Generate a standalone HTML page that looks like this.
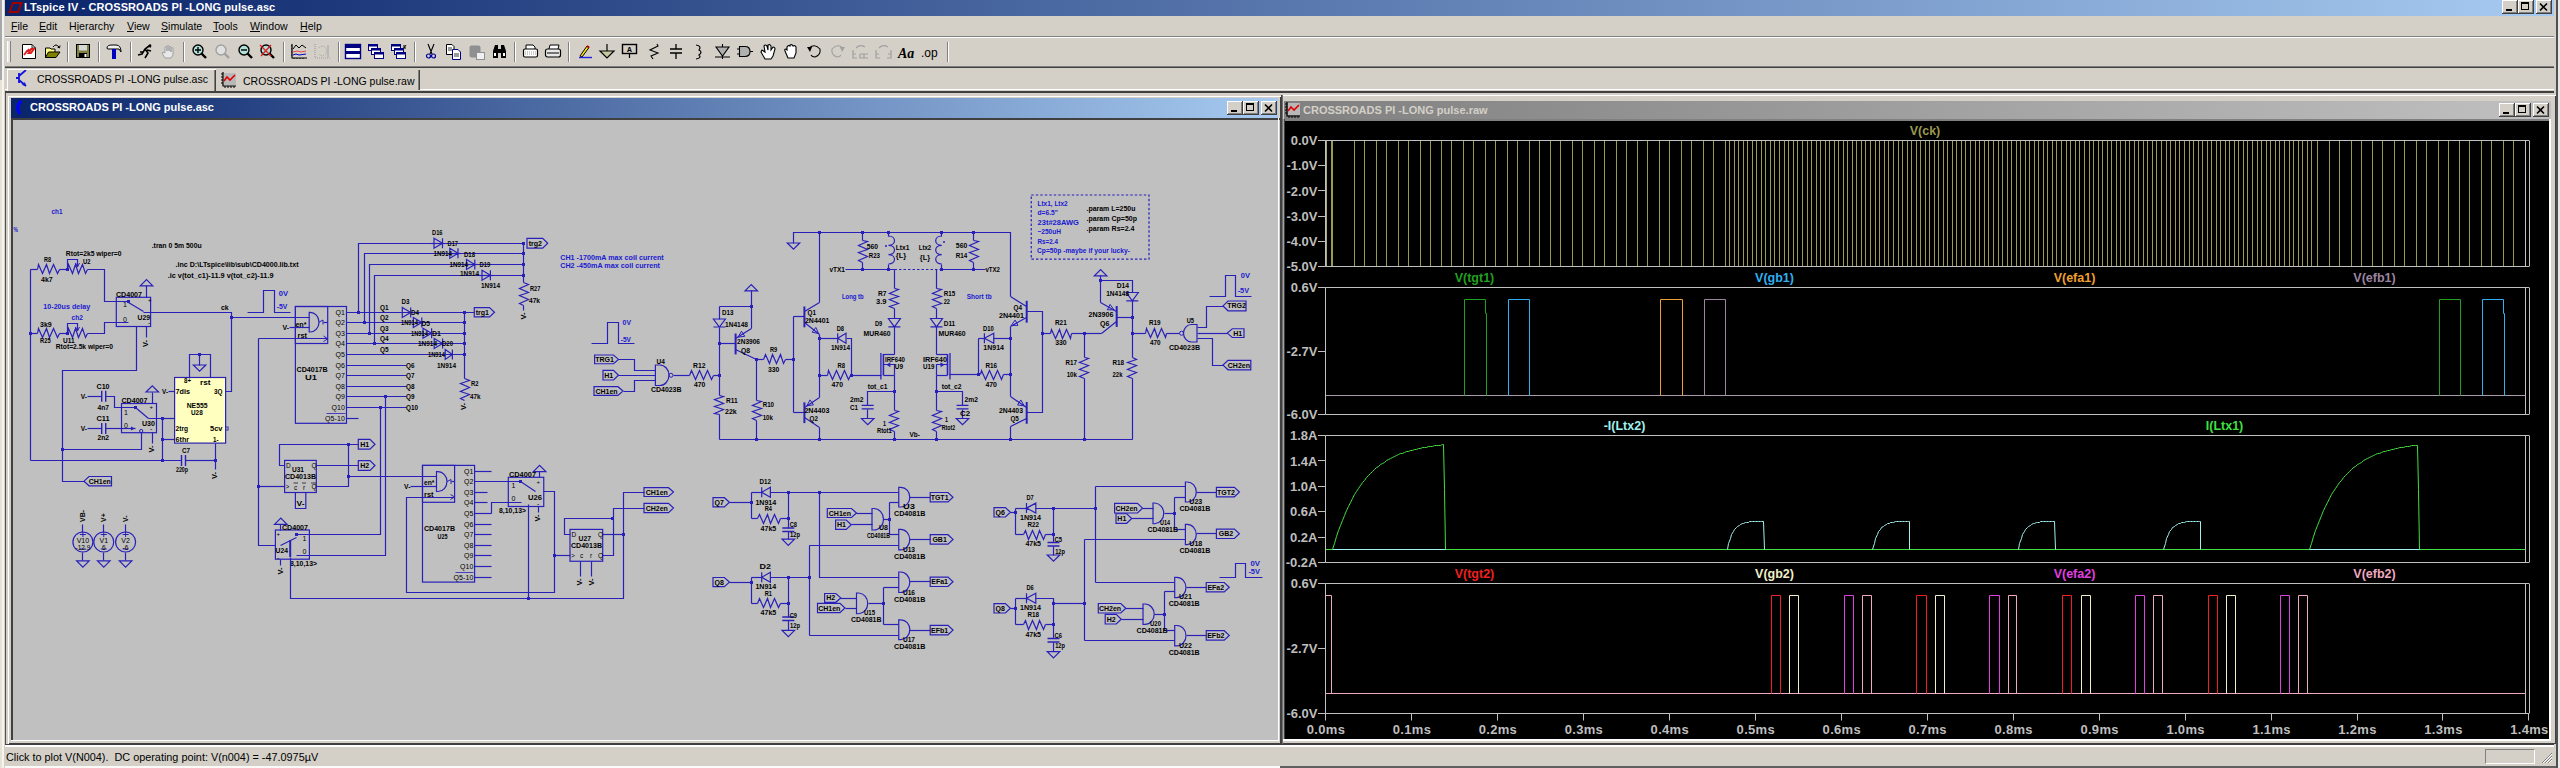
<!DOCTYPE html><html><head><meta charset="utf-8"><title>LTspice IV</title><style>html,body{margin:0;padding:0;width:2560px;height:768px;overflow:hidden;background:#D4D0C8;position:relative;font-family:"Liberation Sans",sans-serif}svg text{white-space:pre}</style></head><body><div style="position:absolute;left:5px;top:93px;width:2551px;height:651px;background:#D4D0C8"></div><div style="position:absolute;left:5px;top:93px;width:1px;height:651px;background:#505050"></div><div style="position:absolute;left:8px;top:96px;width:1273px;height:648px;background:#D4D0C8;box-shadow:inset 1px 1px 0 #FFF, inset -1px -1px 0 #404040"></div><div style="position:absolute;left:11px;top:98px;width:1267px;height:20px;background:linear-gradient(to right,#0A246A 0%,#A6CAF0 100%)"></div><svg style="position:absolute;left:13px;top:100px" width="12" height="15"><path d="M8,1 Q2,7 7,14" stroke="#0000FF" stroke-width="3" fill="none"/></svg><div style="position:absolute;left:30px;top:100px;white-space:pre;font:bold 11px/15px Liberation Sans,sans-serif;color:#FFF;letter-spacing:0px">CROSSROADS PI -LONG pulse.asc</div><div style="position:absolute;left:1227px;top:101px;width:16px;height:14px;background:#D4D0C8;box-shadow: inset -1px -1px 0 #404040, inset 1px 1px 0 #FFFFFF, inset -2px -2px 0 #808080;"></div><div style="position:absolute;left:1231px;top:110px;width:6px;height:2px;background:#000"></div><div style="position:absolute;left:1243px;top:101px;width:16px;height:14px;background:#D4D0C8;box-shadow: inset -1px -1px 0 #404040, inset 1px 1px 0 #FFFFFF, inset -2px -2px 0 #808080;"></div><div style="position:absolute;left:1246px;top:103px;width:8px;height:8px;box-sizing:border-box;border:1px solid #000;border-top-width:2px;"></div><div style="position:absolute;left:1261px;top:101px;width:16px;height:14px;background:#D4D0C8;box-shadow: inset -1px -1px 0 #404040, inset 1px 1px 0 #FFFFFF, inset -2px -2px 0 #808080;"></div><svg style="position:absolute;left:1261px;top:101px" width="16" height="14"><path d="M4.0,3.5 L11.0,10.5 M11.0,3.5 L4.0,10.5" stroke="#000" stroke-width="1.6"/></svg><div style="position:absolute;left:11px;top:118px;width:1269px;height:2px;background:#404040"></div><div style="position:absolute;left:11px;top:118px;width:2px;height:623px;background:#404040"></div><div style="position:absolute;left:1278px;top:118px;width:1px;height:623px;background:#FFFFFF"></div><div style="position:absolute;left:11px;top:740px;width:1268px;height:1px;background:#FFFFFF"></div><div style="position:absolute;left:13px;top:120px;width:1265px;height:620px;background:#C0C0C0"></div><div style="position:absolute;left:1281px;top:95px;width:1275px;height:649px;background:#D4D0C8;box-shadow:inset 1px 1px 0 #FFF, inset -1px -1px 0 #404040"></div><div style="position:absolute;left:1281px;top:95px;width:1px;height:649px;background:#404040"></div><div style="position:absolute;left:1282px;top:95px;width:1px;height:649px;background:#707070"></div><div style="position:absolute;left:1284px;top:101px;width:1267px;height:18px;background:linear-gradient(to right,#808080 0%,#C0C0C0 100%)"></div><svg style="position:absolute;left:1285px;top:102px" width="16" height="16"><rect x="3" y="1" width="12" height="12" fill="#B8B8B8"/><path d="M2,0 V14 H15" stroke="#000" stroke-width="1.2" fill="none"/><path d="M0,2 H2 M0,5 H2 M0,8 H2 M0,11 H2 M4,14 V16 M7,14 V16 M10,14 V16 M13,14 V16" stroke="#000" stroke-width="1"/><path d="M3,9 L6,5 L9,8 L14,3" stroke="#E00000" stroke-width="1.6" fill="none"/></svg><div style="position:absolute;left:1303px;top:103px;white-space:pre;font:bold 11px/15px Liberation Sans,sans-serif;color:#D4D0C8;letter-spacing:0px">CROSSROADS PI -LONG pulse.raw</div><div style="position:absolute;left:2499px;top:103px;width:16px;height:14px;background:#D4D0C8;box-shadow: inset -1px -1px 0 #404040, inset 1px 1px 0 #FFFFFF, inset -2px -2px 0 #808080;"></div><div style="position:absolute;left:2503px;top:112px;width:6px;height:2px;background:#000"></div><div style="position:absolute;left:2515px;top:103px;width:16px;height:14px;background:#D4D0C8;box-shadow: inset -1px -1px 0 #404040, inset 1px 1px 0 #FFFFFF, inset -2px -2px 0 #808080;"></div><div style="position:absolute;left:2518px;top:105px;width:8px;height:8px;box-sizing:border-box;border:1px solid #000;border-top-width:2px;"></div><div style="position:absolute;left:2533px;top:103px;width:16px;height:14px;background:#D4D0C8;box-shadow: inset -1px -1px 0 #404040, inset 1px 1px 0 #FFFFFF, inset -2px -2px 0 #808080;"></div><svg style="position:absolute;left:2533px;top:103px" width="16" height="14"><path d="M4.0,3.5 L11.0,10.5 M11.0,3.5 L4.0,10.5" stroke="#000" stroke-width="1.6"/></svg><div style="position:absolute;left:1283px;top:119px;width:1268px;height:2px;background:#808080"></div><div style="position:absolute;left:1283px;top:119px;width:1px;height:621px;background:#A0A0A0"></div><div style="position:absolute;left:1284px;top:119px;width:1px;height:621px;background:#404040"></div><div style="position:absolute;left:2549px;top:119px;width:2px;height:621px;background:#FFFFFF"></div><div style="position:absolute;left:1283px;top:739px;width:1268px;height:2px;background:#FFFFFF"></div><div style="position:absolute;left:0px;top:0px;width:2px;height:80px;background:#A8A8A8"></div><div style="position:absolute;left:0px;top:80px;width:2px;height:688px;background:#E8E2D4"></div><div style="position:absolute;left:2px;top:0px;width:2px;height:768px;background:#F4F4F0"></div><div style="position:absolute;left:2556px;top:0px;width:2px;height:768px;background:#505050"></div><div style="position:absolute;left:2558px;top:0px;width:2px;height:768px;background:#E8E8E8"></div><div style="position:absolute;left:5px;top:0px;width:2549px;height:16px;background:linear-gradient(to right,#0A246A 0%,#A6CAF0 100%)"></div><svg style="position:absolute;left:7px;top:1px" width="16" height="14"><path d="M2.5,11 L6,2 H14.5 L11,11 Z" fill="none" stroke="#A00000" stroke-width="2"/></svg><div style="position:absolute;left:24px;top:0px;white-space:pre;font:bold 11px/15px Liberation Sans,sans-serif;color:#FFF;letter-spacing:0.1px">LTspice IV - CROSSROADS PI -LONG pulse.asc</div><div style="position:absolute;left:2502px;top:0px;width:16px;height:14px;background:#D4D0C8;box-shadow: inset -1px -1px 0 #404040, inset 1px 1px 0 #FFFFFF, inset -2px -2px 0 #808080;"></div><div style="position:absolute;left:2506px;top:9px;width:6px;height:2px;background:#000"></div><div style="position:absolute;left:2518px;top:0px;width:16px;height:14px;background:#D4D0C8;box-shadow: inset -1px -1px 0 #404040, inset 1px 1px 0 #FFFFFF, inset -2px -2px 0 #808080;"></div><div style="position:absolute;left:2521px;top:2px;width:8px;height:8px;box-sizing:border-box;border:1px solid #000;border-top-width:2px;"></div><div style="position:absolute;left:2536px;top:0px;width:16px;height:14px;background:#D4D0C8;box-shadow: inset -1px -1px 0 #404040, inset 1px 1px 0 #FFFFFF, inset -2px -2px 0 #808080;"></div><svg style="position:absolute;left:2536px;top:0px" width="16" height="14"><path d="M4.0,3.5 L11.0,10.5 M11.0,3.5 L4.0,10.5" stroke="#000" stroke-width="1.6"/></svg><div style="position:absolute;left:11px;top:19px;white-space:pre;font:10.6px/14px Liberation Sans,sans-serif;color:#000;letter-spacing:0px"><u>F</u>ile</div><div style="position:absolute;left:39px;top:19px;white-space:pre;font:10.6px/14px Liberation Sans,sans-serif;color:#000;letter-spacing:0px"><u>E</u>dit</div><div style="position:absolute;left:69px;top:19px;white-space:pre;font:10.6px/14px Liberation Sans,sans-serif;color:#000;letter-spacing:0px">H<u>i</u>erarchy</div><div style="position:absolute;left:127px;top:19px;white-space:pre;font:10.6px/14px Liberation Sans,sans-serif;color:#000;letter-spacing:0px"><u>V</u>iew</div><div style="position:absolute;left:161px;top:19px;white-space:pre;font:10.6px/14px Liberation Sans,sans-serif;color:#000;letter-spacing:0px"><u>S</u>imulate</div><div style="position:absolute;left:213px;top:19px;white-space:pre;font:10.6px/14px Liberation Sans,sans-serif;color:#000;letter-spacing:0px"><u>T</u>ools</div><div style="position:absolute;left:250px;top:19px;white-space:pre;font:10.6px/14px Liberation Sans,sans-serif;color:#000;letter-spacing:0px"><u>W</u>indow</div><div style="position:absolute;left:300px;top:19px;white-space:pre;font:10.6px/14px Liberation Sans,sans-serif;color:#000;letter-spacing:0px"><u>H</u>elp</div><div style="position:absolute;left:5px;top:36px;width:2549px;height:1px;background:#808080"></div><div style="position:absolute;left:5px;top:37px;width:2549px;height:1px;background:#FFFFFF"></div><div style="position:absolute;left:7px;top:41px;width:1px;height:21px;background:#FFF"></div><div style="position:absolute;left:8px;top:41px;width:2px;height:21px;background:#E8E6E0;border-right:1px solid #808080"></div><div style="position:absolute;left:67px;top:42px;width:1px;height:20px;background:#808080"></div><div style="position:absolute;left:68px;top:42px;width:1px;height:20px;background:#FFF"></div><div style="position:absolute;left:98px;top:42px;width:1px;height:20px;background:#808080"></div><div style="position:absolute;left:99px;top:42px;width:1px;height:20px;background:#FFF"></div><div style="position:absolute;left:130px;top:42px;width:1px;height:20px;background:#808080"></div><div style="position:absolute;left:131px;top:42px;width:1px;height:20px;background:#FFF"></div><div style="position:absolute;left:183px;top:42px;width:1px;height:20px;background:#808080"></div><div style="position:absolute;left:184px;top:42px;width:1px;height:20px;background:#FFF"></div><div style="position:absolute;left:283px;top:42px;width:1px;height:20px;background:#808080"></div><div style="position:absolute;left:284px;top:42px;width:1px;height:20px;background:#FFF"></div><div style="position:absolute;left:338px;top:42px;width:1px;height:20px;background:#808080"></div><div style="position:absolute;left:339px;top:42px;width:1px;height:20px;background:#FFF"></div><div style="position:absolute;left:414px;top:42px;width:1px;height:20px;background:#808080"></div><div style="position:absolute;left:415px;top:42px;width:1px;height:20px;background:#FFF"></div><div style="position:absolute;left:514px;top:42px;width:1px;height:20px;background:#808080"></div><div style="position:absolute;left:515px;top:42px;width:1px;height:20px;background:#FFF"></div><div style="position:absolute;left:568px;top:42px;width:1px;height:20px;background:#808080"></div><div style="position:absolute;left:569px;top:42px;width:1px;height:20px;background:#FFF"></div><div style="position:absolute;left:947px;top:42px;width:1px;height:20px;background:#808080"></div><div style="position:absolute;left:948px;top:42px;width:1px;height:20px;background:#FFF"></div><div style="position:absolute;left:5px;top:66px;width:2549px;height:1px;background:#808080"></div><div style="position:absolute;left:5px;top:67px;width:2549px;height:1px;background:#404040"></div><div style="position:absolute;left:5px;top:89px;width:2549px;height:1px;background:#FFFFFF"></div><div style="position:absolute;left:5px;top:91px;width:2549px;height:2px;background:#404040"></div><div style="position:absolute;left:7px;top:69px;width:209px;height:22px;background:#D4D0C8;box-shadow:inset 1px 1px 0 #FFF, inset -1px 0 0 #404040, inset -2px 0 0 #808080"></div><div style="position:absolute;left:37px;top:72px;white-space:pre;font:10.5px/14px Liberation Sans,sans-serif;color:#000;letter-spacing:0px">CROSSROADS PI -LONG pulse.asc</div><svg style="position:absolute;left:16px;top:70px" width="14" height="17"><path d="M3,3 V13 M3,8 H0 M3,6 L10,0 M3,10 L10,16" stroke="#1010E0" stroke-width="1.8" fill="none"/><path d="M10,16 L6,15 L9,12 Z" fill="#1010E0"/></svg><div style="position:absolute;left:216px;top:70px;width:204px;height:20px;background:#D4D0C8;box-shadow:inset -1px 0 0 #404040, inset -2px 0 0 #808080"></div><div style="position:absolute;left:243px;top:74px;white-space:pre;font:10.5px/14px Liberation Sans,sans-serif;color:#000;letter-spacing:0px">CROSSROADS PI -LONG pulse.raw</div><svg style="position:absolute;left:221px;top:72px" width="16" height="16"><rect x="3" y="1" width="12" height="12" fill="#B8B8B8"/><path d="M2,0 V14 H15" stroke="#000" stroke-width="1.2" fill="none"/><path d="M0,2 H2 M0,5 H2 M0,8 H2 M0,11 H2 M4,14 V16 M7,14 V16 M10,14 V16 M13,14 V16" stroke="#000" stroke-width="1"/><path d="M3,9 L6,5 L9,8 L14,3" stroke="#E00000" stroke-width="1.6" fill="none"/></svg><div style="position:absolute;left:5px;top:744px;width:2549px;height:1px;background:#404040"></div><div style="position:absolute;left:5px;top:745px;width:2549px;height:2px;background:#FFFFFF"></div><div style="position:absolute;left:6px;top:750px;white-space:pre;font:10.85px/14px Liberation Sans,sans-serif;color:#000;letter-spacing:0px">Click to plot V(N004).  DC operating point: V(n004) = -47.0975µV</div><div style="position:absolute;left:2485px;top:749px;width:50px;height:15px;box-sizing:border-box;border:1px solid;border-color:#808080 #FFF #FFF #808080"></div><svg style="position:absolute;left:2541px;top:752px" width="12" height="12"><path d="M11,1 L1,11 M11,4 L4,11 M11,7 L7,11" stroke="#808080" stroke-width="1"/><path d="M11,2 L2,11 M11,5 L5,11 M11,8 L8,11" stroke="#FFF" stroke-width="1"/></svg><div style="position:absolute;left:5px;top:766px;width:1275px;height:2px;background:#FAFAF8"></div><div style="position:absolute;left:1280px;top:766px;width:1276px;height:2px;background:#606060"></div><svg style="position:absolute;left:0;top:38px" width="960" height="28" viewBox="0 38 960 28"><g transform="translate(22,44)"><path d="M0.5,0.5 H10 L13.5,4 V14.5 H0.5 Z" fill="#FFF" stroke="#000"/><path d="M10,0.5 V4 H13.5" fill="none" stroke="#000" stroke-width="0.8"/><path d="M2,11 L5,7 H8 L6.5,9 H9 L12,5 H9 L7.5,7 H5.5 L7,5" fill="none" stroke="#E02020" stroke-width="1.8"/></g><g transform="translate(45,44)"><path d="M0.5,4 H5 L6,5 H10 V13.5 H0.5 Z" fill="#FFFF80" stroke="#000"/><path d="M0.5,13.5 L3.5,8 H15 L11,13.5 Z" fill="#808000" stroke="#000"/><path d="M8,3 Q11,-1 14,3" fill="none" stroke="#000" stroke-width="1"/><path d="M12.5,3 L14.5,4 L15,1.5" fill="none" stroke="#000"/></g><g transform="translate(76,44)"><rect x="0.5" y="0.5" width="13" height="13" fill="#808040" stroke="#000"/><rect x="3" y="1" width="8" height="5.5" fill="#D8D8D8"/><rect x="3" y="9" width="8" height="4.5" fill="#000"/><rect x="8.5" y="10" width="2" height="3" fill="#FFF"/></g><g transform="translate(106,44)"><path d="M1,4 Q1,1 6,1 H10 Q15,1 15,8 L13,5 H1.5 Z" fill="#F0F0F0" stroke="#000"/><rect x="6" y="5" width="4" height="10" fill="#0000C0"/></g><g transform="translate(137,44)"><path d="M1,11 L5,10 L8,5 L12,2 L14,3 M8,5 L11,9 L8,14 M10,6 L14,7 M6,8 L3,8" fill="none" stroke="#000" stroke-width="1.6"/><circle cx="13" cy="1.5" r="1.3" fill="#000"/></g><g transform="translate(161,44)"><path d="M4,14 L1,9 L2,8 L4,9 V3 Q5,2 6,3 V7 V2 Q7,1 8,2 V7 V3 Q9,2 10,3 V8 V4 Q11,3 12,4 V11 L10,14 Z" fill="#E8E8E8" stroke="#A0A0A0"/></g><g transform="translate(192,44)"><circle cx="6" cy="6" r="5" fill="#B0E0D8" stroke="#000" stroke-width="1.4"/><path d="M9.5,9.5 L14,14" stroke="#000" stroke-width="2.4"/><path d="M3,6 H9 M6,3 V9" stroke="#000" stroke-width="1.4"/></g><g transform="translate(215,44)"><circle cx="6" cy="6" r="5" fill="#E0E0E0" stroke="#A0A0A0" stroke-width="1.4"/><path d="M9.5,9.5 L14,14" stroke="#A0A0A0" stroke-width="2.4"/></g><g transform="translate(238,44)"><circle cx="6" cy="6" r="5" fill="#B0E0D8" stroke="#000" stroke-width="1.4"/><path d="M9.5,9.5 L14,14" stroke="#000" stroke-width="2.4"/><path d="M3,6 H9" stroke="#000" stroke-width="1.4"/></g><g transform="translate(260,44)"><circle cx="6" cy="6" r="5" fill="#B0E0D8" stroke="#000" stroke-width="1.4"/><path d="M9.5,9.5 L14,14" stroke="#000" stroke-width="2.4"/><path d="M0,1 L11,12 M11,1 L1,12" stroke="#E02020" stroke-width="1.4"/></g><g transform="translate(291,44)"><path d="M1,0 V14 H16" fill="none" stroke="#000" stroke-width="1.2"/><path d="M0,2 H1 M0,5 H1 M0,8 H1 M0,11 H1 M3,14 V15 M6,14 V15 M9,14 V15 M12,14 V15" stroke="#000"/><path d="M2,5 L5,1 L8,4 L11,1 L15,4" fill="none" stroke="#000"/><path d="M2,8 L6,7 L10,8 L15,7" fill="none" stroke="#F04040"/><path d="M2,11 L5,10 L8,11 L15,10" fill="none" stroke="#0000C0"/></g><g transform="translate(314,44)"><path d="M1,0 V14 H16" fill="none" stroke="#A0A0A0" stroke-width="1.2" stroke-dasharray="1,1"/><path d="M5,4 Q8,1 11,3 Q14,7 11,11 Q8,13 5,10" fill="none" stroke="#A0A0A0" stroke-dasharray="1,1"/><path d="M14,1 V13" stroke="#A0A0A0"/></g><g transform="translate(345,44)"><rect x="0.5" y="0.5" width="15" height="14" fill="#FFF" stroke="#000080" stroke-width="1.4"/><rect x="1" y="1" width="14" height="3" fill="#000080"/><rect x="1" y="7" width="14" height="3" fill="#000080"/></g><g transform="translate(368,44)"><rect x="0.5" y="0.5" width="9" height="6" fill="#FFF" stroke="#000080"/><rect x="0.5" y="0.5" width="9" height="2" fill="#000080"/><rect x="3.5" y="4.5" width="9" height="6" fill="#FFF" stroke="#000080"/><rect x="3.5" y="4.5" width="9" height="2" fill="#000080"/><rect x="6.5" y="8.5" width="9" height="6" fill="#FFF" stroke="#000080"/><rect x="6.5" y="8.5" width="9" height="2" fill="#000080"/></g><g transform="translate(391,44)"><rect x="0.5" y="0.5" width="9" height="6" fill="#FFF" stroke="#000080"/><rect x="0.5" y="0.5" width="9" height="2" fill="#000080"/><rect x="3.5" y="4.5" width="9" height="6" fill="#FFF" stroke="#000080"/><rect x="3.5" y="4.5" width="9" height="2" fill="#000080"/><rect x="5.5" y="8.5" width="9" height="6" fill="#FFF" stroke="#000080"/><rect x="5.5" y="8.5" width="9" height="2" fill="#000080"/><path d="M13,4 L15,1 M13,1 V4 H15" stroke="#000" fill="none"/></g><g transform="translate(425,44)"><path d="M3,0 L7,10 M9,0 L5,10" stroke="#000" stroke-width="1.1"/><circle cx="3.5" cy="12" r="2" fill="none" stroke="#0000A0" stroke-width="1.2"/><circle cx="8.5" cy="12" r="2" fill="none" stroke="#0000A0" stroke-width="1.2"/></g><g transform="translate(446,44)"><path d="M0.5,0.5 H6 L8,2.5 V10.5 H0.5 Z" fill="#FFF" stroke="#000"/><path d="M6.5,5.5 H12 L14.5,8 V15.5 H6.5 Z" fill="#FFF" stroke="#000080"/><path d="M2,4 H6 M2,6 H6 M8,10 H13 M8,12 H13" stroke="#000" stroke-width="0.8"/></g><g transform="translate(469,44)"><rect x="0.5" y="1.5" width="11" height="12" rx="2" fill="#909090"/><rect x="7.5" y="8.5" width="8" height="7" fill="#F0F0F0" stroke="#909090"/></g><g transform="translate(492,44)"><path d="M1,14 V7 L3,1 H6 V14 Z M9,14 V1 H12 L14,7 V14 Z M6,5 H9 V9 H6 Z" fill="#000"/><rect x="2" y="9" width="2" height="3" fill="#FFF"/><rect x="11" y="9" width="2" height="3" fill="#FFF"/></g><g transform="translate(523,44)"><path d="M3,5 V1 H10 L12,3 V5" fill="#FFF" stroke="#000"/><rect x="0.5" y="5" width="14" height="8" rx="1.5" fill="#FFF" stroke="#000" stroke-width="1.2"/><path d="M2,8 H13 M2,10 H13" stroke="#999" stroke-dasharray="1,1"/></g><g transform="translate(545,44)"><path d="M4,5 L5,1 H14 L13,5" fill="#FFF" stroke="#000"/><rect x="0.5" y="5" width="15" height="8" rx="2" fill="#E8E8E8" stroke="#000" stroke-width="1.2"/><path d="M2,9 H14" stroke="#000"/></g><g transform="translate(578,44)"><path d="M2,12 L9,2 L11,3.5 L4,13 Z" fill="#FFE000" stroke="#000"/><path d="M9,2 L11,3.5" stroke="#C00000" stroke-width="2"/><path d="M1,13.5 H14" stroke="#2020E0" stroke-width="1.4"/></g><g transform="translate(599,44)"><path d="M8,0 V7" stroke="#000" stroke-width="1.2"/><path d="M1,7 H15 L8,14 Z" fill="#C8C8A0" stroke="#000" stroke-width="1.2"/></g><g transform="translate(622,44)"><rect x="0.5" y="0.5" width="14" height="9" fill="#D4D0C8" stroke="#000" stroke-width="1.4"/><text x="7.5" y="8" font-size="8" font-family="Liberation Mono" font-weight="bold" text-anchor="middle">A</text><path d="M7.5,10 V14" stroke="#000" stroke-width="1.2"/></g><g transform="translate(648,44)"><path d="M9,0 L10,2 L2,6 L10,9 L3,12 L5,15" fill="none" stroke="#000" stroke-width="1.1"/></g><g transform="translate(670,44)"><path d="M6,0 V5 M0,5 H12 M0,9 H12 M6,9 V15" fill="none" stroke="#000" stroke-width="1.3"/></g><g transform="translate(696,44)"><path d="M0,1 Q6,2 3,6 Q7,8 3,11 Q6,14 0,15" fill="none" stroke="#000" stroke-width="1.2"/></g><g transform="translate(715,44)"><path d="M7.5,0 V15 M0,13 H15" stroke="#000" stroke-width="1.1"/><path d="M1,3 H14 L7.5,12 Z" fill="#B0B0B0" stroke="#000" stroke-width="1.1"/></g><g transform="translate(737,44)"><path d="M2.5,2.5 H8 Q13,2.5 13,7.5 Q13,12.5 8,12.5 H2.5 Z" fill="#B0B0B0" stroke="#000" stroke-width="1.1"/><path d="M0,5 H2.5 M0,10 H2.5 M13,7.5 H16" stroke="#000"/></g><g transform="translate(760,44)"><path d="M5,15 L1,8 L2,6 L5,8 L4,2 Q5,0 7,2 L8,6 L8,1 Q10,0 11,2 L11,6 L13,3 Q15,3 15,5 L13,12 L11,15 Z" fill="#FFF" stroke="#000" stroke-width="1.1"/></g><g transform="translate(784,44)"><path d="M4,14 L1,7 Q0,5 2,5 L3,6 V3 Q4,1 6,2 V1 Q8,0 9,2 Q11,1 12,3 V9 L10,14 Z" fill="#FFF" stroke="#000" stroke-width="1.1"/></g><g transform="translate(807,44)"><path d="M2,4 Q8,-1 13,5 Q14,11 8,13 Q5,13 4,11" fill="none" stroke="#000" stroke-width="1.1"/><path d="M0,3 L3,8 L5,3 Z" fill="#000"/></g><g transform="translate(830,44)"><path d="M13,4 Q7,-1 2,5 Q1,11 7,13 Q10,13 11,11" fill="none" stroke="#A0A0A0" stroke-width="1.1"/><path d="M15,3 L12,8 L10,3 Z" fill="#A0A0A0"/></g><g transform="translate(852,44)"><path d="M1,6 V14 H5 M1,10 H4 M8,10 V14 H16 M8,10 H16 M12,10 V14 M4,4 Q8,0 13,3" fill="none" stroke="#A0A0A0" stroke-width="1.2"/></g><g transform="translate(875,44)"><path d="M1,6 V14 H5 M1,10 H4 M16,6 V14 H12 M16,10 H13 M4,4 Q8,0 13,3" fill="none" stroke="#A0A0A0" stroke-width="1.2"/></g><text x="898" y="58" font-family="Liberation Serif" font-style="italic" font-weight="bold" font-size="14" fill="#000">Aa</text><text x="921" y="57" font-family="Liberation Sans" font-size="12" fill="#000">.op</text></svg><svg style="position:absolute;left:1285px;top:121px" width="1264" height="618" viewBox="1285 121 1264 618"><rect x="1285" y="121" width="1264" height="618" fill="#000"/><line x1="1354.50" y1="140.50" x2="1354.50" y2="266.50" stroke="#9A9A50" stroke-width="1"/><line x1="1364.50" y1="140.50" x2="1364.50" y2="266.50" stroke="#9A9A50" stroke-width="1"/><line x1="1376.50" y1="140.50" x2="1376.50" y2="266.50" stroke="#9A9A50" stroke-width="1"/><line x1="1386.50" y1="140.50" x2="1386.50" y2="266.50" stroke="#9A9A50" stroke-width="1"/><line x1="1398.50" y1="140.50" x2="1398.50" y2="266.50" stroke="#9A9A50" stroke-width="1"/><line x1="1408.50" y1="140.50" x2="1408.50" y2="266.50" stroke="#9A9A50" stroke-width="1"/><line x1="1420.50" y1="140.50" x2="1420.50" y2="266.50" stroke="#9A9A50" stroke-width="1"/><line x1="1430.50" y1="140.50" x2="1430.50" y2="266.50" stroke="#9A9A50" stroke-width="1"/><line x1="1441.50" y1="140.50" x2="1441.50" y2="266.50" stroke="#9A9A50" stroke-width="1"/><line x1="1451.50" y1="140.50" x2="1451.50" y2="266.50" stroke="#9A9A50" stroke-width="1"/><line x1="1463.50" y1="140.50" x2="1463.50" y2="266.50" stroke="#9A9A50" stroke-width="1"/><line x1="1473.50" y1="140.50" x2="1473.50" y2="266.50" stroke="#9A9A50" stroke-width="1"/><line x1="1485.50" y1="140.50" x2="1485.50" y2="266.50" stroke="#9A9A50" stroke-width="1"/><line x1="1495.50" y1="140.50" x2="1495.50" y2="266.50" stroke="#9A9A50" stroke-width="1"/><line x1="1507.50" y1="140.50" x2="1507.50" y2="266.50" stroke="#9A9A50" stroke-width="1"/><line x1="1517.50" y1="140.50" x2="1517.50" y2="266.50" stroke="#9A9A50" stroke-width="1"/><line x1="1529.50" y1="140.50" x2="1529.50" y2="266.50" stroke="#9A9A50" stroke-width="1"/><line x1="1539.50" y1="140.50" x2="1539.50" y2="266.50" stroke="#9A9A50" stroke-width="1"/><line x1="1550.50" y1="140.50" x2="1550.50" y2="266.50" stroke="#9A9A50" stroke-width="1"/><line x1="1560.50" y1="140.50" x2="1560.50" y2="266.50" stroke="#9A9A50" stroke-width="1"/><line x1="1572.50" y1="140.50" x2="1572.50" y2="266.50" stroke="#9A9A50" stroke-width="1"/><line x1="1582.50" y1="140.50" x2="1582.50" y2="266.50" stroke="#9A9A50" stroke-width="1"/><line x1="1594.50" y1="140.50" x2="1594.50" y2="266.50" stroke="#9A9A50" stroke-width="1"/><line x1="1604.50" y1="140.50" x2="1604.50" y2="266.50" stroke="#9A9A50" stroke-width="1"/><line x1="1616.50" y1="140.50" x2="1616.50" y2="266.50" stroke="#9A9A50" stroke-width="1"/><line x1="1626.50" y1="140.50" x2="1626.50" y2="266.50" stroke="#9A9A50" stroke-width="1"/><line x1="1637.50" y1="140.50" x2="1637.50" y2="266.50" stroke="#9A9A50" stroke-width="1"/><line x1="1647.50" y1="140.50" x2="1647.50" y2="266.50" stroke="#9A9A50" stroke-width="1"/><line x1="1659.50" y1="140.50" x2="1659.50" y2="266.50" stroke="#9A9A50" stroke-width="1"/><line x1="1669.50" y1="140.50" x2="1669.50" y2="266.50" stroke="#9A9A50" stroke-width="1"/><line x1="1681.50" y1="140.50" x2="1681.50" y2="266.50" stroke="#9A9A50" stroke-width="1"/><line x1="1691.50" y1="140.50" x2="1691.50" y2="266.50" stroke="#9A9A50" stroke-width="1"/><line x1="1703.50" y1="140.50" x2="1703.50" y2="266.50" stroke="#9A9A50" stroke-width="1"/><line x1="1713.50" y1="140.50" x2="1713.50" y2="266.50" stroke="#9A9A50" stroke-width="1"/><line x1="1725.50" y1="140.50" x2="1725.50" y2="266.50" stroke="#9A9A50" stroke-width="1"/><line x1="1729.50" y1="140.50" x2="1729.50" y2="266.50" stroke="#9A9A50" stroke-width="1"/><line x1="1734.50" y1="140.50" x2="1734.50" y2="266.50" stroke="#9A9A50" stroke-width="1"/><line x1="1738.50" y1="140.50" x2="1738.50" y2="266.50" stroke="#9A9A50" stroke-width="1"/><line x1="1743.50" y1="140.50" x2="1743.50" y2="266.50" stroke="#9A9A50" stroke-width="1"/><line x1="1747.50" y1="140.50" x2="1747.50" y2="266.50" stroke="#9A9A50" stroke-width="1"/><line x1="1752.50" y1="140.50" x2="1752.50" y2="266.50" stroke="#9A9A50" stroke-width="1"/><line x1="1756.50" y1="140.50" x2="1756.50" y2="266.50" stroke="#9A9A50" stroke-width="1"/><line x1="1761.50" y1="140.50" x2="1761.50" y2="266.50" stroke="#9A9A50" stroke-width="1"/><line x1="1765.50" y1="140.50" x2="1765.50" y2="266.50" stroke="#9A9A50" stroke-width="1"/><line x1="1770.50" y1="140.50" x2="1770.50" y2="266.50" stroke="#9A9A50" stroke-width="1"/><line x1="1774.50" y1="140.50" x2="1774.50" y2="266.50" stroke="#9A9A50" stroke-width="1"/><line x1="1779.50" y1="140.50" x2="1779.50" y2="266.50" stroke="#9A9A50" stroke-width="1"/><line x1="1784.50" y1="140.50" x2="1784.50" y2="266.50" stroke="#9A9A50" stroke-width="1"/><line x1="1788.50" y1="140.50" x2="1788.50" y2="266.50" stroke="#9A9A50" stroke-width="1"/><line x1="1793.50" y1="140.50" x2="1793.50" y2="266.50" stroke="#9A9A50" stroke-width="1"/><line x1="1797.50" y1="140.50" x2="1797.50" y2="266.50" stroke="#9A9A50" stroke-width="1"/><line x1="1802.50" y1="140.50" x2="1802.50" y2="266.50" stroke="#9A9A50" stroke-width="1"/><line x1="1807.50" y1="140.50" x2="1807.50" y2="266.50" stroke="#9A9A50" stroke-width="1"/><line x1="1811.50" y1="140.50" x2="1811.50" y2="266.50" stroke="#9A9A50" stroke-width="1"/><line x1="1816.50" y1="140.50" x2="1816.50" y2="266.50" stroke="#9A9A50" stroke-width="1"/><line x1="1820.50" y1="140.50" x2="1820.50" y2="266.50" stroke="#9A9A50" stroke-width="1"/><line x1="1825.50" y1="140.50" x2="1825.50" y2="266.50" stroke="#9A9A50" stroke-width="1"/><line x1="1829.50" y1="140.50" x2="1829.50" y2="266.50" stroke="#9A9A50" stroke-width="1"/><line x1="1834.50" y1="140.50" x2="1834.50" y2="266.50" stroke="#9A9A50" stroke-width="1"/><line x1="1838.50" y1="140.50" x2="1838.50" y2="266.50" stroke="#9A9A50" stroke-width="1"/><line x1="1843.50" y1="140.50" x2="1843.50" y2="266.50" stroke="#9A9A50" stroke-width="1"/><line x1="1847.50" y1="140.50" x2="1847.50" y2="266.50" stroke="#9A9A50" stroke-width="1"/><line x1="1852.50" y1="140.50" x2="1852.50" y2="266.50" stroke="#9A9A50" stroke-width="1"/><line x1="1856.50" y1="140.50" x2="1856.50" y2="266.50" stroke="#9A9A50" stroke-width="1"/><line x1="1861.50" y1="140.50" x2="1861.50" y2="266.50" stroke="#9A9A50" stroke-width="1"/><line x1="1865.50" y1="140.50" x2="1865.50" y2="266.50" stroke="#9A9A50" stroke-width="1"/><line x1="1870.50" y1="140.50" x2="1870.50" y2="266.50" stroke="#9A9A50" stroke-width="1"/><line x1="1875.50" y1="140.50" x2="1875.50" y2="266.50" stroke="#9A9A50" stroke-width="1"/><line x1="1879.50" y1="140.50" x2="1879.50" y2="266.50" stroke="#9A9A50" stroke-width="1"/><line x1="1884.50" y1="140.50" x2="1884.50" y2="266.50" stroke="#9A9A50" stroke-width="1"/><line x1="1888.50" y1="140.50" x2="1888.50" y2="266.50" stroke="#9A9A50" stroke-width="1"/><line x1="1893.50" y1="140.50" x2="1893.50" y2="266.50" stroke="#9A9A50" stroke-width="1"/><line x1="1898.50" y1="140.50" x2="1898.50" y2="266.50" stroke="#9A9A50" stroke-width="1"/><line x1="1902.50" y1="140.50" x2="1902.50" y2="266.50" stroke="#9A9A50" stroke-width="1"/><line x1="1907.50" y1="140.50" x2="1907.50" y2="266.50" stroke="#9A9A50" stroke-width="1"/><line x1="1911.50" y1="140.50" x2="1911.50" y2="266.50" stroke="#9A9A50" stroke-width="1"/><line x1="1916.50" y1="140.50" x2="1916.50" y2="266.50" stroke="#9A9A50" stroke-width="1"/><line x1="1920.50" y1="140.50" x2="1920.50" y2="266.50" stroke="#9A9A50" stroke-width="1"/><line x1="1925.50" y1="140.50" x2="1925.50" y2="266.50" stroke="#9A9A50" stroke-width="1"/><line x1="1929.50" y1="140.50" x2="1929.50" y2="266.50" stroke="#9A9A50" stroke-width="1"/><line x1="1934.50" y1="140.50" x2="1934.50" y2="266.50" stroke="#9A9A50" stroke-width="1"/><line x1="1938.50" y1="140.50" x2="1938.50" y2="266.50" stroke="#9A9A50" stroke-width="1"/><line x1="1943.50" y1="140.50" x2="1943.50" y2="266.50" stroke="#9A9A50" stroke-width="1"/><line x1="1947.50" y1="140.50" x2="1947.50" y2="266.50" stroke="#9A9A50" stroke-width="1"/><line x1="1952.50" y1="140.50" x2="1952.50" y2="266.50" stroke="#9A9A50" stroke-width="1"/><line x1="1956.50" y1="140.50" x2="1956.50" y2="266.50" stroke="#9A9A50" stroke-width="1"/><line x1="1961.50" y1="140.50" x2="1961.50" y2="266.50" stroke="#9A9A50" stroke-width="1"/><line x1="1965.50" y1="140.50" x2="1965.50" y2="266.50" stroke="#9A9A50" stroke-width="1"/><line x1="1970.50" y1="140.50" x2="1970.50" y2="266.50" stroke="#9A9A50" stroke-width="1"/><line x1="1975.50" y1="140.50" x2="1975.50" y2="266.50" stroke="#9A9A50" stroke-width="1"/><line x1="1979.50" y1="140.50" x2="1979.50" y2="266.50" stroke="#9A9A50" stroke-width="1"/><line x1="1984.50" y1="140.50" x2="1984.50" y2="266.50" stroke="#9A9A50" stroke-width="1"/><line x1="1988.50" y1="140.50" x2="1988.50" y2="266.50" stroke="#9A9A50" stroke-width="1"/><line x1="1993.50" y1="140.50" x2="1993.50" y2="266.50" stroke="#9A9A50" stroke-width="1"/><line x1="1998.50" y1="140.50" x2="1998.50" y2="266.50" stroke="#9A9A50" stroke-width="1"/><line x1="2002.50" y1="140.50" x2="2002.50" y2="266.50" stroke="#9A9A50" stroke-width="1"/><line x1="2007.50" y1="140.50" x2="2007.50" y2="266.50" stroke="#9A9A50" stroke-width="1"/><line x1="2011.50" y1="140.50" x2="2011.50" y2="266.50" stroke="#9A9A50" stroke-width="1"/><line x1="2016.50" y1="140.50" x2="2016.50" y2="266.50" stroke="#9A9A50" stroke-width="1"/><line x1="2020.50" y1="140.50" x2="2020.50" y2="266.50" stroke="#9A9A50" stroke-width="1"/><line x1="2025.50" y1="140.50" x2="2025.50" y2="266.50" stroke="#9A9A50" stroke-width="1"/><line x1="2029.50" y1="140.50" x2="2029.50" y2="266.50" stroke="#9A9A50" stroke-width="1"/><line x1="2034.50" y1="140.50" x2="2034.50" y2="266.50" stroke="#9A9A50" stroke-width="1"/><line x1="2038.50" y1="140.50" x2="2038.50" y2="266.50" stroke="#9A9A50" stroke-width="1"/><line x1="2043.50" y1="140.50" x2="2043.50" y2="266.50" stroke="#9A9A50" stroke-width="1"/><line x1="2047.50" y1="140.50" x2="2047.50" y2="266.50" stroke="#9A9A50" stroke-width="1"/><line x1="2052.50" y1="140.50" x2="2052.50" y2="266.50" stroke="#9A9A50" stroke-width="1"/><line x1="2056.50" y1="140.50" x2="2056.50" y2="266.50" stroke="#9A9A50" stroke-width="1"/><line x1="2061.50" y1="140.50" x2="2061.50" y2="266.50" stroke="#9A9A50" stroke-width="1"/><line x1="2066.50" y1="140.50" x2="2066.50" y2="266.50" stroke="#9A9A50" stroke-width="1"/><line x1="2070.50" y1="140.50" x2="2070.50" y2="266.50" stroke="#9A9A50" stroke-width="1"/><line x1="2075.50" y1="140.50" x2="2075.50" y2="266.50" stroke="#9A9A50" stroke-width="1"/><line x1="2079.50" y1="140.50" x2="2079.50" y2="266.50" stroke="#9A9A50" stroke-width="1"/><line x1="2084.50" y1="140.50" x2="2084.50" y2="266.50" stroke="#9A9A50" stroke-width="1"/><line x1="2089.50" y1="140.50" x2="2089.50" y2="266.50" stroke="#9A9A50" stroke-width="1"/><line x1="2093.50" y1="140.50" x2="2093.50" y2="266.50" stroke="#9A9A50" stroke-width="1"/><line x1="2098.50" y1="140.50" x2="2098.50" y2="266.50" stroke="#9A9A50" stroke-width="1"/><line x1="2102.50" y1="140.50" x2="2102.50" y2="266.50" stroke="#9A9A50" stroke-width="1"/><line x1="2107.50" y1="140.50" x2="2107.50" y2="266.50" stroke="#9A9A50" stroke-width="1"/><line x1="2111.50" y1="140.50" x2="2111.50" y2="266.50" stroke="#9A9A50" stroke-width="1"/><line x1="2116.50" y1="140.50" x2="2116.50" y2="266.50" stroke="#9A9A50" stroke-width="1"/><line x1="2120.50" y1="140.50" x2="2120.50" y2="266.50" stroke="#9A9A50" stroke-width="1"/><line x1="2125.50" y1="140.50" x2="2125.50" y2="266.50" stroke="#9A9A50" stroke-width="1"/><line x1="2129.50" y1="140.50" x2="2129.50" y2="266.50" stroke="#9A9A50" stroke-width="1"/><line x1="2134.50" y1="140.50" x2="2134.50" y2="266.50" stroke="#9A9A50" stroke-width="1"/><line x1="2138.50" y1="140.50" x2="2138.50" y2="266.50" stroke="#9A9A50" stroke-width="1"/><line x1="2143.50" y1="140.50" x2="2143.50" y2="266.50" stroke="#9A9A50" stroke-width="1"/><line x1="2147.50" y1="140.50" x2="2147.50" y2="266.50" stroke="#9A9A50" stroke-width="1"/><line x1="2152.50" y1="140.50" x2="2152.50" y2="266.50" stroke="#9A9A50" stroke-width="1"/><line x1="2156.50" y1="140.50" x2="2156.50" y2="266.50" stroke="#9A9A50" stroke-width="1"/><line x1="2161.50" y1="140.50" x2="2161.50" y2="266.50" stroke="#9A9A50" stroke-width="1"/><line x1="2166.50" y1="140.50" x2="2166.50" y2="266.50" stroke="#9A9A50" stroke-width="1"/><line x1="2170.50" y1="140.50" x2="2170.50" y2="266.50" stroke="#9A9A50" stroke-width="1"/><line x1="2175.50" y1="140.50" x2="2175.50" y2="266.50" stroke="#9A9A50" stroke-width="1"/><line x1="2179.50" y1="140.50" x2="2179.50" y2="266.50" stroke="#9A9A50" stroke-width="1"/><line x1="2184.50" y1="140.50" x2="2184.50" y2="266.50" stroke="#9A9A50" stroke-width="1"/><line x1="2189.50" y1="140.50" x2="2189.50" y2="266.50" stroke="#9A9A50" stroke-width="1"/><line x1="2193.50" y1="140.50" x2="2193.50" y2="266.50" stroke="#9A9A50" stroke-width="1"/><line x1="2198.50" y1="140.50" x2="2198.50" y2="266.50" stroke="#9A9A50" stroke-width="1"/><line x1="2202.50" y1="140.50" x2="2202.50" y2="266.50" stroke="#9A9A50" stroke-width="1"/><line x1="2207.50" y1="140.50" x2="2207.50" y2="266.50" stroke="#9A9A50" stroke-width="1"/><line x1="2211.50" y1="140.50" x2="2211.50" y2="266.50" stroke="#9A9A50" stroke-width="1"/><line x1="2216.50" y1="140.50" x2="2216.50" y2="266.50" stroke="#9A9A50" stroke-width="1"/><line x1="2220.50" y1="140.50" x2="2220.50" y2="266.50" stroke="#9A9A50" stroke-width="1"/><line x1="2225.50" y1="140.50" x2="2225.50" y2="266.50" stroke="#9A9A50" stroke-width="1"/><line x1="2229.50" y1="140.50" x2="2229.50" y2="266.50" stroke="#9A9A50" stroke-width="1"/><line x1="2234.50" y1="140.50" x2="2234.50" y2="266.50" stroke="#9A9A50" stroke-width="1"/><line x1="2238.50" y1="140.50" x2="2238.50" y2="266.50" stroke="#9A9A50" stroke-width="1"/><line x1="2243.50" y1="140.50" x2="2243.50" y2="266.50" stroke="#9A9A50" stroke-width="1"/><line x1="2247.50" y1="140.50" x2="2247.50" y2="266.50" stroke="#9A9A50" stroke-width="1"/><line x1="2252.50" y1="140.50" x2="2252.50" y2="266.50" stroke="#9A9A50" stroke-width="1"/><line x1="2257.50" y1="140.50" x2="2257.50" y2="266.50" stroke="#9A9A50" stroke-width="1"/><line x1="2261.50" y1="140.50" x2="2261.50" y2="266.50" stroke="#9A9A50" stroke-width="1"/><line x1="2266.50" y1="140.50" x2="2266.50" y2="266.50" stroke="#9A9A50" stroke-width="1"/><line x1="2270.50" y1="140.50" x2="2270.50" y2="266.50" stroke="#9A9A50" stroke-width="1"/><line x1="2275.50" y1="140.50" x2="2275.50" y2="266.50" stroke="#9A9A50" stroke-width="1"/><line x1="2279.50" y1="140.50" x2="2279.50" y2="266.50" stroke="#9A9A50" stroke-width="1"/><line x1="2284.50" y1="140.50" x2="2284.50" y2="266.50" stroke="#9A9A50" stroke-width="1"/><line x1="2289.50" y1="140.50" x2="2289.50" y2="266.50" stroke="#9A9A50" stroke-width="1"/><line x1="2293.50" y1="140.50" x2="2293.50" y2="266.50" stroke="#9A9A50" stroke-width="1"/><line x1="2298.50" y1="140.50" x2="2298.50" y2="266.50" stroke="#9A9A50" stroke-width="1"/><line x1="2302.50" y1="140.50" x2="2302.50" y2="266.50" stroke="#9A9A50" stroke-width="1"/><line x1="2307.50" y1="140.50" x2="2307.50" y2="266.50" stroke="#9A9A50" stroke-width="1"/><line x1="2311.50" y1="140.50" x2="2311.50" y2="266.50" stroke="#9A9A50" stroke-width="1"/><line x1="2317.50" y1="140.50" x2="2317.50" y2="266.50" stroke="#9A9A50" stroke-width="1"/><line x1="2329.50" y1="140.50" x2="2329.50" y2="266.50" stroke="#9A9A50" stroke-width="1"/><line x1="2339.50" y1="140.50" x2="2339.50" y2="266.50" stroke="#9A9A50" stroke-width="1"/><line x1="2351.50" y1="140.50" x2="2351.50" y2="266.50" stroke="#9A9A50" stroke-width="1"/><line x1="2361.50" y1="140.50" x2="2361.50" y2="266.50" stroke="#9A9A50" stroke-width="1"/><line x1="2372.50" y1="140.50" x2="2372.50" y2="266.50" stroke="#9A9A50" stroke-width="1"/><line x1="2382.50" y1="140.50" x2="2382.50" y2="266.50" stroke="#9A9A50" stroke-width="1"/><line x1="2394.50" y1="140.50" x2="2394.50" y2="266.50" stroke="#9A9A50" stroke-width="1"/><line x1="2404.50" y1="140.50" x2="2404.50" y2="266.50" stroke="#9A9A50" stroke-width="1"/><line x1="2416.50" y1="140.50" x2="2416.50" y2="266.50" stroke="#9A9A50" stroke-width="1"/><line x1="2426.50" y1="140.50" x2="2426.50" y2="266.50" stroke="#9A9A50" stroke-width="1"/><line x1="2438.50" y1="140.50" x2="2438.50" y2="266.50" stroke="#9A9A50" stroke-width="1"/><line x1="2448.50" y1="140.50" x2="2448.50" y2="266.50" stroke="#9A9A50" stroke-width="1"/><line x1="2459.50" y1="140.50" x2="2459.50" y2="266.50" stroke="#9A9A50" stroke-width="1"/><line x1="2469.50" y1="140.50" x2="2469.50" y2="266.50" stroke="#9A9A50" stroke-width="1"/><line x1="2481.50" y1="140.50" x2="2481.50" y2="266.50" stroke="#9A9A50" stroke-width="1"/><line x1="2491.50" y1="140.50" x2="2491.50" y2="266.50" stroke="#9A9A50" stroke-width="1"/><line x1="2503.50" y1="140.50" x2="2503.50" y2="266.50" stroke="#9A9A50" stroke-width="1"/><line x1="2513.50" y1="140.50" x2="2513.50" y2="266.50" stroke="#9A9A50" stroke-width="1"/><line x1="1332.00" y1="140.50" x2="1332.00" y2="266.50" stroke="#9A9A50" stroke-width="2"/><line x1="1326.50" y1="140.50" x2="1326.50" y2="266.50" stroke="#A8A880" stroke-width="1"/><line x1="2525.50" y1="140.50" x2="2525.50" y2="266.50" stroke="#C0C0C0" stroke-width="1"/><line x1="1325.50" y1="140.50" x2="2529.00" y2="140.50" stroke="#C0C0C0" stroke-width="1"/><line x1="1325.50" y1="266.50" x2="2529.00" y2="266.50" stroke="#C0C0C0" stroke-width="1"/><line x1="1325.50" y1="140.50" x2="1325.50" y2="266.50" stroke="#C0C0C0" stroke-width="1"/><line x1="2529.50" y1="140.50" x2="2529.50" y2="266.50" stroke="#C0C0C0" stroke-width="1"/><line x1="1318.00" y1="140.50" x2="1325.50" y2="140.50" stroke="#C0C0C0" stroke-width="1"/><text x="1317.5" y="145.2" fill="#BEBEBE" font-family='"Liberation Sans",sans-serif' font-size="13" font-weight="bold" text-anchor="end" letter-spacing="0">0.0V</text><line x1="1318.00" y1="165.50" x2="1325.50" y2="165.50" stroke="#C0C0C0" stroke-width="1"/><text x="1317.5" y="170.4" fill="#BEBEBE" font-family='"Liberation Sans",sans-serif' font-size="13" font-weight="bold" text-anchor="end" letter-spacing="0">-1.0V</text><line x1="1318.00" y1="190.50" x2="1325.50" y2="190.50" stroke="#C0C0C0" stroke-width="1"/><text x="1317.5" y="195.6" fill="#BEBEBE" font-family='"Liberation Sans",sans-serif' font-size="13" font-weight="bold" text-anchor="end" letter-spacing="0">-2.0V</text><line x1="1318.00" y1="216.50" x2="1325.50" y2="216.50" stroke="#C0C0C0" stroke-width="1"/><text x="1317.5" y="220.8" fill="#BEBEBE" font-family='"Liberation Sans",sans-serif' font-size="13" font-weight="bold" text-anchor="end" letter-spacing="0">-3.0V</text><line x1="1318.00" y1="241.50" x2="1325.50" y2="241.50" stroke="#C0C0C0" stroke-width="1"/><text x="1317.5" y="246.0" fill="#BEBEBE" font-family='"Liberation Sans",sans-serif' font-size="13" font-weight="bold" text-anchor="end" letter-spacing="0">-4.0V</text><line x1="1318.00" y1="266.50" x2="1325.50" y2="266.50" stroke="#C0C0C0" stroke-width="1"/><text x="1317.5" y="271.2" fill="#BEBEBE" font-family='"Liberation Sans",sans-serif' font-size="13" font-weight="bold" text-anchor="end" letter-spacing="0">-5.0V</text><text x="1925.0" y="134.5" fill="#9A9A50" font-family='"Liberation Sans",sans-serif' font-size="12.5" font-weight="bold" text-anchor="middle" letter-spacing="0">V(ck)</text><line x1="1325.50" y1="395.50" x2="2525.50" y2="395.50" stroke="#A898A8" stroke-width="1"/><polyline points="1464.50,395.50 1464.50,299.50 1485.50,299.50 1485.50,313.50 1486.50,313.50 1486.50,395.50" fill="none" stroke="#20A020" stroke-width="1" stroke-linejoin="miter"/><polyline points="1508.50,395.50 1508.50,299.50 1529.50,299.50 1529.50,395.50" fill="none" stroke="#30B0F0" stroke-width="1" stroke-linejoin="miter"/><polyline points="1660.50,395.50 1660.50,299.50 1682.50,299.50 1682.50,395.50" fill="none" stroke="#F0A030" stroke-width="1" stroke-linejoin="miter"/><polyline points="1704.50,395.50 1704.50,299.50 1725.50,299.50 1725.50,395.50" fill="none" stroke="#9C84A0" stroke-width="1" stroke-linejoin="miter"/><polyline points="2439.50,395.50 2439.50,299.50 2460.50,299.50 2460.50,395.50" fill="none" stroke="#20A020" stroke-width="1" stroke-linejoin="miter"/><polyline points="2482.50,395.50 2482.50,299.50 2503.50,299.50 2503.50,313.50 2504.50,313.50 2504.50,395.50" fill="none" stroke="#30B0F0" stroke-width="1" stroke-linejoin="miter"/><line x1="2525.50" y1="287.50" x2="2525.50" y2="414.50" stroke="#C0C0C0" stroke-width="1"/><line x1="1325.50" y1="287.50" x2="2529.00" y2="287.50" stroke="#C0C0C0" stroke-width="1"/><line x1="1325.50" y1="414.50" x2="2529.00" y2="414.50" stroke="#C0C0C0" stroke-width="1"/><line x1="1325.50" y1="287.50" x2="1325.50" y2="414.50" stroke="#C0C0C0" stroke-width="1"/><line x1="2529.50" y1="287.50" x2="2529.50" y2="414.50" stroke="#C0C0C0" stroke-width="1"/><line x1="1318.00" y1="287.50" x2="1325.50" y2="287.50" stroke="#C0C0C0" stroke-width="1"/><text x="1317.5" y="292.2" fill="#BEBEBE" font-family='"Liberation Sans",sans-serif' font-size="13" font-weight="bold" text-anchor="end" letter-spacing="0">0.6V</text><line x1="1318.00" y1="351.50" x2="1325.50" y2="351.50" stroke="#C0C0C0" stroke-width="1"/><text x="1317.5" y="355.7" fill="#BEBEBE" font-family='"Liberation Sans",sans-serif' font-size="13" font-weight="bold" text-anchor="end" letter-spacing="0">-2.7V</text><line x1="1318.00" y1="414.50" x2="1325.50" y2="414.50" stroke="#C0C0C0" stroke-width="1"/><text x="1317.5" y="419.2" fill="#BEBEBE" font-family='"Liberation Sans",sans-serif' font-size="13" font-weight="bold" text-anchor="end" letter-spacing="0">-6.0V</text><text x="1474.5" y="282.0" fill="#20A020" font-family='"Liberation Sans",sans-serif' font-size="12.5" font-weight="bold" text-anchor="middle" letter-spacing="0">V(tgt1)</text><text x="1774.5" y="282.0" fill="#30B0F0" font-family='"Liberation Sans",sans-serif' font-size="12.5" font-weight="bold" text-anchor="middle" letter-spacing="0">V(gb1)</text><text x="2074.5" y="282.0" fill="#F0A030" font-family='"Liberation Sans",sans-serif' font-size="12.5" font-weight="bold" text-anchor="middle" letter-spacing="0">V(efa1)</text><text x="2374.5" y="282.0" fill="#9C84A0" font-family='"Liberation Sans",sans-serif' font-size="12.5" font-weight="bold" text-anchor="middle" letter-spacing="0">V(efb1)</text><line x1="1325.50" y1="549.50" x2="2525.50" y2="549.50" stroke="#40E040" stroke-width="1"/><line x1="1332.70" y1="549.50" x2="1446.00" y2="549.50" stroke="#A0F0F0" stroke-width="1"/><polyline points="1332.50,549.50 1334.50,543.50 1336.50,536.50 1338.50,530.50 1340.50,525.50 1342.50,520.50 1344.50,515.50 1346.50,510.50 1348.50,506.50 1350.50,502.50 1352.50,498.50 1354.50,494.50 1356.50,491.50 1358.50,488.50 1360.50,485.50 1362.50,482.50 1364.50,480.50 1366.50,477.50 1368.50,475.50 1370.50,473.50 1372.50,471.50 1374.50,469.50 1376.50,467.50 1378.50,466.50 1380.50,464.50 1382.50,463.50 1384.50,462.50 1386.50,460.50 1388.50,459.50 1390.50,458.50 1392.50,457.50 1394.50,456.50 1396.50,455.50 1398.50,454.50 1400.50,453.50 1402.50,453.50 1404.50,452.50 1406.50,451.50 1408.50,451.50 1410.50,450.50 1412.50,450.50 1414.50,449.50 1416.50,449.50 1418.50,448.50 1420.50,448.50 1422.50,447.50 1424.50,447.50 1426.50,447.50 1428.50,446.50 1430.50,446.50 1432.50,446.50 1434.50,445.50 1436.50,445.50 1438.50,445.50 1440.50,445.50 1442.50,444.50 1443.50,444.50 1444.50,489.50 1445.50,549.50" fill="none" stroke="#40E040" stroke-width="1" stroke-linejoin="miter"/><polyline points="1727.50,549.50 1728.50,543.50 1730.50,538.50 1731.50,534.50 1733.50,531.50 1734.50,529.50 1736.50,527.50 1737.50,526.50 1739.50,525.50 1740.50,524.50 1742.50,523.50 1743.50,523.50 1745.50,522.50 1746.50,522.50 1748.50,522.50 1749.50,521.50 1751.50,521.50 1752.50,521.50 1754.50,521.50 1755.50,521.50 1757.50,521.50 1758.50,521.50 1760.50,521.50 1761.50,521.50 1763.50,521.50 1763.50,521.50 1764.50,549.50" fill="none" stroke="#A0F0F0" stroke-width="1" stroke-linejoin="miter"/><polyline points="1872.50,549.50 1874.50,543.50 1875.50,538.50 1877.50,534.50 1878.50,531.50 1880.50,529.50 1881.50,527.50 1883.50,526.50 1884.50,525.50 1886.50,524.50 1887.50,523.50 1889.50,523.50 1890.50,522.50 1892.50,522.50 1893.50,522.50 1895.50,521.50 1896.50,521.50 1898.50,521.50 1899.50,521.50 1901.50,521.50 1902.50,521.50 1904.50,521.50 1905.50,521.50 1907.50,521.50 1908.50,521.50 1909.50,521.50 1909.50,549.50" fill="none" stroke="#A0F0F0" stroke-width="1" stroke-linejoin="miter"/><polyline points="2018.50,549.50 2019.50,543.50 2021.50,538.50 2022.50,534.50 2024.50,531.50 2025.50,529.50 2027.50,527.50 2028.50,526.50 2030.50,525.50 2031.50,524.50 2033.50,523.50 2034.50,523.50 2036.50,522.50 2037.50,522.50 2039.50,522.50 2040.50,521.50 2042.50,521.50 2043.50,521.50 2045.50,521.50 2046.50,521.50 2048.50,521.50 2049.50,521.50 2051.50,521.50 2052.50,521.50 2054.50,521.50 2054.50,521.50 2055.50,549.50" fill="none" stroke="#A0F0F0" stroke-width="1" stroke-linejoin="miter"/><polyline points="2163.50,549.50 2165.50,543.50 2166.50,538.50 2168.50,534.50 2169.50,531.50 2171.50,529.50 2172.50,527.50 2174.50,526.50 2175.50,525.50 2177.50,524.50 2178.50,523.50 2180.50,523.50 2181.50,522.50 2183.50,522.50 2184.50,522.50 2186.50,521.50 2187.50,521.50 2189.50,521.50 2190.50,521.50 2192.50,521.50 2193.50,521.50 2195.50,521.50 2196.50,521.50 2198.50,521.50 2199.50,521.50 2200.50,521.50 2200.50,549.50" fill="none" stroke="#A0F0F0" stroke-width="1" stroke-linejoin="miter"/><line x1="2309.20" y1="549.50" x2="2420.00" y2="549.50" stroke="#A0F0F0" stroke-width="1"/><polyline points="2309.50,549.50 2311.50,543.50 2313.50,536.50 2315.50,530.50 2317.50,525.50 2319.50,520.50 2321.50,515.50 2323.50,510.50 2325.50,506.50 2327.50,502.50 2329.50,498.50 2331.50,494.50 2333.50,491.50 2335.50,488.50 2337.50,485.50 2339.50,482.50 2341.50,480.50 2343.50,477.50 2345.50,475.50 2347.50,473.50 2349.50,471.50 2351.50,469.50 2353.50,467.50 2355.50,466.50 2357.50,464.50 2359.50,463.50 2361.50,462.50 2363.50,460.50 2365.50,459.50 2367.50,458.50 2369.50,457.50 2371.50,456.50 2373.50,455.50 2375.50,454.50 2377.50,453.50 2379.50,453.50 2381.50,452.50 2383.50,451.50 2385.50,451.50 2387.50,450.50 2389.50,450.50 2391.50,449.50 2393.50,449.50 2395.50,448.50 2397.50,448.50 2399.50,447.50 2401.50,447.50 2403.50,447.50 2405.50,446.50 2407.50,446.50 2409.50,446.50 2411.50,445.50 2413.50,445.50 2415.50,445.50 2417.50,445.50 2417.50,445.50 2418.50,489.50 2419.50,549.50" fill="none" stroke="#40E040" stroke-width="1" stroke-linejoin="miter"/><line x1="2525.50" y1="435.50" x2="2525.50" y2="562.50" stroke="#C0C0C0" stroke-width="1"/><line x1="1325.50" y1="435.50" x2="2529.00" y2="435.50" stroke="#C0C0C0" stroke-width="1"/><line x1="1325.50" y1="562.50" x2="2529.00" y2="562.50" stroke="#C0C0C0" stroke-width="1"/><line x1="1325.50" y1="435.50" x2="1325.50" y2="562.50" stroke="#C0C0C0" stroke-width="1"/><line x1="2529.50" y1="435.50" x2="2529.50" y2="562.50" stroke="#C0C0C0" stroke-width="1"/><line x1="1318.00" y1="435.50" x2="1325.50" y2="435.50" stroke="#C0C0C0" stroke-width="1"/><text x="1317.5" y="440.2" fill="#BEBEBE" font-family='"Liberation Sans",sans-serif' font-size="13" font-weight="bold" text-anchor="end" letter-spacing="0">1.8A</text><line x1="1318.00" y1="460.50" x2="1325.50" y2="460.50" stroke="#C0C0C0" stroke-width="1"/><text x="1317.5" y="465.6" fill="#BEBEBE" font-family='"Liberation Sans",sans-serif' font-size="13" font-weight="bold" text-anchor="end" letter-spacing="0">1.4A</text><line x1="1318.00" y1="486.50" x2="1325.50" y2="486.50" stroke="#C0C0C0" stroke-width="1"/><text x="1317.5" y="491.0" fill="#BEBEBE" font-family='"Liberation Sans",sans-serif' font-size="13" font-weight="bold" text-anchor="end" letter-spacing="0">1.0A</text><line x1="1318.00" y1="511.50" x2="1325.50" y2="511.50" stroke="#C0C0C0" stroke-width="1"/><text x="1317.5" y="516.4" fill="#BEBEBE" font-family='"Liberation Sans",sans-serif' font-size="13" font-weight="bold" text-anchor="end" letter-spacing="0">0.6A</text><line x1="1318.00" y1="537.50" x2="1325.50" y2="537.50" stroke="#C0C0C0" stroke-width="1"/><text x="1317.5" y="541.8" fill="#BEBEBE" font-family='"Liberation Sans",sans-serif' font-size="13" font-weight="bold" text-anchor="end" letter-spacing="0">0.2A</text><line x1="1318.00" y1="562.50" x2="1325.50" y2="562.50" stroke="#C0C0C0" stroke-width="1"/><text x="1317.5" y="567.2" fill="#BEBEBE" font-family='"Liberation Sans",sans-serif' font-size="13" font-weight="bold" text-anchor="end" letter-spacing="0">-0.2A</text><text x="1624.5" y="430.0" fill="#A0F0F0" font-family='"Liberation Sans",sans-serif' font-size="12.5" font-weight="bold" text-anchor="middle" letter-spacing="0">-I(Ltx2)</text><text x="2224.5" y="430.0" fill="#40E040" font-family='"Liberation Sans",sans-serif' font-size="12.5" font-weight="bold" text-anchor="middle" letter-spacing="0">I(Ltx1)</text><line x1="1325.50" y1="693.50" x2="2525.50" y2="693.50" stroke="#F0A8C0" stroke-width="1"/><polyline points="1325.50,693.50 1325.50,595.50 1331.50,595.50 1331.50,693.50" fill="none" stroke="#F0A8C0" stroke-width="1" stroke-linejoin="miter"/><polyline points="1771.50,693.50 1771.50,595.50 1780.50,595.50 1780.50,693.50" fill="none" stroke="#F02020" stroke-width="1" stroke-linejoin="miter"/><polyline points="1789.50,693.50 1789.50,595.50 1798.50,595.50 1798.50,693.50" fill="none" stroke="#F0F0C8" stroke-width="1" stroke-linejoin="miter"/><polyline points="1844.50,693.50 1844.50,595.50 1853.50,595.50 1853.50,693.50" fill="none" stroke="#E040E0" stroke-width="1" stroke-linejoin="miter"/><polyline points="1862.50,693.50 1862.50,595.50 1871.50,595.50 1871.50,693.50" fill="none" stroke="#F0A8C0" stroke-width="1" stroke-linejoin="miter"/><polyline points="1916.50,693.50 1916.50,595.50 1926.50,595.50 1926.50,693.50" fill="none" stroke="#F02020" stroke-width="1" stroke-linejoin="miter"/><polyline points="1935.50,693.50 1935.50,595.50 1944.50,595.50 1944.50,693.50" fill="none" stroke="#F0F0C8" stroke-width="1" stroke-linejoin="miter"/><polyline points="1989.50,693.50 1989.50,595.50 1999.50,595.50 1999.50,693.50" fill="none" stroke="#E040E0" stroke-width="1" stroke-linejoin="miter"/><polyline points="2008.50,693.50 2008.50,595.50 2016.50,595.50 2016.50,693.50" fill="none" stroke="#F0A8C0" stroke-width="1" stroke-linejoin="miter"/><polyline points="2062.50,693.50 2062.50,595.50 2071.50,595.50 2071.50,693.50" fill="none" stroke="#F02020" stroke-width="1" stroke-linejoin="miter"/><polyline points="2081.50,693.50 2081.50,595.50 2090.50,595.50 2090.50,693.50" fill="none" stroke="#F0F0C8" stroke-width="1" stroke-linejoin="miter"/><polyline points="2135.50,693.50 2135.50,595.50 2144.50,595.50 2144.50,693.50" fill="none" stroke="#E040E0" stroke-width="1" stroke-linejoin="miter"/><polyline points="2153.50,693.50 2153.50,595.50 2162.50,595.50 2162.50,693.50" fill="none" stroke="#F0A8C0" stroke-width="1" stroke-linejoin="miter"/><polyline points="2208.50,693.50 2208.50,595.50 2217.50,595.50 2217.50,693.50" fill="none" stroke="#F02020" stroke-width="1" stroke-linejoin="miter"/><polyline points="2226.50,693.50 2226.50,595.50 2235.50,595.50 2235.50,693.50" fill="none" stroke="#F0F0C8" stroke-width="1" stroke-linejoin="miter"/><polyline points="2280.50,693.50 2280.50,595.50 2289.50,595.50 2289.50,693.50" fill="none" stroke="#E040E0" stroke-width="1" stroke-linejoin="miter"/><polyline points="2298.50,693.50 2298.50,595.50 2307.50,595.50 2307.50,693.50" fill="none" stroke="#F0A8C0" stroke-width="1" stroke-linejoin="miter"/><line x1="2525.50" y1="583.50" x2="2525.50" y2="713.50" stroke="#C0C0C0" stroke-width="1"/><line x1="1325.50" y1="583.50" x2="2529.00" y2="583.50" stroke="#C0C0C0" stroke-width="1"/><line x1="1325.50" y1="713.50" x2="2529.00" y2="713.50" stroke="#C0C0C0" stroke-width="1"/><line x1="1325.50" y1="583.50" x2="1325.50" y2="713.50" stroke="#C0C0C0" stroke-width="1"/><line x1="2529.50" y1="583.50" x2="2529.50" y2="713.50" stroke="#C0C0C0" stroke-width="1"/><line x1="1318.00" y1="583.50" x2="1325.50" y2="583.50" stroke="#C0C0C0" stroke-width="1"/><text x="1317.5" y="588.2" fill="#BEBEBE" font-family='"Liberation Sans",sans-serif' font-size="13" font-weight="bold" text-anchor="end" letter-spacing="0">0.6V</text><line x1="1318.00" y1="648.50" x2="1325.50" y2="648.50" stroke="#C0C0C0" stroke-width="1"/><text x="1317.5" y="653.2" fill="#BEBEBE" font-family='"Liberation Sans",sans-serif' font-size="13" font-weight="bold" text-anchor="end" letter-spacing="0">-2.7V</text><line x1="1318.00" y1="713.50" x2="1325.50" y2="713.50" stroke="#C0C0C0" stroke-width="1"/><text x="1317.5" y="718.2" fill="#BEBEBE" font-family='"Liberation Sans",sans-serif' font-size="13" font-weight="bold" text-anchor="end" letter-spacing="0">-6.0V</text><text x="1474.5" y="578.0" fill="#F02020" font-family='"Liberation Sans",sans-serif' font-size="12.5" font-weight="bold" text-anchor="middle" letter-spacing="0">V(tgt2)</text><text x="1774.5" y="578.0" fill="#F0F0C8" font-family='"Liberation Sans",sans-serif' font-size="12.5" font-weight="bold" text-anchor="middle" letter-spacing="0">V(gb2)</text><text x="2074.5" y="578.0" fill="#E040E0" font-family='"Liberation Sans",sans-serif' font-size="12.5" font-weight="bold" text-anchor="middle" letter-spacing="0">V(efa2)</text><text x="2374.5" y="578.0" fill="#F0A8C0" font-family='"Liberation Sans",sans-serif' font-size="12.5" font-weight="bold" text-anchor="middle" letter-spacing="0">V(efb2)</text><line x1="1325.50" y1="713.50" x2="1325.50" y2="720.50" stroke="#C0C0C0" stroke-width="1"/><text x="1326.0" y="733.8" fill="#BEBEBE" font-family='"Liberation Sans",sans-serif' font-size="13" font-weight="bold" text-anchor="middle" letter-spacing="0.3">0.0ms</text><line x1="1411.50" y1="713.50" x2="1411.50" y2="720.50" stroke="#C0C0C0" stroke-width="1"/><text x="1412.0" y="733.8" fill="#BEBEBE" font-family='"Liberation Sans",sans-serif' font-size="13" font-weight="bold" text-anchor="middle" letter-spacing="0.3">0.1ms</text><line x1="1497.50" y1="713.50" x2="1497.50" y2="720.50" stroke="#C0C0C0" stroke-width="1"/><text x="1497.9" y="733.8" fill="#BEBEBE" font-family='"Liberation Sans",sans-serif' font-size="13" font-weight="bold" text-anchor="middle" letter-spacing="0.3">0.2ms</text><line x1="1583.50" y1="713.50" x2="1583.50" y2="720.50" stroke="#C0C0C0" stroke-width="1"/><text x="1583.9" y="733.8" fill="#BEBEBE" font-family='"Liberation Sans",sans-serif' font-size="13" font-weight="bold" text-anchor="middle" letter-spacing="0.3">0.3ms</text><line x1="1669.50" y1="713.50" x2="1669.50" y2="720.50" stroke="#C0C0C0" stroke-width="1"/><text x="1669.8" y="733.8" fill="#BEBEBE" font-family='"Liberation Sans",sans-serif' font-size="13" font-weight="bold" text-anchor="middle" letter-spacing="0.3">0.4ms</text><line x1="1755.50" y1="713.50" x2="1755.50" y2="720.50" stroke="#C0C0C0" stroke-width="1"/><text x="1755.8" y="733.8" fill="#BEBEBE" font-family='"Liberation Sans",sans-serif' font-size="13" font-weight="bold" text-anchor="middle" letter-spacing="0.3">0.5ms</text><line x1="1841.50" y1="713.50" x2="1841.50" y2="720.50" stroke="#C0C0C0" stroke-width="1"/><text x="1841.8" y="733.8" fill="#BEBEBE" font-family='"Liberation Sans",sans-serif' font-size="13" font-weight="bold" text-anchor="middle" letter-spacing="0.3">0.6ms</text><line x1="1927.50" y1="713.50" x2="1927.50" y2="720.50" stroke="#C0C0C0" stroke-width="1"/><text x="1927.7" y="733.8" fill="#BEBEBE" font-family='"Liberation Sans",sans-serif' font-size="13" font-weight="bold" text-anchor="middle" letter-spacing="0.3">0.7ms</text><line x1="2013.50" y1="713.50" x2="2013.50" y2="720.50" stroke="#C0C0C0" stroke-width="1"/><text x="2013.7" y="733.8" fill="#BEBEBE" font-family='"Liberation Sans",sans-serif' font-size="13" font-weight="bold" text-anchor="middle" letter-spacing="0.3">0.8ms</text><line x1="2099.50" y1="713.50" x2="2099.50" y2="720.50" stroke="#C0C0C0" stroke-width="1"/><text x="2099.6" y="733.8" fill="#BEBEBE" font-family='"Liberation Sans",sans-serif' font-size="13" font-weight="bold" text-anchor="middle" letter-spacing="0.3">0.9ms</text><line x1="2185.50" y1="713.50" x2="2185.50" y2="720.50" stroke="#C0C0C0" stroke-width="1"/><text x="2185.6" y="733.8" fill="#BEBEBE" font-family='"Liberation Sans",sans-serif' font-size="13" font-weight="bold" text-anchor="middle" letter-spacing="0.3">1.0ms</text><line x1="2271.50" y1="713.50" x2="2271.50" y2="720.50" stroke="#C0C0C0" stroke-width="1"/><text x="2271.6" y="733.8" fill="#BEBEBE" font-family='"Liberation Sans",sans-serif' font-size="13" font-weight="bold" text-anchor="middle" letter-spacing="0.3">1.1ms</text><line x1="2357.50" y1="713.50" x2="2357.50" y2="720.50" stroke="#C0C0C0" stroke-width="1"/><text x="2357.5" y="733.8" fill="#BEBEBE" font-family='"Liberation Sans",sans-serif' font-size="13" font-weight="bold" text-anchor="middle" letter-spacing="0.3">1.2ms</text><line x1="2442.50" y1="713.50" x2="2442.50" y2="720.50" stroke="#C0C0C0" stroke-width="1"/><text x="2443.5" y="733.8" fill="#BEBEBE" font-family='"Liberation Sans",sans-serif' font-size="13" font-weight="bold" text-anchor="middle" letter-spacing="0.3">1.3ms</text><line x1="2528.50" y1="713.50" x2="2528.50" y2="720.50" stroke="#C0C0C0" stroke-width="1"/><text x="2529.4" y="733.8" fill="#BEBEBE" font-family='"Liberation Sans",sans-serif' font-size="13" font-weight="bold" text-anchor="middle" letter-spacing="0.3">1.4ms</text></svg><svg style="position:absolute;left:13px;top:120px" width="1264" height="620" viewBox="13 120 1264 620" font-family="Liberation Sans, sans-serif"><text x="51.5" y="214.24" font-size="7.6" fill="#1A1AD0" font-weight="bold" text-anchor="start" letter-spacing="0" textLength="11" lengthAdjust="spacingAndGlyphs">ch1</text><text x="13.5" y="232.34" font-size="7.6" fill="#1A1AD0" font-weight="bold" text-anchor="start" letter-spacing="0" textLength="4.5" lengthAdjust="spacingAndGlyphs">%</text><text x="151.7" y="248.34" font-size="7.6" fill="#000" font-weight="bold" text-anchor="start" letter-spacing="0" textLength="50" lengthAdjust="spacingAndGlyphs">.tran 0 5m 500u</text><text x="65.8" y="256.24" font-size="7.6" fill="#000" font-weight="bold" text-anchor="start" letter-spacing="0" textLength="55.7" lengthAdjust="spacingAndGlyphs">Rtot=2k5 wiper=0</text><text x="44" y="262.14" font-size="7.6" fill="#000" font-weight="bold" text-anchor="start" letter-spacing="0" textLength="7" lengthAdjust="spacingAndGlyphs">R8</text><text x="83" y="264.24" font-size="7.6" fill="#000" font-weight="bold" text-anchor="start" letter-spacing="0" textLength="7.5" lengthAdjust="spacingAndGlyphs">U2</text><text x="41" y="282.34" font-size="7.6" fill="#000" font-weight="bold" text-anchor="start" letter-spacing="0" textLength="11.7" lengthAdjust="spacingAndGlyphs">4k7</text><text x="175.6" y="267.14" font-size="7.6" fill="#000" font-weight="bold" text-anchor="start" letter-spacing="0" textLength="122.9" lengthAdjust="spacingAndGlyphs">.inc D:\LTspice\lib\sub\CD4000.lib.txt</text><text x="167.7" y="278.14" font-size="7.6" fill="#000" font-weight="bold" text-anchor="start" letter-spacing="0" textLength="105.8" lengthAdjust="spacingAndGlyphs">.ic v(tot_c1)-11.9 v(tot_c2)-11.9</text><polyline points="30.5,269.5 37.5,269.5" fill="none" stroke="#2820B8" stroke-width="1.2"/><polyline points="37.5,269.5 38.5,264.5 42.5,273.5 46.5,264.5 49.5,273.5 53.5,264.5 57.5,273.5 59.5,269.5" fill="none" stroke="#2820B8" stroke-width="1.2"/><polyline points="59.5,269.5 67.5,269.5" fill="none" stroke="#2820B8" stroke-width="1.2"/><rect x="66" y="268" width="3" height="3" fill="#2820B8"/><polyline points="67.5,269.5 68.5,264.5 72.5,273.5 75.5,264.5 78.5,273.5 82.5,264.5 85.5,273.5 87.5,269.5" fill="none" stroke="#2820B8" stroke-width="1.2"/><polyline points="67.5,269.5 67.5,259.5 77.5,259.5 77.5,266.5" fill="none" stroke="#2820B8" stroke-width="1.2"/><path d="M75.5,263 L77.5,267 L79.5,263" fill="none" stroke="#2820B8" stroke-width="1"/><polyline points="87.5,269.5 104.5,269.5 104.5,301.5 128.5,301.5" fill="none" stroke="#2820B8" stroke-width="1.2"/><polyline points="30.5,269.5 30.5,460.5" fill="none" stroke="#2820B8" stroke-width="1.2"/><rect x="29" y="332" width="3" height="3" fill="#2820B8"/><polyline points="30.5,333.5 37.5,333.5" fill="none" stroke="#2820B8" stroke-width="1.2"/><polyline points="37.5,333.5 38.5,328.5 42.5,337.5 46.5,328.5 49.5,337.5 53.5,328.5 57.5,337.5 59.5,333.5" fill="none" stroke="#2820B8" stroke-width="1.2"/><polyline points="59.5,333.5 67.5,333.5" fill="none" stroke="#2820B8" stroke-width="1.2"/><rect x="66" y="332" width="3" height="3" fill="#2820B8"/><polyline points="67.5,333.5 68.5,328.5 72.5,337.5 75.5,328.5 78.5,337.5 82.5,328.5 85.5,337.5 87.5,333.5" fill="none" stroke="#2820B8" stroke-width="1.2"/><polyline points="67.5,333.5 67.5,323.5 77.5,323.5 77.5,330.5" fill="none" stroke="#2820B8" stroke-width="1.2"/><path d="M75.5,327 L77.5,331 L79.5,327" fill="none" stroke="#2820B8" stroke-width="1"/><polyline points="87.5,333.5 104.5,333.5 104.5,322.5 128.5,322.5" fill="none" stroke="#2820B8" stroke-width="1.2"/><text x="43.3" y="309.44" font-size="7.6" fill="#1A1AD0" font-weight="bold" text-anchor="start" letter-spacing="0" textLength="46.9" lengthAdjust="spacingAndGlyphs">10-20us delay</text><text x="71.5" y="320.24" font-size="7.6" fill="#1A1AD0" font-weight="bold" text-anchor="start" letter-spacing="0" textLength="11.5" lengthAdjust="spacingAndGlyphs">ch2</text><text x="40" y="327.14" font-size="7.6" fill="#000" font-weight="bold" text-anchor="start" letter-spacing="0" textLength="11.7" lengthAdjust="spacingAndGlyphs">3k9</text><text x="40" y="342.74" font-size="7.6" fill="#000" font-weight="bold" text-anchor="start" letter-spacing="0" textLength="10.6" lengthAdjust="spacingAndGlyphs">R25</text><text x="63" y="342.74" font-size="7.6" fill="#000" font-weight="bold" text-anchor="start" letter-spacing="0" textLength="11.6" lengthAdjust="spacingAndGlyphs">U11</text><text x="55.8" y="349.04" font-size="7.6" fill="#000" font-weight="bold" text-anchor="start" letter-spacing="0" textLength="57.2" lengthAdjust="spacingAndGlyphs">Rtot=2.5k wiper=0</text><rect x="116.3" y="297.3" width="34.3" height="29.2" fill="none" stroke="#2820B8" stroke-width="1.2"/><text x="116" y="296.74" font-size="7.6" fill="#000" font-weight="bold" text-anchor="start" letter-spacing="0" textLength="26" lengthAdjust="spacingAndGlyphs">CD4007</text><polyline points="146.5,297.5 146.5,285.5" fill="none" stroke="#2820B8" stroke-width="1.2"/><path d="M140.25,285.8 H152.75 L146.5,279.6 Z" fill="none" stroke="#2820B8" stroke-width="1.2"/><text x="123" y="307" font-size="7" fill="#000" font-weight="normal" text-anchor="start" letter-spacing="0.2">1</text><text x="123" y="322" font-size="7" fill="#000" font-weight="normal" text-anchor="start" letter-spacing="0.2">0</text><text x="148" y="302" font-size="6" fill="#000" font-weight="normal" text-anchor="start" letter-spacing="0.2">+</text><text x="148" y="324.5" font-size="7" fill="#000" font-weight="normal" text-anchor="start" letter-spacing="0.2">-</text><text x="137.5" y="320.24" font-size="7.6" fill="#000" font-weight="bold" text-anchor="start" letter-spacing="0" textLength="12.5" lengthAdjust="spacingAndGlyphs">U29</text><rect x="127" y="300" width="3" height="3" fill="#2820B8"/><polyline points="128.5,302.5 143.5,311.5" fill="none" stroke="#2820B8" stroke-width="1.2"/><polyline points="136.5,326.5 136.5,370.5 62.5,370.5 62.5,481.5 84.5,481.5" fill="none" stroke="#2820B8" stroke-width="1.2"/><path d="M111.5,476.5 H89 L84,481.15 L89,485.8 H111.5 Z" fill="none" stroke="#2820B8" stroke-width="1.2"/><text x="99.75" y="483.74" font-size="7" fill="#000" font-weight="bold" text-anchor="middle" letter-spacing="0">CH1en</text><polyline points="146.5,326.5 146.5,337.5" fill="none" stroke="#2820B8" stroke-width="1.2"/><text x="148.3" y="347" font-size="7.5" fill="#000" font-weight="bold" text-anchor="start" letter-spacing="0" transform="rotate(-90 148.3 347)">V-</text><polyline points="143.5,312.5 231.5,312.5 231.5,391.5 225.5,391.5" fill="none" stroke="#2820B8" stroke-width="1.2"/><rect x="230" y="316" width="3" height="3" fill="#2820B8"/><polyline points="231.5,317.5 309.5,317.5" fill="none" stroke="#2820B8" stroke-width="1.2"/><text x="221" y="310.44" font-size="7.6" fill="#000" font-weight="bold" text-anchor="start" letter-spacing="0" textLength="7.7" lengthAdjust="spacingAndGlyphs">ck</text><polyline points="247.5,312.5 263.5,312.5 263.5,290.5 274.5,290.5 274.5,312.5 290.5,312.5" fill="none" stroke="#2820B8" stroke-width="1.2"/><text x="278.7" y="296.24" font-size="7.6" fill="#1A1AD0" font-weight="bold" text-anchor="start" letter-spacing="0" textLength="9.3" lengthAdjust="spacingAndGlyphs">0V</text><text x="276.7" y="309.44" font-size="7.6" fill="#1A1AD0" font-weight="bold" text-anchor="start" letter-spacing="0" textLength="10.6" lengthAdjust="spacingAndGlyphs">-5V</text><rect x="295.4" y="306.5" width="51.1" height="116.8" fill="none" stroke="#2820B8" stroke-width="1.2"/><rect x="295.4" y="306.5" width="32.3" height="37" fill="none" stroke="#2820B8" stroke-width="1.2"/><path d="M309.2,312.3 H310.13 A8.86,9.85 0 0 1 310.13,332 H309.2 Z" fill="none" stroke="#2820B8" stroke-width="1.2"/><path d="M319,322.2 L323,320 L323,324.5" fill="none" stroke="#2820B8" stroke-width="1"/><polyline points="323.5,322.5 327.5,322.5" fill="none" stroke="#2820B8" stroke-width="1.2"/><polyline points="289.5,327.5 309.5,327.5" fill="none" stroke="#2820B8" stroke-width="1.2"/><text x="282.5" y="330.24" font-size="7.6" fill="#000" font-weight="bold" text-anchor="start" letter-spacing="0" textLength="6.5" lengthAdjust="spacingAndGlyphs">V-</text><text x="295.4" y="327.14" font-size="7.6" fill="#000" font-weight="bold" text-anchor="start" letter-spacing="0" textLength="11.1" lengthAdjust="spacingAndGlyphs">en*</text><text x="297.5" y="337.94" font-size="7.6" fill="#000" font-weight="bold" text-anchor="start" letter-spacing="0" textLength="9.5" lengthAdjust="spacingAndGlyphs">rst</text><polyline points="258.5,338.5 327.5,338.5" fill="none" stroke="#2820B8" stroke-width="1.2"/><path d="M323.5,336 L327.7,338.75 L323.5,341.5" fill="none" stroke="#2820B8" stroke-width="1"/><polyline points="258.5,338.5 258.5,545.5 275.5,545.5" fill="none" stroke="#2820B8" stroke-width="1.2"/><text x="345" y="314.8" font-size="7" fill="#000" font-weight="normal" text-anchor="end" letter-spacing="0.1">Q1</text><text x="345" y="325.2" font-size="7" fill="#000" font-weight="normal" text-anchor="end" letter-spacing="0.1">Q2</text><text x="345" y="336" font-size="7" fill="#000" font-weight="normal" text-anchor="end" letter-spacing="0.1">Q3</text><text x="345" y="346" font-size="7" fill="#000" font-weight="normal" text-anchor="end" letter-spacing="0.1">Q4</text><text x="345" y="356.9" font-size="7" fill="#000" font-weight="normal" text-anchor="end" letter-spacing="0.1">Q5</text><text x="345" y="367.9" font-size="7" fill="#000" font-weight="normal" text-anchor="end" letter-spacing="0.1">Q6</text><text x="345" y="377.9" font-size="7" fill="#000" font-weight="normal" text-anchor="end" letter-spacing="0.1">Q7</text><text x="345" y="388.75" font-size="7" fill="#000" font-weight="normal" text-anchor="end" letter-spacing="0.1">Q8</text><text x="345" y="399.2" font-size="7" fill="#000" font-weight="normal" text-anchor="end" letter-spacing="0.1">Q9</text><text x="345" y="409.6" font-size="7" fill="#000" font-weight="normal" text-anchor="end" letter-spacing="0.1">Q10</text><text x="345" y="420.6" font-size="7" fill="#000" font-weight="normal" text-anchor="end" letter-spacing="0.1">Q5-10</text><polyline points="326.5,413.5 345.5,413.5" fill="none" stroke="#2820B8" stroke-width="0.8"/><text x="296.5" y="372.34" font-size="7.6" fill="#000" font-weight="bold" text-anchor="start" letter-spacing="0" textLength="31.2" lengthAdjust="spacingAndGlyphs">CD4017B</text><text x="305" y="380.04" font-size="7.6" fill="#000" font-weight="bold" text-anchor="start" letter-spacing="0" textLength="12" lengthAdjust="spacingAndGlyphs">U1</text><rect x="174.6" y="377.5" width="51" height="65.6" fill="#FFFFC0" stroke="#2820B8" stroke-width="1.2"/><text x="184" y="383.34" font-size="7.6" fill="#000" font-weight="bold" text-anchor="start" letter-spacing="0" textLength="7" lengthAdjust="spacingAndGlyphs">8+</text><text x="200" y="385.44" font-size="7.6" fill="#000" font-weight="bold" text-anchor="start" letter-spacing="0" textLength="10.5" lengthAdjust="spacingAndGlyphs">rst</text><polyline points="199.5,377.5 210.5,377.5" fill="none" stroke="#2820B8" stroke-width="0.8"/><text x="175.6" y="393.74" font-size="7.6" fill="#000" font-weight="bold" text-anchor="start" letter-spacing="0" textLength="14.4" lengthAdjust="spacingAndGlyphs">7dis</text><text x="214" y="393.74" font-size="7.6" fill="#000" font-weight="bold" text-anchor="start" letter-spacing="0" textLength="8.5" lengthAdjust="spacingAndGlyphs">3Q</text><text x="186.7" y="408.34" font-size="7.6" fill="#000" font-weight="bold" text-anchor="start" letter-spacing="0" textLength="20.8" lengthAdjust="spacingAndGlyphs">NE555</text><text x="191" y="415.04" font-size="7.6" fill="#000" font-weight="bold" text-anchor="start" letter-spacing="0" textLength="11.7" lengthAdjust="spacingAndGlyphs">U28</text><text x="175.6" y="431.24" font-size="7.6" fill="#000" font-weight="bold" text-anchor="start" letter-spacing="0" textLength="12.4" lengthAdjust="spacingAndGlyphs">2trg</text><text x="210" y="431.24" font-size="7.6" fill="#000" font-weight="bold" text-anchor="start" letter-spacing="0" textLength="12.5" lengthAdjust="spacingAndGlyphs">5cv</text><text x="175.6" y="442.34" font-size="7.6" fill="#000" font-weight="bold" text-anchor="start" letter-spacing="0" textLength="13.4" lengthAdjust="spacingAndGlyphs">6thr</text><text x="213" y="442.34" font-size="7.6" fill="#000" font-weight="bold" text-anchor="start" letter-spacing="0" textLength="5.5" lengthAdjust="spacingAndGlyphs">1-</text><polyline points="189.5,377.5 189.5,354.5 210.5,354.5 210.5,377.5" fill="none" stroke="#2820B8" stroke-width="1.2"/><rect x="198" y="353" width="3" height="3" fill="#2820B8"/><polyline points="199.5,354.5 199.5,365.5" fill="none" stroke="#2820B8" stroke-width="1.2"/><path d="M193.35,365 H205.85 L199.6,371.25 Z" fill="none" stroke="#2820B8" stroke-width="1.2"/><polyline points="168.5,391.5 174.5,391.5" fill="none" stroke="#2820B8" stroke-width="1.2"/><text x="162" y="393.74" font-size="7.6" fill="#000" font-weight="bold" text-anchor="start" letter-spacing="0" textLength="6" lengthAdjust="spacingAndGlyphs">V-</text><rect x="225.6" y="427" width="2.5" height="3" fill="none" stroke="#2820B8" stroke-width="0.9"/><polyline points="148.5,418.5 162.5,418.5 162.5,460.5" fill="none" stroke="#2820B8" stroke-width="1.2"/><polyline points="162.5,418.5 174.5,418.5" fill="none" stroke="#2820B8" stroke-width="1.2"/><polyline points="162.5,439.5 174.5,439.5" fill="none" stroke="#2820B8" stroke-width="1.2"/><rect x="161" y="417" width="3" height="3" fill="#2820B8"/><rect x="161" y="438" width="3" height="3" fill="#2820B8"/><rect x="161" y="459" width="3" height="3" fill="#2820B8"/><polyline points="215.5,443.5 215.5,460.5" fill="none" stroke="#2820B8" stroke-width="1.2"/><rect x="214" y="459" width="3" height="3" fill="#2820B8"/><polyline points="215.5,460.5 215.5,469.5" fill="none" stroke="#2820B8" stroke-width="1.2"/><text x="217" y="479" font-size="7.5" fill="#000" font-weight="bold" text-anchor="start" letter-spacing="0" transform="rotate(-90 217 479)">V-</text><polyline points="30.5,460.5 181.5,460.5" fill="none" stroke="#2820B8" stroke-width="1.2"/><path d="M181.5,454.9 V465.9 M185.5,454.9 V465.9" stroke="#2820B8" stroke-width="1.4"/><polyline points="185.5,460.5 215.5,460.5" fill="none" stroke="#2820B8" stroke-width="1.2"/><text x="182" y="453.34" font-size="7.6" fill="#000" font-weight="bold" text-anchor="start" letter-spacing="0" textLength="8" lengthAdjust="spacingAndGlyphs">C7</text><text x="176" y="472.34" font-size="7.6" fill="#000" font-weight="bold" text-anchor="start" letter-spacing="0" textLength="12" lengthAdjust="spacingAndGlyphs">220p</text><text x="80.8" y="398.99" font-size="7.6" fill="#000" font-weight="bold" text-anchor="start" letter-spacing="0" textLength="6.2" lengthAdjust="spacingAndGlyphs">V-</text><polyline points="87.5,396.5 101.5,396.5" fill="none" stroke="#2820B8" stroke-width="1.2"/><path d="M101.7,390.75 V401.75 M105.7,390.75 V401.75" stroke="#2820B8" stroke-width="1.4"/><polyline points="105.5,396.5 114.5,396.5 114.5,407.5 135.5,407.5" fill="none" stroke="#2820B8" stroke-width="1.2"/><text x="96.5" y="388.99" font-size="7.6" fill="#000" font-weight="bold" text-anchor="start" letter-spacing="0" textLength="13.1" lengthAdjust="spacingAndGlyphs">C10</text><text x="97.5" y="409.74" font-size="7.6" fill="#000" font-weight="bold" text-anchor="start" letter-spacing="0" textLength="11.5" lengthAdjust="spacingAndGlyphs">4n7</text><text x="80.8" y="431.24" font-size="7.6" fill="#000" font-weight="bold" text-anchor="start" letter-spacing="0" textLength="6.2" lengthAdjust="spacingAndGlyphs">V-</text><polyline points="87.5,428.5 101.5,428.5" fill="none" stroke="#2820B8" stroke-width="1.2"/><path d="M101.7,423 V434 M105.7,423 V434" stroke="#2820B8" stroke-width="1.4"/><polyline points="105.5,428.5 135.5,428.5" fill="none" stroke="#2820B8" stroke-width="1.2"/><path d="M131,426.5 L135,428.5 L131,430.5" fill="#2820B8"/><text x="96.5" y="421.49" font-size="7.6" fill="#000" font-weight="bold" text-anchor="start" letter-spacing="0" textLength="13.1" lengthAdjust="spacingAndGlyphs">C11</text><text x="97.5" y="440.04" font-size="7.6" fill="#000" font-weight="bold" text-anchor="start" letter-spacing="0" textLength="11.5" lengthAdjust="spacingAndGlyphs">2n2</text><rect x="121.5" y="403.5" width="35" height="29.2" fill="none" stroke="#2820B8" stroke-width="1.2"/><text x="121.5" y="403.14" font-size="7.6" fill="#000" font-weight="bold" text-anchor="start" letter-spacing="0" textLength="26" lengthAdjust="spacingAndGlyphs">CD4007</text><polyline points="152.5,392.5 152.5,403.5" fill="none" stroke="#2820B8" stroke-width="1.2"/><path d="M146.05,392 H158.55 L152.3,385.8 Z" fill="none" stroke="#2820B8" stroke-width="1.2"/><text x="124" y="415" font-size="7" fill="#000" font-weight="normal" text-anchor="start" letter-spacing="0.2">1</text><text x="124" y="427.5" font-size="7" fill="#000" font-weight="normal" text-anchor="start" letter-spacing="0.2">0</text><text x="149.5" y="409" font-size="6" fill="#000" font-weight="normal" text-anchor="start" letter-spacing="0.2">+</text><text x="150" y="431" font-size="7" fill="#000" font-weight="normal" text-anchor="start" letter-spacing="0.2">-</text><text x="142" y="426.24" font-size="7.6" fill="#000" font-weight="bold" text-anchor="start" letter-spacing="0" textLength="13" lengthAdjust="spacingAndGlyphs">U30</text><rect x="134" y="406" width="3" height="3" fill="#2820B8"/><polyline points="135.5,407.5 148.5,418.5" fill="none" stroke="#2820B8" stroke-width="1.2"/><polyline points="152.5,432.5 152.5,443.5" fill="none" stroke="#2820B8" stroke-width="1.2"/><text x="154.1" y="452.5" font-size="7.5" fill="#000" font-weight="bold" text-anchor="start" letter-spacing="0" transform="rotate(-90 154.1 452.5)">V-</text><polyline points="141.5,432.5 141.5,449.5 62.5,449.5" fill="none" stroke="#2820B8" stroke-width="1.2"/><rect x="61" y="448" width="3" height="3" fill="#2820B8"/><circle cx="141.2" cy="431" r="1.6" fill="none" stroke="#2820B8" stroke-width="1"/><circle cx="82.9" cy="542" r="10" fill="none" stroke="#2820B8" stroke-width="1.2"/><polyline points="82.5,524.5 82.5,532.5" fill="none" stroke="#2820B8" stroke-width="1.2"/><polyline points="82.5,552.5 82.5,560.5" fill="none" stroke="#2820B8" stroke-width="1.2"/><path d="M76.65,560.8 H89.15 L82.9,567.05 Z" fill="none" stroke="#2820B8" stroke-width="1.2"/><path d="M79.9,534.5 H85.9 M82.9,532 V537 M79.9,549 H85.9" stroke="#2820B8" stroke-width="1"/><text x="85.4" y="522" font-size="7" fill="#000" font-weight="bold" text-anchor="start" letter-spacing="0" transform="rotate(-90 85.4 522)">VB-</text><text x="82.9" y="543" font-size="7" fill="#000" font-weight="normal" text-anchor="middle" letter-spacing="0">V10</text><text x="82.9" y="549.5" font-size="6.5" fill="#000" font-weight="normal" text-anchor="middle" letter-spacing="0">-12.9</text><circle cx="103.75" cy="542" r="10" fill="none" stroke="#2820B8" stroke-width="1.2"/><polyline points="103.5,524.5 103.5,532.5" fill="none" stroke="#2820B8" stroke-width="1.2"/><polyline points="103.5,552.5 103.5,560.5" fill="none" stroke="#2820B8" stroke-width="1.2"/><path d="M97.5,560.8 H110 L103.75,567.05 Z" fill="none" stroke="#2820B8" stroke-width="1.2"/><path d="M100.75,534.5 H106.75 M103.75,532 V537 M100.75,549 H106.75" stroke="#2820B8" stroke-width="1"/><text x="106.25" y="522" font-size="7" fill="#000" font-weight="bold" text-anchor="start" letter-spacing="0" transform="rotate(-90 106.25 522)">V+</text><text x="103.75" y="543" font-size="7" fill="#000" font-weight="normal" text-anchor="middle" letter-spacing="0">V1</text><text x="103.75" y="549.5" font-size="6.5" fill="#000" font-weight="normal" text-anchor="middle" letter-spacing="0">6</text><circle cx="125.6" cy="542" r="10" fill="none" stroke="#2820B8" stroke-width="1.2"/><polyline points="125.5,524.5 125.5,532.5" fill="none" stroke="#2820B8" stroke-width="1.2"/><polyline points="125.5,552.5 125.5,560.5" fill="none" stroke="#2820B8" stroke-width="1.2"/><path d="M119.35,560.8 H131.85 L125.6,567.05 Z" fill="none" stroke="#2820B8" stroke-width="1.2"/><path d="M122.6,534.5 H128.6 M125.6,532 V537 M122.6,549 H128.6" stroke="#2820B8" stroke-width="1"/><text x="128.1" y="522" font-size="7" fill="#000" font-weight="bold" text-anchor="start" letter-spacing="0" transform="rotate(-90 128.1 522)">V-</text><text x="125.6" y="543" font-size="7" fill="#000" font-weight="normal" text-anchor="middle" letter-spacing="0">V2</text><text x="125.6" y="549.5" font-size="6.5" fill="#000" font-weight="normal" text-anchor="middle" letter-spacing="0">-6</text><rect x="284.6" y="460.4" width="31.7" height="32.1" fill="none" stroke="#2820B8" stroke-width="1.2"/><text x="286" y="467.5" font-size="6.5" fill="#000" font-weight="normal" text-anchor="start" letter-spacing="0.2">D</text><text x="311.5" y="467.5" font-size="6.5" fill="#000" font-weight="normal" text-anchor="start" letter-spacing="0.2">Q</text><text x="292" y="471.94" font-size="7.6" fill="#000" font-weight="bold" text-anchor="start" letter-spacing="0" textLength="12" lengthAdjust="spacingAndGlyphs">U31</text><text x="285" y="479.24" font-size="7.6" fill="#000" font-weight="bold" text-anchor="start" letter-spacing="0" textLength="31" lengthAdjust="spacingAndGlyphs">CD4013B</text><text x="285.5" y="489" font-size="6.5" fill="#000" font-weight="normal" text-anchor="start" letter-spacing="0.2">&gt;</text><text x="294" y="489.5" font-size="6.5" fill="#000" font-weight="normal" text-anchor="start" letter-spacing="0.2">c</text><text x="303" y="489.5" font-size="6.5" fill="#000" font-weight="normal" text-anchor="start" letter-spacing="0.2">r</text><text x="311.5" y="489" font-size="6.5" fill="#000" font-weight="normal" text-anchor="start" letter-spacing="0.2">Q</text><path d="M293.5,483 H298 M302,483 H306 M311,483 H316" stroke="#000" stroke-width="0.7"/><path d="M295.4,492.5 V508.5 H305.8 V492.5" fill="none" stroke="#2820B8" stroke-width="1.2"/><text x="296.5" y="505.74" font-size="7.6" fill="#000" font-weight="bold" text-anchor="start" letter-spacing="0" textLength="8" lengthAdjust="spacingAndGlyphs">V-</text><polyline points="284.5,465.5 279.5,465.5 279.5,444.5 358.5,444.5" fill="none" stroke="#2820B8" stroke-width="1.2"/><rect x="347" y="443" width="3" height="3" fill="#2820B8"/><polyline points="316.5,465.5 358.5,465.5" fill="none" stroke="#2820B8" stroke-width="1.2"/><polyline points="316.5,486.5 348.5,486.5 348.5,444.5" fill="none" stroke="#2820B8" stroke-width="1.2"/><rect x="347" y="475" width="3" height="3" fill="#2820B8"/><polyline points="348.5,476.5 436.5,476.5" fill="none" stroke="#2820B8" stroke-width="1.2"/><polyline points="258.5,486.5 284.5,486.5" fill="none" stroke="#2820B8" stroke-width="1.2"/><rect x="257" y="485" width="3" height="3" fill="#2820B8"/><path d="M358.3,439.4 H370 L375,444.3 L370,449.2 H358.3 Z" fill="none" stroke="#2820B8" stroke-width="1.2"/><text x="364.65" y="446.89" font-size="7" fill="#000" font-weight="bold" text-anchor="middle" letter-spacing="0">H1</text><path d="M358.3,460.6 H370 L375,465.5 L370,470.4 H358.3 Z" fill="none" stroke="#2820B8" stroke-width="1.2"/><text x="364.65" y="468.09" font-size="7" fill="#000" font-weight="bold" text-anchor="middle" letter-spacing="0">H2</text><rect x="275.4" y="530" width="34" height="29.2" fill="none" stroke="#2820B8" stroke-width="1.2"/><text x="282" y="530.24" font-size="7.6" fill="#000" font-weight="bold" text-anchor="start" letter-spacing="0" textLength="26" lengthAdjust="spacingAndGlyphs">CD4007</text><polyline points="280.5,524.5 280.5,530.5" fill="none" stroke="#2820B8" stroke-width="1.2"/><path d="M274.55,524.3 H287.05 L280.8,518.1 Z" fill="none" stroke="#2820B8" stroke-width="1.2"/><text x="276.5" y="536" font-size="6" fill="#000" font-weight="normal" text-anchor="start" letter-spacing="0.2">+</text><text x="302.5" y="541" font-size="7" fill="#000" font-weight="normal" text-anchor="start" letter-spacing="0.2">1</text><text x="302.5" y="554" font-size="7" fill="#000" font-weight="normal" text-anchor="start" letter-spacing="0.2">0</text><text x="275.6" y="553.14" font-size="7.6" fill="#000" font-weight="bold" text-anchor="start" letter-spacing="0" textLength="12.4" lengthAdjust="spacingAndGlyphs">U24</text><text x="277" y="559.5" font-size="7" fill="#000" font-weight="normal" text-anchor="start" letter-spacing="0.2">-</text><text x="290" y="566.04" font-size="7.6" fill="#000" font-weight="bold" text-anchor="start" letter-spacing="0" textLength="27" lengthAdjust="spacingAndGlyphs">8,10,13&gt;</text><polyline points="280.5,559.5 280.5,565.5" fill="none" stroke="#2820B8" stroke-width="1.2"/><text x="282.6" y="574.5" font-size="7.5" fill="#000" font-weight="bold" text-anchor="start" letter-spacing="0" transform="rotate(-90 282.6 574.5)">V-</text><rect x="295" y="533" width="3" height="3" fill="#2820B8"/><polyline points="296.5,534.5 380.5,534.5 380.5,407.5" fill="none" stroke="#2820B8" stroke-width="1.2"/><rect x="379" y="406" width="3" height="3" fill="#2820B8"/><polyline points="296.5,555.5 385.5,555.5 385.5,396.5" fill="none" stroke="#2820B8" stroke-width="1.2"/><rect x="384" y="395" width="3" height="3" fill="#2820B8"/><polyline points="280.5,545.5 296.5,537.5" fill="none" stroke="#2820B8" stroke-width="1.2"/><path d="M290.2,540 V557" stroke="#2820B8" stroke-width="2"/><polyline points="290.5,557.5 290.5,598.5 623.5,598.5 623.5,492.5 644.5,492.5" fill="none" stroke="#2820B8" stroke-width="1.2"/><rect x="527" y="597" width="3" height="3" fill="#2820B8"/><polyline points="346.5,312.5 474.5,312.5" fill="none" stroke="#2820B8" stroke-width="1.2"/><path d="M474.3,307.6 H489.5 L494.5,312.25 L489.5,316.9 H474.3 Z" fill="none" stroke="#2820B8" stroke-width="1.2"/><text x="482.4" y="314.84" font-size="7" fill="#000" font-weight="bold" text-anchor="middle" letter-spacing="0">trg1</text><polyline points="346.5,322.5 464.5,322.5" fill="none" stroke="#2820B8" stroke-width="1.2"/><polyline points="346.5,333.5 464.5,333.5" fill="none" stroke="#2820B8" stroke-width="1.2"/><polyline points="346.5,343.5 464.5,343.5" fill="none" stroke="#2820B8" stroke-width="1.2"/><polyline points="346.5,354.5 464.5,354.5" fill="none" stroke="#2820B8" stroke-width="1.2"/><polyline points="346.5,365.5 406.5,365.5" fill="none" stroke="#2820B8" stroke-width="1.2"/><text x="406" y="368.04" font-size="7.6" fill="#000" font-weight="bold" text-anchor="start" letter-spacing="0" textLength="8.5" lengthAdjust="spacingAndGlyphs">Q6</text><polyline points="346.5,375.5 406.5,375.5" fill="none" stroke="#2820B8" stroke-width="1.2"/><text x="406" y="378.04" font-size="7.6" fill="#000" font-weight="bold" text-anchor="start" letter-spacing="0" textLength="8.5" lengthAdjust="spacingAndGlyphs">Q7</text><polyline points="346.5,386.5 406.5,386.5" fill="none" stroke="#2820B8" stroke-width="1.2"/><text x="406" y="389.04" font-size="7.6" fill="#000" font-weight="bold" text-anchor="start" letter-spacing="0" textLength="8.5" lengthAdjust="spacingAndGlyphs">Q8</text><polyline points="346.5,396.5 406.5,396.5" fill="none" stroke="#2820B8" stroke-width="1.2"/><text x="406" y="399.24" font-size="7.6" fill="#000" font-weight="bold" text-anchor="start" letter-spacing="0" textLength="8.5" lengthAdjust="spacingAndGlyphs">Q9</text><polyline points="346.5,407.5 406.5,407.5" fill="none" stroke="#2820B8" stroke-width="1.2"/><text x="406" y="410.24" font-size="7.6" fill="#000" font-weight="bold" text-anchor="start" letter-spacing="0" textLength="12" lengthAdjust="spacingAndGlyphs">Q10</text><polyline points="346.5,418.5 358.5,418.5" fill="none" stroke="#2820B8" stroke-width="1.2"/><polyline points="464.5,312.5 464.5,378.5" fill="none" stroke="#2820B8" stroke-width="1.2"/><polyline points="464.5,378.5 469.5,380.5 460.5,383.5 469.5,387.5 460.5,391.5 469.5,394.5 460.5,398.5 464.5,400.5" fill="none" stroke="#2820B8" stroke-width="1.2"/><polyline points="464.5,400.5 464.5,400.5" fill="none" stroke="#2820B8" stroke-width="1.2"/><text x="466.3" y="410" font-size="7.5" fill="#000" font-weight="bold" text-anchor="start" letter-spacing="0" transform="rotate(-90 466.3 410)">V-</text><text x="471" y="386.24" font-size="7.6" fill="#000" font-weight="bold" text-anchor="start" letter-spacing="0" textLength="7.5" lengthAdjust="spacingAndGlyphs">R2</text><text x="470" y="398.74" font-size="7.6" fill="#000" font-weight="bold" text-anchor="start" letter-spacing="0" textLength="10.5" lengthAdjust="spacingAndGlyphs">47k</text><rect x="463" y="311" width="3" height="3" fill="#2820B8"/><rect x="463" y="321" width="3" height="3" fill="#2820B8"/><rect x="463" y="332" width="3" height="3" fill="#2820B8"/><rect x="463" y="342" width="3" height="3" fill="#2820B8"/><rect x="463" y="353" width="3" height="3" fill="#2820B8"/><text x="380" y="310.34" font-size="7.6" fill="#000" font-weight="bold" text-anchor="start" letter-spacing="0" textLength="8.6" lengthAdjust="spacingAndGlyphs">Q1</text><text x="380" y="320.44" font-size="7.6" fill="#000" font-weight="bold" text-anchor="start" letter-spacing="0" textLength="8.6" lengthAdjust="spacingAndGlyphs">Q2</text><text x="380" y="331.24" font-size="7.6" fill="#000" font-weight="bold" text-anchor="start" letter-spacing="0" textLength="8.6" lengthAdjust="spacingAndGlyphs">Q3</text><text x="380" y="341.34" font-size="7.6" fill="#000" font-weight="bold" text-anchor="start" letter-spacing="0" textLength="8.6" lengthAdjust="spacingAndGlyphs">Q4</text><text x="380" y="352.34" font-size="7.6" fill="#000" font-weight="bold" text-anchor="start" letter-spacing="0" textLength="8.6" lengthAdjust="spacingAndGlyphs">Q5</text><polyline points="358.5,312.5 358.5,243.5 523.5,243.5" fill="none" stroke="#2820B8" stroke-width="1.2"/><rect x="357" y="311" width="3" height="3" fill="#2820B8"/><rect x="522" y="242" width="3" height="3" fill="#2820B8"/><polyline points="364.5,322.5 364.5,253.5 523.5,253.5" fill="none" stroke="#2820B8" stroke-width="1.2"/><rect x="363" y="321" width="3" height="3" fill="#2820B8"/><rect x="522" y="252" width="3" height="3" fill="#2820B8"/><polyline points="369.5,333.5 369.5,264.5 523.5,264.5" fill="none" stroke="#2820B8" stroke-width="1.2"/><rect x="368" y="332" width="3" height="3" fill="#2820B8"/><rect x="522" y="263" width="3" height="3" fill="#2820B8"/><polyline points="374.5,343.5 374.5,275.5 523.5,275.5" fill="none" stroke="#2820B8" stroke-width="1.2"/><rect x="373" y="342" width="3" height="3" fill="#2820B8"/><rect x="522" y="274" width="3" height="3" fill="#2820B8"/><polyline points="523.5,243.5 523.5,282.5" fill="none" stroke="#2820B8" stroke-width="1.2"/><polyline points="523.5,282.5 528.5,284.5 519.5,288.5 528.5,292.5 519.5,295.5 528.5,299.5 519.5,303.5 523.5,305.5" fill="none" stroke="#2820B8" stroke-width="1.2"/><polyline points="523.5,305.5 523.5,310.5" fill="none" stroke="#2820B8" stroke-width="1.2"/><text x="525.55" y="319.5" font-size="7.5" fill="#000" font-weight="bold" text-anchor="start" letter-spacing="0" transform="rotate(-90 525.55 319.5)">V-</text><text x="530" y="291.24" font-size="7.6" fill="#000" font-weight="bold" text-anchor="start" letter-spacing="0" textLength="10.4" lengthAdjust="spacingAndGlyphs">R27</text><text x="529" y="303.34" font-size="7.6" fill="#000" font-weight="bold" text-anchor="start" letter-spacing="0" textLength="11" lengthAdjust="spacingAndGlyphs">47k</text><path d="M527,238.3 H542.7 L547.7,243.2 L542.7,248.1 H527 Z" fill="none" stroke="#2820B8" stroke-width="1.2"/><text x="535.35" y="245.79" font-size="7" fill="#000" font-weight="bold" text-anchor="middle" letter-spacing="0">trg2</text><rect x="433" y="238.3" width="10.5" height="10" fill="#C0C0C0"/><polyline points="431.5,243.5 445.5,243.5" fill="none" stroke="#2820B8" stroke-width="1.2"/><path d="M434,238.3 L442.5,243.3 L434,248.3 Z M442.5,238.3 V248.3" fill="none" stroke="#2820B8" stroke-width="1.2"/><rect x="448.8" y="248.3" width="10.199999999999989" height="10" fill="#C0C0C0"/><polyline points="446.5,253.5 461.5,253.5" fill="none" stroke="#2820B8" stroke-width="1.2"/><path d="M449.8,248.3 L458,253.3 L449.8,258.3 Z M458,248.3 V258.3" fill="none" stroke="#2820B8" stroke-width="1.2"/><rect x="465.5" y="259.4" width="10.300000000000011" height="10" fill="#C0C0C0"/><polyline points="463.5,264.5 477.5,264.5" fill="none" stroke="#2820B8" stroke-width="1.2"/><path d="M466.5,259.4 L474.8,264.4 L466.5,269.4 Z M474.8,259.4 V269.4" fill="none" stroke="#2820B8" stroke-width="1.2"/><rect x="481" y="270.2" width="10.399999999999977" height="10" fill="#C0C0C0"/><polyline points="479.5,275.5 493.5,275.5" fill="none" stroke="#2820B8" stroke-width="1.2"/><path d="M482,270.2 L490.4,275.2 L482,280.2 Z M490.4,270.2 V280.2" fill="none" stroke="#2820B8" stroke-width="1.2"/><text x="432" y="235.24" font-size="7.6" fill="#000" font-weight="bold" text-anchor="start" letter-spacing="0" textLength="10.5" lengthAdjust="spacingAndGlyphs">D16</text><text x="447.5" y="246.04" font-size="7.6" fill="#000" font-weight="bold" text-anchor="start" letter-spacing="0" textLength="10.5" lengthAdjust="spacingAndGlyphs">D17</text><text x="464" y="256.94" font-size="7.6" fill="#000" font-weight="bold" text-anchor="start" letter-spacing="0" textLength="11" lengthAdjust="spacingAndGlyphs">D18</text><text x="479.5" y="267.24" font-size="7.6" fill="#000" font-weight="bold" text-anchor="start" letter-spacing="0" textLength="10.9" lengthAdjust="spacingAndGlyphs">D19</text><text x="433.5" y="256.24" font-size="7.6" fill="#000" font-weight="bold" text-anchor="start" letter-spacing="0" textLength="18.5" lengthAdjust="spacingAndGlyphs">1N914</text><text x="449.5" y="267.14" font-size="7.6" fill="#000" font-weight="bold" text-anchor="start" letter-spacing="0" textLength="18.5" lengthAdjust="spacingAndGlyphs">1N914</text><text x="460" y="276.24" font-size="7.6" fill="#000" font-weight="bold" text-anchor="start" letter-spacing="0" textLength="19" lengthAdjust="spacingAndGlyphs">1N914</text><text x="481" y="288.34" font-size="7.6" fill="#000" font-weight="bold" text-anchor="start" letter-spacing="0" textLength="19" lengthAdjust="spacingAndGlyphs">1N914</text><path d="M402.3,307.4 L410.7,312.4 L402.3,317.4 Z M410.7,307.4 V317.4" fill="none" stroke="#2820B8" stroke-width="1.2"/><path d="M413.3,317.5 L421.8,322.5 L413.3,327.5 Z M421.8,317.5 V327.5" fill="none" stroke="#2820B8" stroke-width="1.2"/><path d="M423,328.3 L431.6,333.3 L423,338.3 Z M431.6,328.3 V338.3" fill="none" stroke="#2820B8" stroke-width="1.2"/><path d="M434.2,338.4 L442.6,343.4 L434.2,348.4 Z M442.6,338.4 V348.4" fill="none" stroke="#2820B8" stroke-width="1.2"/><path d="M445.2,349.4 L452.4,354.4 L445.2,359.4 Z M452.4,349.4 V359.4" fill="none" stroke="#2820B8" stroke-width="1.2"/><text x="401.5" y="304.44" font-size="7.6" fill="#000" font-weight="bold" text-anchor="start" letter-spacing="0" textLength="8" lengthAdjust="spacingAndGlyphs">D3</text><text x="411" y="315.44" font-size="7.6" fill="#000" font-weight="bold" text-anchor="start" letter-spacing="0" textLength="8" lengthAdjust="spacingAndGlyphs">D4</text><text x="421.5" y="325.54" font-size="7.6" fill="#000" font-weight="bold" text-anchor="start" letter-spacing="0" textLength="8.5" lengthAdjust="spacingAndGlyphs">D5</text><text x="432" y="336.04" font-size="7.6" fill="#000" font-weight="bold" text-anchor="start" letter-spacing="0" textLength="9" lengthAdjust="spacingAndGlyphs">D1</text><text x="442" y="346.04" font-size="7.6" fill="#000" font-weight="bold" text-anchor="start" letter-spacing="0" textLength="11" lengthAdjust="spacingAndGlyphs">D20</text><text x="401" y="325.24" font-size="7.6" fill="#000" font-weight="bold" text-anchor="start" letter-spacing="0" textLength="17" lengthAdjust="spacingAndGlyphs">1N914</text><text x="411" y="336.04" font-size="7.6" fill="#000" font-weight="bold" text-anchor="start" letter-spacing="0" textLength="17" lengthAdjust="spacingAndGlyphs">1N914</text><text x="418" y="345.94" font-size="7.6" fill="#000" font-weight="bold" text-anchor="start" letter-spacing="0" textLength="19" lengthAdjust="spacingAndGlyphs">1N914</text><text x="428" y="356.94" font-size="7.6" fill="#000" font-weight="bold" text-anchor="start" letter-spacing="0" textLength="17" lengthAdjust="spacingAndGlyphs">1N914</text><text x="437" y="368.14" font-size="7.6" fill="#000" font-weight="bold" text-anchor="start" letter-spacing="0" textLength="19" lengthAdjust="spacingAndGlyphs">1N914</text><text x="560.2" y="259.64" font-size="7.6" fill="#1A1AD0" font-weight="bold" text-anchor="start" letter-spacing="0" textLength="103.55" lengthAdjust="spacingAndGlyphs">CH1 -1700mA max coil current</text><text x="560.2" y="268.14" font-size="7.6" fill="#1A1AD0" font-weight="bold" text-anchor="start" letter-spacing="0" textLength="99.8" lengthAdjust="spacingAndGlyphs">CH2 -450mA max coil current</text><rect x="422.5" y="465.4" width="52.1" height="116.7" fill="none" stroke="#2820B8" stroke-width="1.2"/><rect x="422.5" y="465.4" width="32.1" height="36.9" fill="none" stroke="#2820B8" stroke-width="1.2"/><path d="M436.5,471.7 H438.09 A8.91,9.9 0 0 1 438.09,491.5 H436.5 Z" fill="none" stroke="#2820B8" stroke-width="1.2"/><path d="M447,481.6 L451,479.5 L451,484" fill="none" stroke="#2820B8" stroke-width="1"/><polyline points="451.5,481.5 454.5,481.5" fill="none" stroke="#2820B8" stroke-width="1.2"/><text x="424" y="485.24" font-size="7.6" fill="#000" font-weight="bold" text-anchor="start" letter-spacing="0" textLength="10.5" lengthAdjust="spacingAndGlyphs">en*</text><text x="404" y="489.44" font-size="7.6" fill="#000" font-weight="bold" text-anchor="start" letter-spacing="0" textLength="6.4" lengthAdjust="spacingAndGlyphs">V-</text><text x="424" y="497.14" font-size="7.6" fill="#000" font-weight="bold" text-anchor="start" letter-spacing="0" textLength="9.5" lengthAdjust="spacingAndGlyphs">rst</text><polyline points="410.5,486.5 436.5,486.5" fill="none" stroke="#2820B8" stroke-width="1.2"/><polyline points="543.5,491.5 554.5,491.5 554.5,592.5 406.5,592.5 406.5,497.5 454.5,497.5" fill="none" stroke="#2820B8" stroke-width="1.2"/><path d="M450.5,494.5 L454.6,497 L450.5,499.5" fill="none" stroke="#2820B8" stroke-width="1"/><rect x="553" y="554" width="3" height="3" fill="#2820B8"/><polyline points="554.5,555.5 570.5,555.5" fill="none" stroke="#2820B8" stroke-width="1.2"/><polyline points="474.5,471.5 491.5,471.5" fill="none" stroke="#2820B8" stroke-width="1.2"/><text x="473.5" y="474" font-size="7" fill="#000" font-weight="normal" text-anchor="end" letter-spacing="0.1">Q1</text><polyline points="474.5,481.5 520.5,481.5" fill="none" stroke="#2820B8" stroke-width="1.2"/><text x="473.5" y="484.4" font-size="7" fill="#000" font-weight="normal" text-anchor="end" letter-spacing="0.1">Q2</text><polyline points="474.5,492.5 487.5,492.5" fill="none" stroke="#2820B8" stroke-width="1.2"/><text x="473.5" y="495" font-size="7" fill="#000" font-weight="normal" text-anchor="end" letter-spacing="0.1">Q3</text><polyline points="474.5,502.5 487.5,502.5" fill="none" stroke="#2820B8" stroke-width="1.2"/><text x="473.5" y="504.8" font-size="7" fill="#000" font-weight="normal" text-anchor="end" letter-spacing="0.1">Q4</text><polyline points="474.5,513.5 491.5,513.5" fill="none" stroke="#2820B8" stroke-width="1.2"/><text x="473.5" y="515.8" font-size="7" fill="#000" font-weight="normal" text-anchor="end" letter-spacing="0.1">Q5</text><polyline points="474.5,524.5 491.5,524.5" fill="none" stroke="#2820B8" stroke-width="1.2"/><text x="473.5" y="526.7" font-size="7" fill="#000" font-weight="normal" text-anchor="end" letter-spacing="0.1">Q6</text><polyline points="474.5,534.5 491.5,534.5" fill="none" stroke="#2820B8" stroke-width="1.2"/><text x="473.5" y="536.7" font-size="7" fill="#000" font-weight="normal" text-anchor="end" letter-spacing="0.1">Q7</text><polyline points="474.5,545.5 491.5,545.5" fill="none" stroke="#2820B8" stroke-width="1.2"/><text x="473.5" y="547.5" font-size="7" fill="#000" font-weight="normal" text-anchor="end" letter-spacing="0.1">Q8</text><polyline points="474.5,555.5 491.5,555.5" fill="none" stroke="#2820B8" stroke-width="1.2"/><text x="473.5" y="557.9" font-size="7" fill="#000" font-weight="normal" text-anchor="end" letter-spacing="0.1">Q9</text><polyline points="474.5,566.5 491.5,566.5" fill="none" stroke="#2820B8" stroke-width="1.2"/><text x="473.5" y="568.75" font-size="7" fill="#000" font-weight="normal" text-anchor="end" letter-spacing="0.1">Q10</text><polyline points="474.5,577.5 491.5,577.5" fill="none" stroke="#2820B8" stroke-width="1.2"/><text x="473.5" y="579.8" font-size="7" fill="#000" font-weight="normal" text-anchor="end" letter-spacing="0.1">Q5-10</text><polyline points="455.5,572.5 473.5,572.5" fill="none" stroke="#2820B8" stroke-width="0.8"/><polyline points="491.5,513.5 491.5,502.5 521.5,502.5" fill="none" stroke="#2820B8" stroke-width="1.2"/><text x="424" y="531.49" font-size="7.6" fill="#000" font-weight="bold" text-anchor="start" letter-spacing="0" textLength="31" lengthAdjust="spacingAndGlyphs">CD4017B</text><text x="437.5" y="538.99" font-size="7.6" fill="#000" font-weight="bold" text-anchor="start" letter-spacing="0" textLength="10" lengthAdjust="spacingAndGlyphs">U25</text><rect x="508.3" y="477.3" width="35.45" height="29.2" fill="none" stroke="#2820B8" stroke-width="1.2"/><polyline points="539.5,471.5 539.5,477.5" fill="none" stroke="#2820B8" stroke-width="1.2"/><path d="M533.35,471.6 H545.85 L539.6,465.4 Z" fill="none" stroke="#2820B8" stroke-width="1.2"/><text x="509" y="476.74" font-size="7.6" fill="#000" font-weight="bold" text-anchor="start" letter-spacing="0" textLength="27" lengthAdjust="spacingAndGlyphs">CD4007</text><text x="536.5" y="483.5" font-size="6" fill="#000" font-weight="normal" text-anchor="start" letter-spacing="0.2">+</text><text x="511.5" y="488" font-size="7" fill="#000" font-weight="normal" text-anchor="start" letter-spacing="0.2">1</text><text x="511.5" y="500.5" font-size="7" fill="#000" font-weight="normal" text-anchor="start" letter-spacing="0.2">0</text><text x="528" y="500.24" font-size="7.6" fill="#000" font-weight="bold" text-anchor="start" letter-spacing="0" textLength="14" lengthAdjust="spacingAndGlyphs">U26</text><text x="537" y="506" font-size="7" fill="#000" font-weight="normal" text-anchor="start" letter-spacing="0.2">-</text><text x="499" y="513.34" font-size="7.6" fill="#000" font-weight="bold" text-anchor="start" letter-spacing="0" textLength="27" lengthAdjust="spacingAndGlyphs">8,10,13&gt;</text><polyline points="538.5,506.5 538.5,512.5" fill="none" stroke="#2820B8" stroke-width="1.2"/><text x="540.3" y="521.5" font-size="7.5" fill="#000" font-weight="bold" text-anchor="start" letter-spacing="0" transform="rotate(-90 540.3 521.5)">V-</text><rect x="519" y="480" width="3" height="3" fill="#2820B8"/><polyline points="520.5,481.5 535.5,491.5" fill="none" stroke="#2820B8" stroke-width="1.2"/><polyline points="528.5,504.5 528.5,598.5" fill="none" stroke="#2820B8" stroke-width="1.2"/><rect x="570" y="529.4" width="32.7" height="31.85" fill="none" stroke="#2820B8" stroke-width="1.2"/><text x="571.5" y="536.5" font-size="6.5" fill="#000" font-weight="normal" text-anchor="start" letter-spacing="0.2">D</text><text x="598" y="536.5" font-size="6.5" fill="#000" font-weight="normal" text-anchor="start" letter-spacing="0.2">Q</text><text x="578.5" y="540.74" font-size="7.6" fill="#000" font-weight="bold" text-anchor="start" letter-spacing="0" textLength="12.5" lengthAdjust="spacingAndGlyphs">U27</text><text x="571" y="547.54" font-size="7.6" fill="#000" font-weight="bold" text-anchor="start" letter-spacing="0" textLength="31" lengthAdjust="spacingAndGlyphs">CD4013B</text><text x="571" y="557.5" font-size="6.5" fill="#000" font-weight="normal" text-anchor="start" letter-spacing="0.2">&gt;</text><text x="580" y="558" font-size="6.5" fill="#000" font-weight="normal" text-anchor="start" letter-spacing="0.2">c</text><text x="590" y="558" font-size="6.5" fill="#000" font-weight="normal" text-anchor="start" letter-spacing="0.2">r</text><text x="598" y="557.5" font-size="6.5" fill="#000" font-weight="normal" text-anchor="start" letter-spacing="0.2">Q</text><polyline points="602.5,534.5 623.5,534.5" fill="none" stroke="#2820B8" stroke-width="1.2"/><rect x="622" y="533" width="3" height="3" fill="#2820B8"/><polyline points="602.5,555.5 613.5,555.5 613.5,508.5 644.5,508.5" fill="none" stroke="#2820B8" stroke-width="1.2"/><polyline points="612.5,518.5 564.5,518.5 564.5,534.5 570.5,534.5" fill="none" stroke="#2820B8" stroke-width="1.2"/><rect x="611" y="517" width="3" height="3" fill="#2820B8"/><polyline points="580.5,561.5 580.5,576.5" fill="none" stroke="#2820B8" stroke-width="1.2"/><text x="582.2" y="585.5" font-size="7.5" fill="#000" font-weight="bold" text-anchor="start" letter-spacing="0" transform="rotate(-90 582.2 585.5)">V-</text><polyline points="591.5,561.5 591.5,576.5" fill="none" stroke="#2820B8" stroke-width="1.2"/><text x="593.7" y="585.5" font-size="7.5" fill="#000" font-weight="bold" text-anchor="start" letter-spacing="0" transform="rotate(-90 593.7 585.5)">V-</text><path d="M644,487.7 H668.5 L673.5,492.1 L668.5,496.5 H644 Z" fill="none" stroke="#2820B8" stroke-width="1.2"/><text x="656.75" y="494.69" font-size="7" fill="#000" font-weight="bold" text-anchor="middle" letter-spacing="0">CH1en</text><path d="M644,503.3 H668.5 L673.5,508 L668.5,512.7 H644 Z" fill="none" stroke="#2820B8" stroke-width="1.2"/><text x="656.75" y="510.59" font-size="7" fill="#000" font-weight="bold" text-anchor="middle" letter-spacing="0">CH2en</text><polyline points="591.5,343.5 607.5,343.5 607.5,322.5 618.5,322.5 618.5,343.5 634.5,343.5" fill="none" stroke="#2820B8" stroke-width="1.2"/><text x="622.6" y="325.44" font-size="7.6" fill="#1A1AD0" font-weight="bold" text-anchor="start" letter-spacing="0" textLength="8.4" lengthAdjust="spacingAndGlyphs">0V</text><text x="620.8" y="341.74" font-size="7.6" fill="#1A1AD0" font-weight="bold" text-anchor="start" letter-spacing="0" textLength="10.2" lengthAdjust="spacingAndGlyphs">-5V</text><path d="M594.6,355 H613.5 L618.5,359.38 L613.5,363.75 H594.6 Z" fill="none" stroke="#2820B8" stroke-width="1.2"/><text x="604.55" y="361.96" font-size="7" fill="#000" font-weight="bold" text-anchor="middle" letter-spacing="0">TRG1</text><polyline points="618.5,359.5 634.5,359.5 634.5,370.5 655.5,370.5" fill="none" stroke="#2820B8" stroke-width="1.2"/><path d="M603,370.4 H613.5 L618.5,375.2 L613.5,380 H603 Z" fill="none" stroke="#2820B8" stroke-width="1.2"/><text x="608.75" y="377.79" font-size="7" fill="#000" font-weight="bold" text-anchor="middle" letter-spacing="0">H1</text><polyline points="618.5,375.5 655.5,375.5" fill="none" stroke="#2820B8" stroke-width="1.2"/><path d="M594,386.7 H618 L623,391.05 L618,395.4 H594 Z" fill="none" stroke="#2820B8" stroke-width="1.2"/><text x="606.5" y="393.64" font-size="7" fill="#000" font-weight="bold" text-anchor="middle" letter-spacing="0">CH1en</text><polyline points="623.5,391.5 634.5,391.5 634.5,380.5 655.5,380.5" fill="none" stroke="#2820B8" stroke-width="1.2"/><path d="M655.4,365 H659.77 A9.22,10.25 0 0 1 659.77,385.5 H655.4 Z" fill="none" stroke="#2820B8" stroke-width="1.2"/><circle cx="671" cy="375.25" r="2" fill="none" stroke="#2820B8" stroke-width="1"/><text x="656.5" y="364.24" font-size="7.6" fill="#000" font-weight="bold" text-anchor="start" letter-spacing="0" textLength="8.3" lengthAdjust="spacingAndGlyphs">U4</text><text x="651" y="392.24" font-size="7.6" fill="#000" font-weight="bold" text-anchor="start" letter-spacing="0" textLength="30.5" lengthAdjust="spacingAndGlyphs">CD4023B</text><polyline points="673.5,375.5 689.5,375.5" fill="none" stroke="#2820B8" stroke-width="1.2"/><polyline points="689.5,375.5 691.5,370.5 695.5,379.5 699.5,370.5 703.5,379.5 707.5,370.5 711.5,379.5 713.5,375.5" fill="none" stroke="#2820B8" stroke-width="1.2"/><polyline points="713.5,375.5 719.5,375.5" fill="none" stroke="#2820B8" stroke-width="1.2"/><rect x="718" y="374" width="3" height="3" fill="#2820B8"/><text x="693" y="368.14" font-size="7.6" fill="#000" font-weight="bold" text-anchor="start" letter-spacing="0" textLength="12.4" lengthAdjust="spacingAndGlyphs">R12</text><text x="694" y="387.34" font-size="7.6" fill="#000" font-weight="bold" text-anchor="start" letter-spacing="0" textLength="11.4" lengthAdjust="spacingAndGlyphs">470</text><polyline points="719.5,306.5 719.5,319.5" fill="none" stroke="#2820B8" stroke-width="1.2"/><path d="M713.4,319 H725.4 L719.4,327 Z M713.4,327 H725.4" fill="none" stroke="#2820B8" stroke-width="1.2"/><polyline points="719.5,327.5 719.5,395.5" fill="none" stroke="#2820B8" stroke-width="1.2"/><polyline points="719.5,395.5 723.5,396.5 714.5,399.5 723.5,403.5 714.5,406.5 723.5,409.5 714.5,413.5 719.5,414.5" fill="none" stroke="#2820B8" stroke-width="1.2"/><polyline points="719.5,414.5 719.5,439.5" fill="none" stroke="#2820B8" stroke-width="1.2"/><rect x="718" y="342" width="3" height="3" fill="#2820B8"/><text x="722" y="315.04" font-size="7.6" fill="#000" font-weight="bold" text-anchor="start" letter-spacing="0" textLength="11.5" lengthAdjust="spacingAndGlyphs">D13</text><text x="725" y="327.34" font-size="7.6" fill="#000" font-weight="bold" text-anchor="start" letter-spacing="0" textLength="23" lengthAdjust="spacingAndGlyphs">1N4148</text><text x="726" y="402.54" font-size="7.6" fill="#000" font-weight="bold" text-anchor="start" letter-spacing="0" textLength="11.7" lengthAdjust="spacingAndGlyphs">R11</text><text x="725" y="414.44" font-size="7.6" fill="#000" font-weight="bold" text-anchor="start" letter-spacing="0" textLength="11.7" lengthAdjust="spacingAndGlyphs">22k</text><polyline points="719.5,306.5 751.5,306.5 751.5,290.5" fill="none" stroke="#2820B8" stroke-width="1.2"/><path d="M745,290.8 H757.5 L751.25,284.6 Z" fill="none" stroke="#2820B8" stroke-width="1.2"/><rect x="750" y="305" width="3" height="3" fill="#2820B8"/><polyline points="751.5,306.5 751.5,328.5" fill="none" stroke="#2820B8" stroke-width="1.2"/><path d="M735.6,333.5 V354.4" stroke="#2820B8" stroke-width="2"/><polyline points="735.5,349.5 756.5,359.5" fill="none" stroke="#2820B8" stroke-width="1.2"/><polyline points="735.5,338.5 751.5,328.5" fill="none" stroke="#2820B8" stroke-width="1.2"/><path d="M738.11,337.08 L744.78,336.31 L741.49,331.29 Z" fill="none" stroke="#2820B8" stroke-width="1"/><polyline points="719.5,343.5 735.5,343.5" fill="none" stroke="#2820B8" stroke-width="1.2"/><text x="737" y="344.24" font-size="7.6" fill="#000" font-weight="bold" text-anchor="start" letter-spacing="0" textLength="23" lengthAdjust="spacingAndGlyphs">2N3906</text><text x="741" y="352.74" font-size="7.6" fill="#000" font-weight="bold" text-anchor="start" letter-spacing="0" textLength="9" lengthAdjust="spacingAndGlyphs">Q8</text><rect x="755" y="358" width="3" height="3" fill="#2820B8"/><polyline points="756.5,359.5 763.5,359.5" fill="none" stroke="#2820B8" stroke-width="1.2"/><polyline points="763.5,359.5 765.5,354.5 769.5,363.5 772.5,354.5 776.5,363.5 780.5,354.5 783.5,363.5 785.5,359.5" fill="none" stroke="#2820B8" stroke-width="1.2"/><polyline points="785.5,359.5 793.5,359.5" fill="none" stroke="#2820B8" stroke-width="1.2"/><rect x="792" y="358" width="3" height="3" fill="#2820B8"/><text x="770" y="351.94" font-size="7.6" fill="#000" font-weight="bold" text-anchor="start" letter-spacing="0" textLength="7.3" lengthAdjust="spacingAndGlyphs">R9</text><text x="768" y="372.34" font-size="7.6" fill="#000" font-weight="bold" text-anchor="start" letter-spacing="0" textLength="11.4" lengthAdjust="spacingAndGlyphs">330</text><polyline points="756.5,359.5 756.5,400.5" fill="none" stroke="#2820B8" stroke-width="1.2"/><polyline points="756.5,400.5 761.5,401.5 752.5,405.5 761.5,408.5 752.5,411.5 761.5,415.5 752.5,418.5 756.5,420.5" fill="none" stroke="#2820B8" stroke-width="1.2"/><polyline points="756.5,420.5 756.5,439.5" fill="none" stroke="#2820B8" stroke-width="1.2"/><rect x="755" y="438" width="3" height="3" fill="#2820B8"/><text x="762.7" y="407.14" font-size="7.6" fill="#000" font-weight="bold" text-anchor="start" letter-spacing="0" textLength="11.3" lengthAdjust="spacingAndGlyphs">R10</text><text x="762.7" y="419.64" font-size="7.6" fill="#000" font-weight="bold" text-anchor="start" letter-spacing="0" textLength="10.3" lengthAdjust="spacingAndGlyphs">10k</text><polyline points="793.5,316.5 793.5,412.5" fill="none" stroke="#2820B8" stroke-width="1.2"/><polyline points="793.5,316.5 804.5,316.5" fill="none" stroke="#2820B8" stroke-width="1.2"/><polyline points="793.5,412.5 804.5,412.5" fill="none" stroke="#2820B8" stroke-width="1.2"/><path d="M804.4,306.5 V327.3" stroke="#2820B8" stroke-width="2"/><polyline points="804.5,311.5 819.5,302.5" fill="none" stroke="#2820B8" stroke-width="1.2"/><polyline points="804.5,322.5 819.5,334.5" fill="none" stroke="#2820B8" stroke-width="1.2"/><path d="M818.62,333.57 L812.07,332.14 L815.84,327.47 Z" fill="none" stroke="#2820B8" stroke-width="1"/><text x="807.5" y="315.44" font-size="7.6" fill="#000" font-weight="bold" text-anchor="start" letter-spacing="0" textLength="8.5" lengthAdjust="spacingAndGlyphs">Q1</text><text x="805" y="323.34" font-size="7.6" fill="#000" font-weight="bold" text-anchor="start" letter-spacing="0" textLength="24.4" lengthAdjust="spacingAndGlyphs">2N4401</text><polyline points="793.5,243.5 793.5,232.5 1010.5,232.5 1010.5,296.5" fill="none" stroke="#2820B8" stroke-width="1.2"/><path d="M787.25,243 H799.75 L793.5,249.25 Z" fill="none" stroke="#2820B8" stroke-width="1.2"/><polyline points="819.5,232.5 819.5,302.5" fill="none" stroke="#2820B8" stroke-width="1.2"/><rect x="818" y="231" width="3" height="3" fill="#2820B8"/><rect x="861" y="231" width="3" height="3" fill="#2820B8"/><rect x="887" y="231" width="3" height="3" fill="#2820B8"/><rect x="940" y="231" width="3" height="3" fill="#2820B8"/><rect x="972" y="231" width="3" height="3" fill="#2820B8"/><polyline points="862.5,232.5 862.5,240.5" fill="none" stroke="#2820B8" stroke-width="1.2"/><polyline points="862.5,240.5 867.5,241.5 858.5,245.5 867.5,249.5 858.5,252.5 867.5,256.5 858.5,260.5 862.5,262.5" fill="none" stroke="#2820B8" stroke-width="1.2"/><polyline points="862.5,262.5 862.5,269.5" fill="none" stroke="#2820B8" stroke-width="1.2"/><polyline points="973.5,232.5 973.5,240.5" fill="none" stroke="#2820B8" stroke-width="1.2"/><polyline points="973.5,240.5 978.5,241.5 969.5,245.5 978.5,249.5 969.5,252.5 978.5,256.5 969.5,260.5 973.5,262.5" fill="none" stroke="#2820B8" stroke-width="1.2"/><polyline points="973.5,262.5 973.5,269.5" fill="none" stroke="#2820B8" stroke-width="1.2"/><polyline points="888.5,232.5 888.5,236.5" fill="none" stroke="#2820B8" stroke-width="1.2"/><path d="M888.5,236 C896.5,236 896.5,245.33 888.5,245.33 C896.5,245.33 896.5,254.67 888.5,254.67 C896.5,254.67 896.5,264 888.5,264" fill="none" stroke="#2820B8" stroke-width="1.2"/><polyline points="888.5,264.5 888.5,269.5" fill="none" stroke="#2820B8" stroke-width="1.2"/><polyline points="941.5,232.5 941.5,236.5" fill="none" stroke="#2820B8" stroke-width="1.2"/><path d="M941.7,236 C933.7,236 933.7,245.33 941.7,245.33 C933.7,245.33 933.7,254.67 941.7,254.67 C933.7,254.67 933.7,264 941.7,264" fill="none" stroke="#2820B8" stroke-width="1.2"/><polyline points="941.5,264.5 941.5,269.5" fill="none" stroke="#2820B8" stroke-width="1.2"/><polyline points="845.5,269.5 894.5,269.5" fill="none" stroke="#2820B8" stroke-width="1.2"/><polyline points="894.5,269.5 941.5,269.5" fill="none" stroke="#2820B8" stroke-width="1.2" stroke-dasharray="2.5,2"/><polyline points="941.5,269.5 985.5,269.5" fill="none" stroke="#2820B8" stroke-width="1.2"/><rect x="861" y="268" width="3" height="3" fill="#2820B8"/><rect x="887" y="268" width="3" height="3" fill="#2820B8"/><rect x="940" y="268" width="3" height="3" fill="#2820B8"/><rect x="972" y="268" width="3" height="3" fill="#2820B8"/><text x="829.4" y="272.14" font-size="7.6" fill="#000" font-weight="bold" text-anchor="start" letter-spacing="0" textLength="15.6" lengthAdjust="spacingAndGlyphs">vTX1</text><text x="985.4" y="272.34" font-size="7.6" fill="#000" font-weight="bold" text-anchor="start" letter-spacing="0" textLength="14.6" lengthAdjust="spacingAndGlyphs">vTX2</text><text x="866.7" y="249.44" font-size="7.6" fill="#000" font-weight="bold" text-anchor="start" letter-spacing="0" textLength="11.3" lengthAdjust="spacingAndGlyphs">560</text><text x="868.75" y="258.14" font-size="7.6" fill="#000" font-weight="bold" text-anchor="start" letter-spacing="0" textLength="11.25" lengthAdjust="spacingAndGlyphs">R23</text><text x="895.8" y="250.44" font-size="7.6" fill="#000" font-weight="bold" text-anchor="start" letter-spacing="0" textLength="13.6" lengthAdjust="spacingAndGlyphs">Ltx1</text><text x="895.8" y="257.74" font-size="7.6" fill="#000" font-weight="bold" text-anchor="start" letter-spacing="0" textLength="10.45" lengthAdjust="spacingAndGlyphs">{L}</text><text x="918.75" y="250.44" font-size="7.6" fill="#000" font-weight="bold" text-anchor="start" letter-spacing="0" textLength="12.5" lengthAdjust="spacingAndGlyphs">Ltx2</text><text x="919.8" y="259.74" font-size="7.6" fill="#000" font-weight="bold" text-anchor="start" letter-spacing="0" textLength="10.2" lengthAdjust="spacingAndGlyphs">{L}</text><text x="955.8" y="248.34" font-size="7.6" fill="#000" font-weight="bold" text-anchor="start" letter-spacing="0" textLength="11.5" lengthAdjust="spacingAndGlyphs">560</text><text x="955.8" y="258.14" font-size="7.6" fill="#000" font-weight="bold" text-anchor="start" letter-spacing="0" textLength="11.5" lengthAdjust="spacingAndGlyphs">R14</text><circle cx="886" cy="246" r="1" fill="#2820B8"/><circle cx="944" cy="242" r="1" fill="#2820B8"/><polyline points="894.5,269.5 894.5,288.5" fill="none" stroke="#2820B8" stroke-width="1.2"/><polyline points="894.5,288.5 898.5,289.5 889.5,293.5 898.5,296.5 889.5,299.5 898.5,303.5 889.5,306.5 894.5,308.5" fill="none" stroke="#2820B8" stroke-width="1.2"/><polyline points="894.5,308.5 894.5,318.5" fill="none" stroke="#2820B8" stroke-width="1.2"/><path d="M888.4,318.5 H900.4 L894.4,326.9 Z M888.4,326.9 H900.4" fill="none" stroke="#2820B8" stroke-width="1.2"/><polyline points="894.5,326.5 894.5,354.5" fill="none" stroke="#2820B8" stroke-width="1.2"/><text x="878" y="296.24" font-size="7.6" fill="#000" font-weight="bold" text-anchor="start" letter-spacing="0" textLength="8.5" lengthAdjust="spacingAndGlyphs">R7</text><text x="876" y="304.24" font-size="7.6" fill="#000" font-weight="bold" text-anchor="start" letter-spacing="0" textLength="10.5" lengthAdjust="spacingAndGlyphs">3.9</text><text x="875" y="326.49" font-size="7.6" fill="#000" font-weight="bold" text-anchor="start" letter-spacing="0" textLength="7.3" lengthAdjust="spacingAndGlyphs">D9</text><text x="863.5" y="335.74" font-size="7.6" fill="#000" font-weight="bold" text-anchor="start" letter-spacing="0" textLength="27.1" lengthAdjust="spacingAndGlyphs">MUR460</text><polyline points="936.5,269.5 936.5,288.5" fill="none" stroke="#2820B8" stroke-width="1.2"/><polyline points="936.5,288.5 941.5,289.5 932.5,293.5 941.5,296.5 932.5,299.5 941.5,303.5 932.5,306.5 936.5,308.5" fill="none" stroke="#2820B8" stroke-width="1.2"/><polyline points="936.5,308.5 936.5,318.5" fill="none" stroke="#2820B8" stroke-width="1.2"/><path d="M930.5,318.5 H942.5 L936.5,326.9 Z M930.5,326.9 H942.5" fill="none" stroke="#2820B8" stroke-width="1.2"/><polyline points="936.5,326.5 936.5,354.5" fill="none" stroke="#2820B8" stroke-width="1.2"/><text x="943.75" y="296.24" font-size="7.6" fill="#000" font-weight="bold" text-anchor="start" letter-spacing="0" textLength="11.45" lengthAdjust="spacingAndGlyphs">R15</text><text x="943.75" y="304.24" font-size="7.6" fill="#000" font-weight="bold" text-anchor="start" letter-spacing="0" textLength="6.25" lengthAdjust="spacingAndGlyphs">22</text><text x="943.75" y="326.49" font-size="7.6" fill="#000" font-weight="bold" text-anchor="start" letter-spacing="0" textLength="11.45" lengthAdjust="spacingAndGlyphs">D11</text><text x="938.5" y="335.74" font-size="7.6" fill="#000" font-weight="bold" text-anchor="start" letter-spacing="0" textLength="27.1" lengthAdjust="spacingAndGlyphs">MUR460</text><text x="841.9" y="299.44" font-size="7.6" fill="#1A1AD0" font-weight="bold" text-anchor="start" letter-spacing="0" textLength="21.85" lengthAdjust="spacingAndGlyphs">Long tb</text><text x="966.7" y="299.44" font-size="7.6" fill="#1A1AD0" font-weight="bold" text-anchor="start" letter-spacing="0" textLength="25" lengthAdjust="spacingAndGlyphs">Short tb</text><polyline points="819.5,334.5 819.5,397.5" fill="none" stroke="#2820B8" stroke-width="1.2"/><rect x="818" y="337" width="3" height="3" fill="#2820B8"/><rect x="818" y="374" width="3" height="3" fill="#2820B8"/><polyline points="819.5,338.5 837.5,338.5" fill="none" stroke="#2820B8" stroke-width="1.2"/><path d="M846,333.3 L837.7,338.3 L846,343.3 Z M837.7,333.3 V343.3" fill="none" stroke="#2820B8" stroke-width="1.2"/><polyline points="846.5,338.5 851.5,338.5 851.5,375.5" fill="none" stroke="#2820B8" stroke-width="1.2"/><text x="836.7" y="331.04" font-size="7.6" fill="#000" font-weight="bold" text-anchor="start" letter-spacing="0" textLength="7.3" lengthAdjust="spacingAndGlyphs">D8</text><text x="831" y="349.74" font-size="7.6" fill="#000" font-weight="bold" text-anchor="start" letter-spacing="0" textLength="19" lengthAdjust="spacingAndGlyphs">1N914</text><polyline points="819.5,375.5 827.5,375.5" fill="none" stroke="#2820B8" stroke-width="1.2"/><polyline points="827.5,375.5 828.5,370.5 832.5,379.5 836.5,370.5 840.5,379.5 844.5,370.5 848.5,379.5 850.5,375.5" fill="none" stroke="#2820B8" stroke-width="1.2"/><rect x="850" y="374" width="3" height="3" fill="#2820B8"/><polyline points="850.5,375.5 881.5,375.5" fill="none" stroke="#2820B8" stroke-width="1.2"/><text x="837.5" y="368.34" font-size="7.6" fill="#000" font-weight="bold" text-anchor="start" letter-spacing="0" textLength="7.5" lengthAdjust="spacingAndGlyphs">R8</text><text x="831.5" y="387.34" font-size="7.6" fill="#000" font-weight="bold" text-anchor="start" letter-spacing="0" textLength="11.5" lengthAdjust="spacingAndGlyphs">470</text><path d="M804.4,402.3 V423.1" stroke="#2820B8" stroke-width="2"/><polyline points="804.5,417.5 819.5,427.5" fill="none" stroke="#2820B8" stroke-width="1.2"/><polyline points="804.5,407.5 819.5,397.5" fill="none" stroke="#2820B8" stroke-width="1.2"/><path d="M806.86,405.78 L813.49,404.8 L810.05,399.88 Z" fill="none" stroke="#2820B8" stroke-width="1"/><polyline points="819.5,427.5 819.5,439.5" fill="none" stroke="#2820B8" stroke-width="1.2"/><text x="804.4" y="413.34" font-size="7.6" fill="#000" font-weight="bold" text-anchor="start" letter-spacing="0" textLength="25" lengthAdjust="spacingAndGlyphs">2N4403</text><text x="809.6" y="421.24" font-size="7.6" fill="#000" font-weight="bold" text-anchor="start" letter-spacing="0" textLength="8.4" lengthAdjust="spacingAndGlyphs">Q2</text><polyline points="719.5,439.5 1132.5,439.5" fill="none" stroke="#2820B8" stroke-width="1.2"/><rect x="818" y="438" width="3" height="3" fill="#2820B8"/><rect x="893" y="438" width="3" height="3" fill="#2820B8"/><rect x="935" y="438" width="3" height="3" fill="#2820B8"/><rect x="1009" y="438" width="3" height="3" fill="#2820B8"/><rect x="1083" y="438" width="3" height="3" fill="#2820B8"/><path d="M883.4,354 V375.4" stroke="#2820B8" stroke-width="1.6"/><path d="M880.9,353 V379.4" stroke="#2820B8" stroke-width="1.3"/><polyline points="883.5,354.5 894.5,354.5" fill="none" stroke="#2820B8" stroke-width="1.2"/><polyline points="883.5,375.5 894.5,375.5" fill="none" stroke="#2820B8" stroke-width="1.2"/><polyline points="883.5,364.5 894.5,364.5 894.5,375.5" fill="none" stroke="#2820B8" stroke-width="1.2"/><path d="M886.4,364.7 l4,-2.5 v5 Z" fill="#2820B8"/><polyline points="894.5,375.5 894.5,410.5" fill="none" stroke="#2820B8" stroke-width="1.2"/><rect x="893" y="390" width="3" height="3" fill="#2820B8"/><polyline points="894.5,410.5 898.5,411.5 889.5,415.5 898.5,418.5 889.5,422.5 898.5,425.5 889.5,429.5 894.5,431.5" fill="none" stroke="#2820B8" stroke-width="1.2"/><polyline points="894.5,431.5 894.5,439.5" fill="none" stroke="#2820B8" stroke-width="1.2"/><text x="885" y="361.94" font-size="7.6" fill="#000" font-weight="bold" text-anchor="start" letter-spacing="0" textLength="20" lengthAdjust="spacingAndGlyphs">IRF640</text><text x="894.8" y="369.24" font-size="7.6" fill="#000" font-weight="bold" text-anchor="start" letter-spacing="0" textLength="8.2" lengthAdjust="spacingAndGlyphs">U9</text><polyline points="894.5,391.5 867.5,391.5 867.5,405.5" fill="none" stroke="#2820B8" stroke-width="1.2"/><path d="M861.7,405.4 H873.7 M861.7,408.9 H873.7" stroke="#2820B8" stroke-width="1.4"/><polyline points="867.5,409.5 867.5,418.5" fill="none" stroke="#2820B8" stroke-width="1.2"/><path d="M861.45,418.5 H873.95 L867.7,424.75 Z" fill="none" stroke="#2820B8" stroke-width="1.2"/><text x="867.7" y="388.99" font-size="7.6" fill="#000" font-weight="bold" text-anchor="start" letter-spacing="0" textLength="19.8" lengthAdjust="spacingAndGlyphs">tot_c1</text><text x="850" y="402.14" font-size="7.6" fill="#000" font-weight="bold" text-anchor="start" letter-spacing="0" textLength="13.5" lengthAdjust="spacingAndGlyphs">2m2</text><text x="850" y="410.44" font-size="7.6" fill="#000" font-weight="bold" text-anchor="start" letter-spacing="0" textLength="8" lengthAdjust="spacingAndGlyphs">C1</text><text x="883" y="426.04" font-size="7.6" fill="#000" font-weight="bold" text-anchor="start" letter-spacing="0" textLength="3" lengthAdjust="spacingAndGlyphs">1</text><text x="877" y="432.74" font-size="7.6" fill="#000" font-weight="bold" text-anchor="start" letter-spacing="0" textLength="14.7" lengthAdjust="spacingAndGlyphs">Rtot1</text><path d="M947.5,354 V375.4" stroke="#2820B8" stroke-width="1.6"/><path d="M950,353 V379.4" stroke="#2820B8" stroke-width="1.3"/><polyline points="947.5,354.5 936.5,354.5" fill="none" stroke="#2820B8" stroke-width="1.2"/><polyline points="947.5,375.5 936.5,375.5" fill="none" stroke="#2820B8" stroke-width="1.2"/><polyline points="947.5,364.5 936.5,364.5 936.5,375.5" fill="none" stroke="#2820B8" stroke-width="1.2"/><path d="M944.5,364.7 l-4,-2.5 v5 Z" fill="#2820B8"/><polyline points="936.5,375.5 936.5,410.5" fill="none" stroke="#2820B8" stroke-width="1.2"/><rect x="935" y="390" width="3" height="3" fill="#2820B8"/><polyline points="936.5,410.5 941.5,411.5 932.5,415.5 941.5,418.5 932.5,422.5 941.5,425.5 932.5,429.5 936.5,431.5" fill="none" stroke="#2820B8" stroke-width="1.2"/><polyline points="936.5,431.5 936.5,439.5" fill="none" stroke="#2820B8" stroke-width="1.2"/><polyline points="949.5,374.5 978.5,374.5" fill="none" stroke="#2820B8" stroke-width="1.2"/><text x="923" y="361.94" font-size="7.6" fill="#000" font-weight="bold" text-anchor="start" letter-spacing="0" textLength="24" lengthAdjust="spacingAndGlyphs">IRF640</text><text x="923" y="369.24" font-size="7.6" fill="#000" font-weight="bold" text-anchor="start" letter-spacing="0" textLength="11.4" lengthAdjust="spacingAndGlyphs">U19</text><polyline points="936.5,391.5 962.5,391.5 962.5,405.5" fill="none" stroke="#2820B8" stroke-width="1.2"/><path d="M956.5,405.4 H968.5 M956.5,408.9 H968.5" stroke="#2820B8" stroke-width="1.4"/><polyline points="962.5,409.5 962.5,418.5" fill="none" stroke="#2820B8" stroke-width="1.2"/><path d="M956.25,418.5 H968.75 L962.5,424.75 Z" fill="none" stroke="#2820B8" stroke-width="1.2"/><text x="941.7" y="388.99" font-size="7.6" fill="#000" font-weight="bold" text-anchor="start" letter-spacing="0" textLength="19.8" lengthAdjust="spacingAndGlyphs">tot_c2</text><text x="964.6" y="402.14" font-size="7.6" fill="#000" font-weight="bold" text-anchor="start" letter-spacing="0" textLength="13.4" lengthAdjust="spacingAndGlyphs">2m2</text><text x="960" y="416.04" font-size="7.6" fill="#000" font-weight="bold" text-anchor="start" letter-spacing="0" textLength="10" lengthAdjust="spacingAndGlyphs">C2</text><text x="945" y="422.34" font-size="7.6" fill="#000" font-weight="bold" text-anchor="start" letter-spacing="0" textLength="3" lengthAdjust="spacingAndGlyphs">1</text><text x="941.7" y="429.64" font-size="7.6" fill="#000" font-weight="bold" text-anchor="start" letter-spacing="0" textLength="13.5" lengthAdjust="spacingAndGlyphs">Rtot2</text><text x="909.4" y="436.94" font-size="7.6" fill="#000" font-weight="bold" text-anchor="start" letter-spacing="0" textLength="10.4" lengthAdjust="spacingAndGlyphs">Vb-</text><polyline points="978.5,338.5 984.5,338.5" fill="none" stroke="#2820B8" stroke-width="1.2"/><path d="M993.75,333.3 L984.4,338.3 L993.75,343.3 Z M984.4,333.3 V343.3" fill="none" stroke="#2820B8" stroke-width="1.2"/><polyline points="993.5,338.5 1010.5,338.5" fill="none" stroke="#2820B8" stroke-width="1.2"/><text x="983" y="331.24" font-size="7.6" fill="#000" font-weight="bold" text-anchor="start" letter-spacing="0" textLength="10.75" lengthAdjust="spacingAndGlyphs">D10</text><text x="983.3" y="350.44" font-size="7.6" fill="#000" font-weight="bold" text-anchor="start" letter-spacing="0" textLength="20.7" lengthAdjust="spacingAndGlyphs">1N914</text><polyline points="978.5,338.5 978.5,374.5" fill="none" stroke="#2820B8" stroke-width="1.2"/><rect x="977" y="373" width="3" height="3" fill="#2820B8"/><polyline points="980.5,374.5 981.5,370.5 985.5,379.5 989.5,370.5 993.5,379.5 997.5,370.5 1001.5,379.5 1003.5,374.5" fill="none" stroke="#2820B8" stroke-width="1.2"/><polyline points="1003.5,374.5 1010.5,374.5" fill="none" stroke="#2820B8" stroke-width="1.2"/><rect x="1009" y="373" width="3" height="3" fill="#2820B8"/><text x="985.4" y="368.14" font-size="7.6" fill="#000" font-weight="bold" text-anchor="start" letter-spacing="0" textLength="11.6" lengthAdjust="spacingAndGlyphs">R16</text><text x="985.4" y="386.94" font-size="7.6" fill="#000" font-weight="bold" text-anchor="start" letter-spacing="0" textLength="11.6" lengthAdjust="spacingAndGlyphs">470</text><path d="M1026.7,300.8 V322.7" stroke="#2820B8" stroke-width="2"/><polyline points="1026.5,306.5 1010.5,296.5" fill="none" stroke="#2820B8" stroke-width="1.2"/><polyline points="1026.5,317.5 1010.5,326.5" fill="none" stroke="#2820B8" stroke-width="1.2"/><path d="M1011.28,325.53 L1015.14,320.04 L1017.99,325.32 Z" fill="none" stroke="#2820B8" stroke-width="1"/><polyline points="1010.5,326.5 1010.5,396.5" fill="none" stroke="#2820B8" stroke-width="1.2"/><rect x="1009" y="337" width="3" height="3" fill="#2820B8"/><polyline points="1026.5,311.5 1042.5,311.5 1042.5,412.5 1026.5,412.5" fill="none" stroke="#2820B8" stroke-width="1.2"/><rect x="1041" y="332" width="3" height="3" fill="#2820B8"/><text x="1013.5" y="309.74" font-size="7.6" fill="#000" font-weight="bold" text-anchor="start" letter-spacing="0" textLength="8.5" lengthAdjust="spacingAndGlyphs">Q4</text><text x="999" y="318.14" font-size="7.6" fill="#000" font-weight="bold" text-anchor="start" letter-spacing="0" textLength="25" lengthAdjust="spacingAndGlyphs">2N4401</text><path d="M1026.7,402 V423.75" stroke="#2820B8" stroke-width="2"/><polyline points="1026.5,418.5 1010.5,426.5" fill="none" stroke="#2820B8" stroke-width="1.2"/><polyline points="1026.5,407.5 1010.5,396.5" fill="none" stroke="#2820B8" stroke-width="1.2"/><path d="M1024.19,405.79 L1020.83,399.98 L1017.53,404.99 Z" fill="none" stroke="#2820B8" stroke-width="1"/><polyline points="1010.5,426.5 1010.5,439.5" fill="none" stroke="#2820B8" stroke-width="1.2"/><text x="999" y="412.94" font-size="7.6" fill="#000" font-weight="bold" text-anchor="start" letter-spacing="0" textLength="24" lengthAdjust="spacingAndGlyphs">2N4403</text><text x="1010.4" y="421.24" font-size="7.6" fill="#000" font-weight="bold" text-anchor="start" letter-spacing="0" textLength="8.35" lengthAdjust="spacingAndGlyphs">Q5</text><polyline points="1050.5,333.5 1051.5,329.5 1055.5,338.5 1059.5,329.5 1062.5,338.5 1066.5,329.5 1070.5,338.5 1071.5,333.5" fill="none" stroke="#2820B8" stroke-width="1.2"/><polyline points="1042.5,333.5 1050.5,333.5" fill="none" stroke="#2820B8" stroke-width="1.2"/><polyline points="1071.5,333.5 1084.5,333.5" fill="none" stroke="#2820B8" stroke-width="1.2"/><rect x="1083" y="332" width="3" height="3" fill="#2820B8"/><text x="1055" y="325.44" font-size="7.6" fill="#000" font-weight="bold" text-anchor="start" letter-spacing="0" textLength="11.7" lengthAdjust="spacingAndGlyphs">R21</text><text x="1055.2" y="345.24" font-size="7.6" fill="#000" font-weight="bold" text-anchor="start" letter-spacing="0" textLength="11.5" lengthAdjust="spacingAndGlyphs">330</text><polyline points="1084.5,333.5 1084.5,357.5" fill="none" stroke="#2820B8" stroke-width="1.2"/><polyline points="1084.5,357.5 1088.5,358.5 1079.5,362.5 1088.5,365.5 1079.5,369.5 1088.5,372.5 1079.5,376.5 1084.5,378.5" fill="none" stroke="#2820B8" stroke-width="1.2"/><polyline points="1084.5,378.5 1084.5,439.5" fill="none" stroke="#2820B8" stroke-width="1.2"/><text x="1065.6" y="365.04" font-size="7.6" fill="#000" font-weight="bold" text-anchor="start" letter-spacing="0" textLength="11.4" lengthAdjust="spacingAndGlyphs">R17</text><text x="1066.7" y="377.14" font-size="7.6" fill="#000" font-weight="bold" text-anchor="start" letter-spacing="0" textLength="10.3" lengthAdjust="spacingAndGlyphs">10k</text><polyline points="1084.5,333.5 1101.5,333.5" fill="none" stroke="#2820B8" stroke-width="1.2"/><path d="M1116.7,306 V326.9" stroke="#2820B8" stroke-width="2"/><polyline points="1116.5,321.5 1101.5,333.5" fill="none" stroke="#2820B8" stroke-width="1.2"/><polyline points="1116.5,311.5 1100.5,302.5" fill="none" stroke="#2820B8" stroke-width="1.2"/><path d="M1114.04,309.85 L1110.08,304.43 L1107.33,309.76 Z" fill="none" stroke="#2820B8" stroke-width="1"/><polyline points="1100.5,302.5 1100.5,275.5" fill="none" stroke="#2820B8" stroke-width="1.2"/><path d="M1094.35,275.8 H1106.85 L1100.6,269.6 Z" fill="none" stroke="#2820B8" stroke-width="1.2"/><rect x="1099" y="279" width="3" height="3" fill="#2820B8"/><polyline points="1116.5,317.5 1132.5,317.5" fill="none" stroke="#2820B8" stroke-width="1.2"/><polyline points="1100.5,280.5 1132.5,280.5 1132.5,292.5" fill="none" stroke="#2820B8" stroke-width="1.2"/><path d="M1126.3,292.5 H1138.3 L1132.3,300.8 Z M1126.3,300.8 H1138.3" fill="none" stroke="#2820B8" stroke-width="1.2"/><polyline points="1132.5,300.5 1132.5,357.5" fill="none" stroke="#2820B8" stroke-width="1.2"/><polyline points="1132.5,357.5 1136.5,359.5 1127.5,362.5 1136.5,365.5 1127.5,369.5 1136.5,372.5 1127.5,376.5 1132.5,378.5" fill="none" stroke="#2820B8" stroke-width="1.2"/><polyline points="1132.5,378.5 1132.5,439.5" fill="none" stroke="#2820B8" stroke-width="1.2"/><rect x="1131" y="316" width="3" height="3" fill="#2820B8"/><rect x="1131" y="332" width="3" height="3" fill="#2820B8"/><text x="1116.7" y="288.34" font-size="7.6" fill="#000" font-weight="bold" text-anchor="start" letter-spacing="0" textLength="12.3" lengthAdjust="spacingAndGlyphs">D14</text><text x="1106.25" y="296.24" font-size="7.6" fill="#000" font-weight="bold" text-anchor="start" letter-spacing="0" textLength="22.75" lengthAdjust="spacingAndGlyphs">1N4148</text><text x="1088.5" y="317.14" font-size="7.6" fill="#000" font-weight="bold" text-anchor="start" letter-spacing="0" textLength="25" lengthAdjust="spacingAndGlyphs">2N3906</text><text x="1100" y="326.49" font-size="7.6" fill="#000" font-weight="bold" text-anchor="start" letter-spacing="0" textLength="9.4" lengthAdjust="spacingAndGlyphs">Q6</text><text x="1112.5" y="365.04" font-size="7.6" fill="#000" font-weight="bold" text-anchor="start" letter-spacing="0" textLength="11.5" lengthAdjust="spacingAndGlyphs">R18</text><text x="1112.5" y="377.14" font-size="7.6" fill="#000" font-weight="bold" text-anchor="start" letter-spacing="0" textLength="10" lengthAdjust="spacingAndGlyphs">22k</text><polyline points="1132.5,333.5 1145.5,333.5" fill="none" stroke="#2820B8" stroke-width="1.2"/><polyline points="1145.5,333.5 1146.5,328.5 1150.5,337.5 1154.5,328.5 1157.5,337.5 1161.5,328.5 1165.5,337.5 1166.5,333.5" fill="none" stroke="#2820B8" stroke-width="1.2"/><polyline points="1166.5,333.5 1179.5,333.5" fill="none" stroke="#2820B8" stroke-width="1.2"/><text x="1149" y="325.24" font-size="7.6" fill="#000" font-weight="bold" text-anchor="start" letter-spacing="0" textLength="11.6" lengthAdjust="spacingAndGlyphs">R19</text><text x="1150" y="345.04" font-size="7.6" fill="#000" font-weight="bold" text-anchor="start" letter-spacing="0" textLength="10.6" lengthAdjust="spacingAndGlyphs">470</text><path d="M1197,324.5 H1191.38 A7.88,8.75 0 0 0 1191.38,342 H1197 Z" fill="none" stroke="#2820B8" stroke-width="1.2"/><circle cx="1181.5" cy="333.25" r="2" fill="none" stroke="#2820B8" stroke-width="1"/><text x="1186.7" y="323.24" font-size="7.6" fill="#000" font-weight="bold" text-anchor="start" letter-spacing="0" textLength="7.3" lengthAdjust="spacingAndGlyphs">U5</text><text x="1169" y="350.04" font-size="7.6" fill="#000" font-weight="bold" text-anchor="start" letter-spacing="0" textLength="31" lengthAdjust="spacingAndGlyphs">CD4023B</text><polyline points="1197.5,327.5 1206.5,327.5 1206.5,306.5 1223.5,306.5" fill="none" stroke="#2820B8" stroke-width="1.2"/><path d="M1246,301 H1228 L1223,305.9 L1228,310.8 H1246 Z" fill="none" stroke="#2820B8" stroke-width="1.2"/><text x="1236.5" y="308.49" font-size="7" fill="#000" font-weight="bold" text-anchor="middle" letter-spacing="0">TRG2</text><polyline points="1197.5,333.5 1227.5,333.5" fill="none" stroke="#2820B8" stroke-width="1.2"/><path d="M1244,328.75 H1232.3 L1227.3,333.12 L1232.3,337.5 H1244 Z" fill="none" stroke="#2820B8" stroke-width="1.2"/><text x="1237.65" y="335.71" font-size="7" fill="#000" font-weight="bold" text-anchor="middle" letter-spacing="0">H1</text><polyline points="1197.5,338.5 1212.5,338.5 1212.5,365.5 1223.5,365.5" fill="none" stroke="#2820B8" stroke-width="1.2"/><path d="M1250.8,360.4 H1228 L1223,365.1 L1228,369.8 H1250.8 Z" fill="none" stroke="#2820B8" stroke-width="1.2"/><text x="1238.9" y="367.69" font-size="7" fill="#000" font-weight="bold" text-anchor="middle" letter-spacing="0">CH2en</text><polyline points="1209.5,296.5 1225.5,296.5 1225.5,275.5 1235.5,275.5 1235.5,296.5 1251.5,296.5" fill="none" stroke="#2820B8" stroke-width="1.2"/><text x="1240.8" y="278.14" font-size="7.6" fill="#1A1AD0" font-weight="bold" text-anchor="start" letter-spacing="0" textLength="9.2" lengthAdjust="spacingAndGlyphs">0V</text><text x="1237.7" y="293.34" font-size="7.6" fill="#1A1AD0" font-weight="bold" text-anchor="start" letter-spacing="0" textLength="11.3" lengthAdjust="spacingAndGlyphs">-5V</text><rect x="1031.25" y="195" width="117.75" height="64.2" fill="none" stroke="#2820B8" stroke-width="1.2" stroke-dasharray="2.5,2"/><text x="1037.5" y="206.24" font-size="7.6" fill="#1A1AD0" font-weight="bold" text-anchor="start" letter-spacing="0" textLength="30.2" lengthAdjust="spacingAndGlyphs">Ltx1, Ltx2</text><text x="1037.5" y="215.44" font-size="7.6" fill="#1A1AD0" font-weight="bold" text-anchor="start" letter-spacing="0" textLength="20.5" lengthAdjust="spacingAndGlyphs">d=6.5"</text><text x="1037.5" y="225.44" font-size="7.6" fill="#1A1AD0" font-weight="bold" text-anchor="start" letter-spacing="0" textLength="41.5" lengthAdjust="spacingAndGlyphs">23t#28AWG</text><text x="1037.5" y="233.74" font-size="7.6" fill="#1A1AD0" font-weight="bold" text-anchor="start" letter-spacing="0" textLength="23.5" lengthAdjust="spacingAndGlyphs">~250uH</text><text x="1037.5" y="243.54" font-size="7.6" fill="#1A1AD0" font-weight="bold" text-anchor="start" letter-spacing="0" textLength="20.5" lengthAdjust="spacingAndGlyphs">Rs=2.4</text><text x="1037" y="252.54" font-size="7.6" fill="#1A1AD0" font-weight="bold" text-anchor="start" letter-spacing="0" textLength="93" lengthAdjust="spacingAndGlyphs">Cp=50p -maybe if your lucky-</text><text x="1086.5" y="211.24" font-size="7.6" fill="#000" font-weight="bold" text-anchor="start" letter-spacing="0" textLength="48.9" lengthAdjust="spacingAndGlyphs">.param L=250u</text><text x="1086.5" y="221.24" font-size="7.6" fill="#000" font-weight="bold" text-anchor="start" letter-spacing="0" textLength="50.5" lengthAdjust="spacingAndGlyphs">.param Cp=50p</text><text x="1086.5" y="230.74" font-size="7.6" fill="#000" font-weight="bold" text-anchor="start" letter-spacing="0" textLength="48" lengthAdjust="spacingAndGlyphs">.param Rs=2.4</text><path d="M713,497.7 H724.4 L729.4,502.3 L724.4,506.9 H713 Z" fill="none" stroke="#2820B8" stroke-width="1.2"/><text x="719.2" y="504.89" font-size="7" fill="#000" font-weight="bold" text-anchor="middle" letter-spacing="0">Q7</text><polyline points="729.5,502.5 751.5,502.5" fill="none" stroke="#2820B8" stroke-width="1.2"/><rect x="750" y="501" width="3" height="3" fill="#2820B8"/><polyline points="751.5,492.5 751.5,518.5" fill="none" stroke="#2820B8" stroke-width="1.2"/><polyline points="751.5,492.5 761.5,492.5" fill="none" stroke="#2820B8" stroke-width="1.2"/><path d="M770.4,487.3 L761.7,492.3 L770.4,497.3 Z M761.7,487.3 V497.3" fill="none" stroke="#2820B8" stroke-width="1.2"/><polyline points="770.5,492.5 898.5,492.5" fill="none" stroke="#2820B8" stroke-width="1.2"/><rect x="787" y="491" width="3" height="3" fill="#2820B8"/><polyline points="751.5,518.5 757.5,518.5" fill="none" stroke="#2820B8" stroke-width="1.2"/><polyline points="757.5,518.5 759.5,514.5 763.5,523.5 767.5,514.5 770.5,523.5 774.5,514.5 778.5,523.5 780.5,518.5" fill="none" stroke="#2820B8" stroke-width="1.2"/><polyline points="780.5,518.5 788.5,518.5" fill="none" stroke="#2820B8" stroke-width="1.2"/><rect x="787" y="517" width="3" height="3" fill="#2820B8"/><polyline points="788.5,492.5 788.5,528.5" fill="none" stroke="#2820B8" stroke-width="1.2"/><path d="M782.3,528 H794.3 M782.3,531.5 H794.3" stroke="#2820B8" stroke-width="1.4"/><polyline points="788.5,531.5 788.5,539.5" fill="none" stroke="#2820B8" stroke-width="1.2"/><path d="M782.05,539.2 H794.55 L788.3,545.45 Z" fill="none" stroke="#2820B8" stroke-width="1.2"/><text x="759.6" y="484.24" font-size="7.6" fill="#000" font-weight="bold" text-anchor="start" letter-spacing="0" textLength="11.4" lengthAdjust="spacingAndGlyphs">D12</text><text x="755.4" y="504.74" font-size="7.6" fill="#000" font-weight="bold" text-anchor="start" letter-spacing="0" textLength="20.85" lengthAdjust="spacingAndGlyphs">1N914</text><text x="764.8" y="511.24" font-size="7.6" fill="#000" font-weight="bold" text-anchor="start" letter-spacing="0" textLength="7.2" lengthAdjust="spacingAndGlyphs">R4</text><text x="760.6" y="531.04" font-size="7.6" fill="#000" font-weight="bold" text-anchor="start" letter-spacing="0" textLength="15.65" lengthAdjust="spacingAndGlyphs">47k5</text><text x="789.8" y="526.94" font-size="7.6" fill="#000" font-weight="bold" text-anchor="start" letter-spacing="0" textLength="7.2" lengthAdjust="spacingAndGlyphs">C8</text><text x="790" y="537.34" font-size="7.6" fill="#000" font-weight="bold" text-anchor="start" letter-spacing="0" textLength="10" lengthAdjust="spacingAndGlyphs">12p</text><path d="M713,577.5 H724.4 L729.4,582.1 L724.4,586.7 H713 Z" fill="none" stroke="#2820B8" stroke-width="1.2"/><text x="719.2" y="584.69" font-size="7" fill="#000" font-weight="bold" text-anchor="middle" letter-spacing="0">Q8</text><polyline points="729.5,582.5 751.5,582.5" fill="none" stroke="#2820B8" stroke-width="1.2"/><rect x="750" y="581" width="3" height="3" fill="#2820B8"/><polyline points="751.5,577.5 751.5,603.5" fill="none" stroke="#2820B8" stroke-width="1.2"/><polyline points="751.5,577.5 761.5,577.5" fill="none" stroke="#2820B8" stroke-width="1.2"/><path d="M770.4,572.3 L761.7,577.3 L770.4,582.3 Z M761.7,572.3 V582.3" fill="none" stroke="#2820B8" stroke-width="1.2"/><polyline points="770.5,577.5 809.5,577.5" fill="none" stroke="#2820B8" stroke-width="1.2"/><rect x="787" y="576" width="3" height="3" fill="#2820B8"/><polyline points="751.5,603.5 757.5,603.5" fill="none" stroke="#2820B8" stroke-width="1.2"/><polyline points="757.5,603.5 759.5,598.5 763.5,607.5 767.5,598.5 770.5,607.5 774.5,598.5 778.5,607.5 780.5,603.5" fill="none" stroke="#2820B8" stroke-width="1.2"/><polyline points="780.5,603.5 788.5,603.5" fill="none" stroke="#2820B8" stroke-width="1.2"/><rect x="787" y="602" width="3" height="3" fill="#2820B8"/><polyline points="788.5,577.5 788.5,617.5" fill="none" stroke="#2820B8" stroke-width="1.2"/><path d="M782.3,617 H794.3 M782.3,620.5 H794.3" stroke="#2820B8" stroke-width="1.4"/><polyline points="788.5,620.5 788.5,630.5" fill="none" stroke="#2820B8" stroke-width="1.2"/><path d="M782.05,630.4 H794.55 L788.3,636.65 Z" fill="none" stroke="#2820B8" stroke-width="1.2"/><text x="759.6" y="568.99" font-size="7.6" fill="#000" font-weight="bold" text-anchor="start" letter-spacing="0" textLength="11.4" lengthAdjust="spacingAndGlyphs">D2</text><text x="755.4" y="589.44" font-size="7.6" fill="#000" font-weight="bold" text-anchor="start" letter-spacing="0" textLength="20.85" lengthAdjust="spacingAndGlyphs">1N914</text><text x="764.8" y="596.04" font-size="7.6" fill="#000" font-weight="bold" text-anchor="start" letter-spacing="0" textLength="7.2" lengthAdjust="spacingAndGlyphs">R1</text><text x="760.6" y="615.04" font-size="7.6" fill="#000" font-weight="bold" text-anchor="start" letter-spacing="0" textLength="15.65" lengthAdjust="spacingAndGlyphs">47k5</text><text x="789.8" y="617.54" font-size="7.6" fill="#000" font-weight="bold" text-anchor="start" letter-spacing="0" textLength="7.2" lengthAdjust="spacingAndGlyphs">C9</text><text x="790" y="627.54" font-size="7.6" fill="#000" font-weight="bold" text-anchor="start" letter-spacing="0" textLength="10" lengthAdjust="spacingAndGlyphs">12p</text><rect x="818" y="491" width="3" height="3" fill="#2820B8"/><polyline points="819.5,492.5 819.5,577.5 898.5,577.5" fill="none" stroke="#2820B8" stroke-width="1.2"/><rect x="808" y="576" width="3" height="3" fill="#2820B8"/><polyline points="809.5,545.5 809.5,635.5" fill="none" stroke="#2820B8" stroke-width="1.2"/><polyline points="809.5,545.5 898.5,545.5" fill="none" stroke="#2820B8" stroke-width="1.2"/><polyline points="809.5,635.5 898.5,635.5" fill="none" stroke="#2820B8" stroke-width="1.2"/><path d="M827.3,508.5 H851.5 L856.5,513 L851.5,517.5 H827.3 Z" fill="none" stroke="#2820B8" stroke-width="1.2"/><text x="839.9" y="515.59" font-size="7" fill="#000" font-weight="bold" text-anchor="middle" letter-spacing="0">CH1en</text><path d="M835.6,520 H846.25 L851.25,524.7 L846.25,529.4 H835.6 Z" fill="none" stroke="#2820B8" stroke-width="1.2"/><text x="841.42" y="527.29" font-size="7" fill="#000" font-weight="bold" text-anchor="middle" letter-spacing="0">H1</text><polyline points="856.5,513.5 872.5,513.5" fill="none" stroke="#2820B8" stroke-width="1.2"/><polyline points="851.5,524.5 872.5,524.5" fill="none" stroke="#2820B8" stroke-width="1.2"/><path d="M872,508.5 H873.83 A9.68,10.75 0 0 1 873.83,530 H872 Z" fill="none" stroke="#2820B8" stroke-width="1.2"/><polyline points="883.5,519.5 889.5,519.5" fill="none" stroke="#2820B8" stroke-width="1.2"/><rect x="888" y="518" width="3" height="3" fill="#2820B8"/><polyline points="889.5,502.5 889.5,534.5" fill="none" stroke="#2820B8" stroke-width="1.2"/><polyline points="889.5,502.5 898.5,502.5" fill="none" stroke="#2820B8" stroke-width="1.2"/><polyline points="889.5,534.5 898.5,534.5" fill="none" stroke="#2820B8" stroke-width="1.2"/><text x="879" y="530.24" font-size="7.6" fill="#000" font-weight="bold" text-anchor="start" letter-spacing="0" textLength="9" lengthAdjust="spacingAndGlyphs">U8</text><text x="867" y="538.24" font-size="7.6" fill="#000" font-weight="bold" text-anchor="start" letter-spacing="0" textLength="23" lengthAdjust="spacingAndGlyphs">CD4081B</text><path d="M824.6,593.5 H835.8 L840.8,597.9 L835.8,602.3 H824.6 Z" fill="none" stroke="#2820B8" stroke-width="1.2"/><text x="830.7" y="600.49" font-size="7" fill="#000" font-weight="bold" text-anchor="middle" letter-spacing="0">H2</text><path d="M817.5,603.3 H840 L845,608 L840,612.7 H817.5 Z" fill="none" stroke="#2820B8" stroke-width="1.2"/><text x="829.25" y="610.59" font-size="7" fill="#000" font-weight="bold" text-anchor="middle" letter-spacing="0">CH1en</text><polyline points="840.5,598.5 856.5,598.5" fill="none" stroke="#2820B8" stroke-width="1.2"/><polyline points="845.5,608.5 856.5,608.5" fill="none" stroke="#2820B8" stroke-width="1.2"/><path d="M856.5,593 H858.66 A9.34,10.38 0 0 1 858.66,613.75 H856.5 Z" fill="none" stroke="#2820B8" stroke-width="1.2"/><polyline points="868.5,603.5 883.5,603.5" fill="none" stroke="#2820B8" stroke-width="1.2"/><rect x="882" y="602" width="3" height="3" fill="#2820B8"/><polyline points="883.5,587.5 883.5,624.5" fill="none" stroke="#2820B8" stroke-width="1.2"/><polyline points="883.5,587.5 898.5,587.5" fill="none" stroke="#2820B8" stroke-width="1.2"/><polyline points="883.5,624.5 898.5,624.5" fill="none" stroke="#2820B8" stroke-width="1.2"/><text x="864" y="615.04" font-size="7.6" fill="#000" font-weight="bold" text-anchor="start" letter-spacing="0" textLength="11" lengthAdjust="spacingAndGlyphs">U15</text><text x="851" y="622.34" font-size="7.6" fill="#000" font-weight="bold" text-anchor="start" letter-spacing="0" textLength="30.5" lengthAdjust="spacingAndGlyphs">CD4081B</text><path d="M898.75,487.3 H900.93 A8.86,9.85 0 0 1 900.93,507 H898.75 Z" fill="none" stroke="#2820B8" stroke-width="1.2"/><polyline points="909.5,497.5 930.5,497.5" fill="none" stroke="#2820B8" stroke-width="1.2"/><path d="M930.2,492.5 H948 L953,497.2 L948,501.9 H930.2 Z" fill="none" stroke="#2820B8" stroke-width="1.2"/><text x="939.6" y="499.79" font-size="7" fill="#000" font-weight="bold" text-anchor="middle" letter-spacing="0">TGT1</text><text x="903" y="509.24" font-size="7.6" fill="#000" font-weight="bold" text-anchor="start" letter-spacing="0" textLength="12" lengthAdjust="spacingAndGlyphs">U3</text><text x="894" y="516.04" font-size="7.6" fill="#000" font-weight="bold" text-anchor="start" letter-spacing="0" textLength="31.4" lengthAdjust="spacingAndGlyphs">CD4081B</text><path d="M898.75,529.4 H900.62 A9.18,10.2 0 0 1 900.62,549.8 H898.75 Z" fill="none" stroke="#2820B8" stroke-width="1.2"/><polyline points="909.5,539.5 930.5,539.5" fill="none" stroke="#2820B8" stroke-width="1.2"/><path d="M930.2,534.7 H948 L953,539.4 L948,544.1 H930.2 Z" fill="none" stroke="#2820B8" stroke-width="1.2"/><text x="939.6" y="541.99" font-size="7" fill="#000" font-weight="bold" text-anchor="middle" letter-spacing="0">GB1</text><text x="903" y="552.04" font-size="7.6" fill="#000" font-weight="bold" text-anchor="start" letter-spacing="0" textLength="12" lengthAdjust="spacingAndGlyphs">U13</text><text x="894" y="558.84" font-size="7.6" fill="#000" font-weight="bold" text-anchor="start" letter-spacing="0" textLength="31.4" lengthAdjust="spacingAndGlyphs">CD4081B</text><path d="M898.75,572 H900.57 A9.22,10.25 0 0 1 900.57,592.5 H898.75 Z" fill="none" stroke="#2820B8" stroke-width="1.2"/><polyline points="909.5,581.5 930.5,581.5" fill="none" stroke="#2820B8" stroke-width="1.2"/><path d="M930.2,577.1 H948 L953,581.8 L948,586.5 H930.2 Z" fill="none" stroke="#2820B8" stroke-width="1.2"/><text x="939.6" y="584.39" font-size="7" fill="#000" font-weight="bold" text-anchor="middle" letter-spacing="0">EFa1</text><text x="903" y="594.74" font-size="7.6" fill="#000" font-weight="bold" text-anchor="start" letter-spacing="0" textLength="12" lengthAdjust="spacingAndGlyphs">U16</text><text x="894" y="601.54" font-size="7.6" fill="#000" font-weight="bold" text-anchor="start" letter-spacing="0" textLength="31.4" lengthAdjust="spacingAndGlyphs">CD4081B</text><path d="M898.75,619.8 H900.89 A8.91,9.9 0 0 1 900.89,639.6 H898.75 Z" fill="none" stroke="#2820B8" stroke-width="1.2"/><polyline points="909.5,630.5 930.5,630.5" fill="none" stroke="#2820B8" stroke-width="1.2"/><path d="M930.2,625.4 H948 L953,630.1 L948,634.8 H930.2 Z" fill="none" stroke="#2820B8" stroke-width="1.2"/><text x="939.6" y="632.69" font-size="7" fill="#000" font-weight="bold" text-anchor="middle" letter-spacing="0">EFb1</text><text x="903" y="641.84" font-size="7.6" fill="#000" font-weight="bold" text-anchor="start" letter-spacing="0" textLength="12" lengthAdjust="spacingAndGlyphs">U17</text><text x="894" y="648.64" font-size="7.6" fill="#000" font-weight="bold" text-anchor="start" letter-spacing="0" textLength="31.4" lengthAdjust="spacingAndGlyphs">CD4081B</text><path d="M994,507.6 H1005.4 L1010.4,512.3 L1005.4,517 H994 Z" fill="none" stroke="#2820B8" stroke-width="1.2"/><text x="1000.2" y="514.89" font-size="7" fill="#000" font-weight="bold" text-anchor="middle" letter-spacing="0">Q6</text><polyline points="1010.5,512.5 1015.5,512.5" fill="none" stroke="#2820B8" stroke-width="1.2"/><rect x="1014" y="511" width="3" height="3" fill="#2820B8"/><polyline points="1015.5,508.5 1015.5,534.5" fill="none" stroke="#2820B8" stroke-width="1.2"/><polyline points="1015.5,508.5 1026.5,508.5" fill="none" stroke="#2820B8" stroke-width="1.2"/><path d="M1035.8,503.1 L1026.5,508.1 L1035.8,513.1 Z M1026.5,503.1 V513.1" fill="none" stroke="#2820B8" stroke-width="1.2"/><polyline points="1035.5,508.5 1095.5,508.5" fill="none" stroke="#2820B8" stroke-width="1.2"/><rect x="1052" y="507" width="3" height="3" fill="#2820B8"/><rect x="1094" y="507" width="3" height="3" fill="#2820B8"/><polyline points="1053.5,508.5 1053.5,542.5" fill="none" stroke="#2820B8" stroke-width="1.2"/><polyline points="1015.5,534.5 1023.5,534.5" fill="none" stroke="#2820B8" stroke-width="1.2"/><polyline points="1023.5,534.5 1025.5,530.5 1028.5,539.5 1032.5,530.5 1036.5,539.5 1039.5,530.5 1043.5,539.5 1045.5,534.5" fill="none" stroke="#2820B8" stroke-width="1.2"/><polyline points="1045.5,534.5 1053.5,534.5" fill="none" stroke="#2820B8" stroke-width="1.2"/><rect x="1052" y="533" width="3" height="3" fill="#2820B8"/><path d="M1047.5,542.5 H1059.5 M1047.5,546 H1059.5" stroke="#2820B8" stroke-width="1.4"/><polyline points="1053.5,546.5 1053.5,555.5" fill="none" stroke="#2820B8" stroke-width="1.2"/><path d="M1047.25,555 H1059.75 L1053.5,561.25 Z" fill="none" stroke="#2820B8" stroke-width="1.2"/><text x="1026.5" y="500.44" font-size="7.6" fill="#000" font-weight="bold" text-anchor="start" letter-spacing="0" textLength="7.25" lengthAdjust="spacingAndGlyphs">D7</text><text x="1020" y="520.24" font-size="7.6" fill="#000" font-weight="bold" text-anchor="start" letter-spacing="0" textLength="21" lengthAdjust="spacingAndGlyphs">1N914</text><text x="1027.5" y="527.14" font-size="7.6" fill="#000" font-weight="bold" text-anchor="start" letter-spacing="0" textLength="11.5" lengthAdjust="spacingAndGlyphs">R22</text><text x="1025.4" y="546.24" font-size="7.6" fill="#000" font-weight="bold" text-anchor="start" letter-spacing="0" textLength="15.6" lengthAdjust="spacingAndGlyphs">47k5</text><text x="1054.6" y="542.14" font-size="7.6" fill="#000" font-weight="bold" text-anchor="start" letter-spacing="0" textLength="7.4" lengthAdjust="spacingAndGlyphs">C5</text><text x="1055.2" y="553.54" font-size="7.6" fill="#000" font-weight="bold" text-anchor="start" letter-spacing="0" textLength="9.8" lengthAdjust="spacingAndGlyphs">12p</text><path d="M994,603.6 H1005.4 L1010.4,608.3 L1005.4,613 H994 Z" fill="none" stroke="#2820B8" stroke-width="1.2"/><text x="1000.2" y="610.89" font-size="7" fill="#000" font-weight="bold" text-anchor="middle" letter-spacing="0">Q8</text><polyline points="1010.5,608.5 1015.5,608.5" fill="none" stroke="#2820B8" stroke-width="1.2"/><rect x="1014" y="607" width="3" height="3" fill="#2820B8"/><polyline points="1015.5,598.5 1015.5,624.5" fill="none" stroke="#2820B8" stroke-width="1.2"/><polyline points="1015.5,598.5 1026.5,598.5" fill="none" stroke="#2820B8" stroke-width="1.2"/><path d="M1035.8,593.3 L1026.5,598.3 L1035.8,603.3 Z M1026.5,593.3 V603.3" fill="none" stroke="#2820B8" stroke-width="1.2"/><polyline points="1035.5,598.5 1053.5,598.5 1053.5,603.5" fill="none" stroke="#2820B8" stroke-width="1.2"/><rect x="1052" y="602" width="3" height="3" fill="#2820B8"/><polyline points="1053.5,603.5 1084.5,603.5" fill="none" stroke="#2820B8" stroke-width="1.2"/><rect x="1083" y="602" width="3" height="3" fill="#2820B8"/><polyline points="1053.5,603.5 1053.5,638.5" fill="none" stroke="#2820B8" stroke-width="1.2"/><polyline points="1015.5,624.5 1023.5,624.5" fill="none" stroke="#2820B8" stroke-width="1.2"/><polyline points="1023.5,624.5 1025.5,620.5 1028.5,629.5 1032.5,620.5 1036.5,629.5 1039.5,620.5 1043.5,629.5 1045.5,624.5" fill="none" stroke="#2820B8" stroke-width="1.2"/><polyline points="1045.5,624.5 1053.5,624.5" fill="none" stroke="#2820B8" stroke-width="1.2"/><rect x="1052" y="623" width="3" height="3" fill="#2820B8"/><path d="M1047.5,638.5 H1059.5 M1047.5,642 H1059.5" stroke="#2820B8" stroke-width="1.4"/><polyline points="1053.5,642.5 1053.5,651.5" fill="none" stroke="#2820B8" stroke-width="1.2"/><path d="M1047.25,651.7 H1059.75 L1053.5,657.95 Z" fill="none" stroke="#2820B8" stroke-width="1.2"/><text x="1026.5" y="590.44" font-size="7.6" fill="#000" font-weight="bold" text-anchor="start" letter-spacing="0" textLength="7.25" lengthAdjust="spacingAndGlyphs">D6</text><text x="1020" y="609.74" font-size="7.6" fill="#000" font-weight="bold" text-anchor="start" letter-spacing="0" textLength="21" lengthAdjust="spacingAndGlyphs">1N914</text><text x="1027.5" y="617.14" font-size="7.6" fill="#000" font-weight="bold" text-anchor="start" letter-spacing="0" textLength="11.5" lengthAdjust="spacingAndGlyphs">R18</text><text x="1025.4" y="636.94" font-size="7.6" fill="#000" font-weight="bold" text-anchor="start" letter-spacing="0" textLength="15.6" lengthAdjust="spacingAndGlyphs">47k5</text><text x="1054.6" y="638.14" font-size="7.6" fill="#000" font-weight="bold" text-anchor="start" letter-spacing="0" textLength="7.4" lengthAdjust="spacingAndGlyphs">C6</text><text x="1055.2" y="648.14" font-size="7.6" fill="#000" font-weight="bold" text-anchor="start" letter-spacing="0" textLength="9.8" lengthAdjust="spacingAndGlyphs">12p</text><polyline points="1095.5,486.5 1095.5,582.5" fill="none" stroke="#2820B8" stroke-width="1.2"/><polyline points="1095.5,486.5 1185.5,486.5" fill="none" stroke="#2820B8" stroke-width="1.2"/><polyline points="1095.5,582.5 1174.5,582.5" fill="none" stroke="#2820B8" stroke-width="1.2"/><polyline points="1084.5,539.5 1084.5,640.5" fill="none" stroke="#2820B8" stroke-width="1.2"/><polyline points="1084.5,539.5 1185.5,539.5" fill="none" stroke="#2820B8" stroke-width="1.2"/><polyline points="1084.5,640.5 1174.5,640.5" fill="none" stroke="#2820B8" stroke-width="1.2"/><path d="M1114.6,503.3 H1137.5 L1142.5,508.15 L1137.5,513 H1114.6 Z" fill="none" stroke="#2820B8" stroke-width="1.2"/><text x="1126.55" y="510.74" font-size="7" fill="#000" font-weight="bold" text-anchor="middle" letter-spacing="0">CH2en</text><path d="M1116,513.75 H1126.7 L1131.7,518.52 L1126.7,523.3 H1116 Z" fill="none" stroke="#2820B8" stroke-width="1.2"/><text x="1121.85" y="521.12" font-size="7" fill="#000" font-weight="bold" text-anchor="middle" letter-spacing="0">H1</text><polyline points="1142.5,508.5 1153.5,508.5" fill="none" stroke="#2820B8" stroke-width="1.2"/><polyline points="1131.5,518.5 1153.5,518.5" fill="none" stroke="#2820B8" stroke-width="1.2"/><path d="M1153,503 H1154.66 A9.34,10.38 0 0 1 1154.66,523.75 H1153 Z" fill="none" stroke="#2820B8" stroke-width="1.2"/><polyline points="1164.5,513.5 1174.5,513.5" fill="none" stroke="#2820B8" stroke-width="1.2"/><rect x="1173" y="512" width="3" height="3" fill="#2820B8"/><polyline points="1174.5,497.5 1174.5,529.5" fill="none" stroke="#2820B8" stroke-width="1.2"/><polyline points="1174.5,497.5 1185.5,497.5" fill="none" stroke="#2820B8" stroke-width="1.2"/><polyline points="1174.5,529.5 1185.5,529.5" fill="none" stroke="#2820B8" stroke-width="1.2"/><text x="1160" y="525.24" font-size="7.6" fill="#000" font-weight="bold" text-anchor="start" letter-spacing="0" textLength="10" lengthAdjust="spacingAndGlyphs">U14</text><text x="1147.5" y="532.14" font-size="7.6" fill="#000" font-weight="bold" text-anchor="start" letter-spacing="0" textLength="30.5" lengthAdjust="spacingAndGlyphs">CD4081B</text><path d="M1185.4,482 H1187.3 A9,10 0 0 1 1187.3,502 H1185.4 Z" fill="none" stroke="#2820B8" stroke-width="1.2"/><polyline points="1196.5,492.5 1216.5,492.5" fill="none" stroke="#2820B8" stroke-width="1.2"/><path d="M1216.4,487.4 H1234.4 L1239.4,492.1 L1234.4,496.8 H1216.4 Z" fill="none" stroke="#2820B8" stroke-width="1.2"/><text x="1225.9" y="494.69" font-size="7" fill="#000" font-weight="bold" text-anchor="middle" letter-spacing="0">TGT2</text><text x="1189.3" y="503.74" font-size="7.6" fill="#000" font-weight="bold" text-anchor="start" letter-spacing="0" textLength="13" lengthAdjust="spacingAndGlyphs">U23</text><text x="1179.4" y="510.74" font-size="7.6" fill="#000" font-weight="bold" text-anchor="start" letter-spacing="0" textLength="31" lengthAdjust="spacingAndGlyphs">CD4081B</text><path d="M1185.4,524.4 H1187.21 A9.09,10.1 0 0 1 1187.21,544.6 H1185.4 Z" fill="none" stroke="#2820B8" stroke-width="1.2"/><polyline points="1196.5,533.5 1216.5,533.5" fill="none" stroke="#2820B8" stroke-width="1.2"/><path d="M1216.4,529.1 H1234.4 L1239.4,533.8 L1234.4,538.5 H1216.4 Z" fill="none" stroke="#2820B8" stroke-width="1.2"/><text x="1225.9" y="536.39" font-size="7" fill="#000" font-weight="bold" text-anchor="middle" letter-spacing="0">GB2</text><text x="1189.3" y="546.34" font-size="7.6" fill="#000" font-weight="bold" text-anchor="start" letter-spacing="0" textLength="13" lengthAdjust="spacingAndGlyphs">U18</text><text x="1179.4" y="553.34" font-size="7.6" fill="#000" font-weight="bold" text-anchor="start" letter-spacing="0" textLength="31" lengthAdjust="spacingAndGlyphs">CD4081B</text><path d="M1174.7,577.3 H1176.87 A9.14,10.15 0 0 1 1176.87,597.6 H1174.7 Z" fill="none" stroke="#2820B8" stroke-width="1.2"/><polyline points="1186.5,587.5 1206.5,587.5" fill="none" stroke="#2820B8" stroke-width="1.2"/><path d="M1206.25,582.5 H1224.25 L1229.25,587.2 L1224.25,591.9 H1206.25 Z" fill="none" stroke="#2820B8" stroke-width="1.2"/><text x="1215.75" y="589.79" font-size="7" fill="#000" font-weight="bold" text-anchor="middle" letter-spacing="0">EFa2</text><text x="1179" y="599.34" font-size="7.6" fill="#000" font-weight="bold" text-anchor="start" letter-spacing="0" textLength="13" lengthAdjust="spacingAndGlyphs">U21</text><text x="1168.7" y="606.34" font-size="7.6" fill="#000" font-weight="bold" text-anchor="start" letter-spacing="0" textLength="31" lengthAdjust="spacingAndGlyphs">CD4081B</text><path d="M1174.7,625.5 H1176.87 A9.13,10.15 0 0 1 1176.87,645.8 H1174.7 Z" fill="none" stroke="#2820B8" stroke-width="1.2"/><polyline points="1186.5,635.5 1206.5,635.5" fill="none" stroke="#2820B8" stroke-width="1.2"/><path d="M1206.25,630.7 H1224.25 L1229.25,635.4 L1224.25,640.1 H1206.25 Z" fill="none" stroke="#2820B8" stroke-width="1.2"/><text x="1215.75" y="637.99" font-size="7" fill="#000" font-weight="bold" text-anchor="middle" letter-spacing="0">EFb2</text><text x="1179" y="647.54" font-size="7.6" fill="#000" font-weight="bold" text-anchor="start" letter-spacing="0" textLength="13" lengthAdjust="spacingAndGlyphs">U22</text><text x="1168.7" y="654.54" font-size="7.6" fill="#000" font-weight="bold" text-anchor="start" letter-spacing="0" textLength="31" lengthAdjust="spacingAndGlyphs">CD4081B</text><path d="M1098.3,603.5 H1120.8 L1125.8,608.25 L1120.8,613 H1098.3 Z" fill="none" stroke="#2820B8" stroke-width="1.2"/><text x="1110.05" y="610.84" font-size="7" fill="#000" font-weight="bold" text-anchor="middle" letter-spacing="0">CH2en</text><path d="M1105.2,614.4 H1116.25 L1121.25,619.2 L1116.25,624 H1105.2 Z" fill="none" stroke="#2820B8" stroke-width="1.2"/><text x="1111.22" y="621.79" font-size="7" fill="#000" font-weight="bold" text-anchor="middle" letter-spacing="0">H2</text><polyline points="1125.5,608.5 1143.5,608.5" fill="none" stroke="#2820B8" stroke-width="1.2"/><polyline points="1121.5,619.5 1143.5,619.5" fill="none" stroke="#2820B8" stroke-width="1.2"/><path d="M1143,604 H1145.02 A9.18,10.2 0 0 1 1145.02,624.4 H1143 Z" fill="none" stroke="#2820B8" stroke-width="1.2"/><polyline points="1154.5,614.5 1164.5,614.5" fill="none" stroke="#2820B8" stroke-width="1.2"/><rect x="1163" y="613" width="3" height="3" fill="#2820B8"/><polyline points="1164.5,591.5 1164.5,630.5" fill="none" stroke="#2820B8" stroke-width="1.2"/><polyline points="1164.5,591.5 1174.5,591.5" fill="none" stroke="#2820B8" stroke-width="1.2"/><polyline points="1164.5,630.5 1174.5,630.5" fill="none" stroke="#2820B8" stroke-width="1.2"/><text x="1150" y="626.04" font-size="7.6" fill="#000" font-weight="bold" text-anchor="start" letter-spacing="0" textLength="11" lengthAdjust="spacingAndGlyphs">U20</text><text x="1136.5" y="632.94" font-size="7.6" fill="#000" font-weight="bold" text-anchor="start" letter-spacing="0" textLength="31.2" lengthAdjust="spacingAndGlyphs">CD4081B</text><polyline points="1219.5,577.5 1235.5,577.5 1235.5,563.5 1245.5,563.5 1245.5,577.5 1262.5,577.5" fill="none" stroke="#2820B8" stroke-width="1.2"/><text x="1250.5" y="565.94" font-size="7.6" fill="#1A1AD0" font-weight="bold" text-anchor="start" letter-spacing="0" textLength="9.5" lengthAdjust="spacingAndGlyphs">0V</text><text x="1248.4" y="574.34" font-size="7.6" fill="#1A1AD0" font-weight="bold" text-anchor="start" letter-spacing="0" textLength="11.6" lengthAdjust="spacingAndGlyphs">-5V</text></svg></body></html>
